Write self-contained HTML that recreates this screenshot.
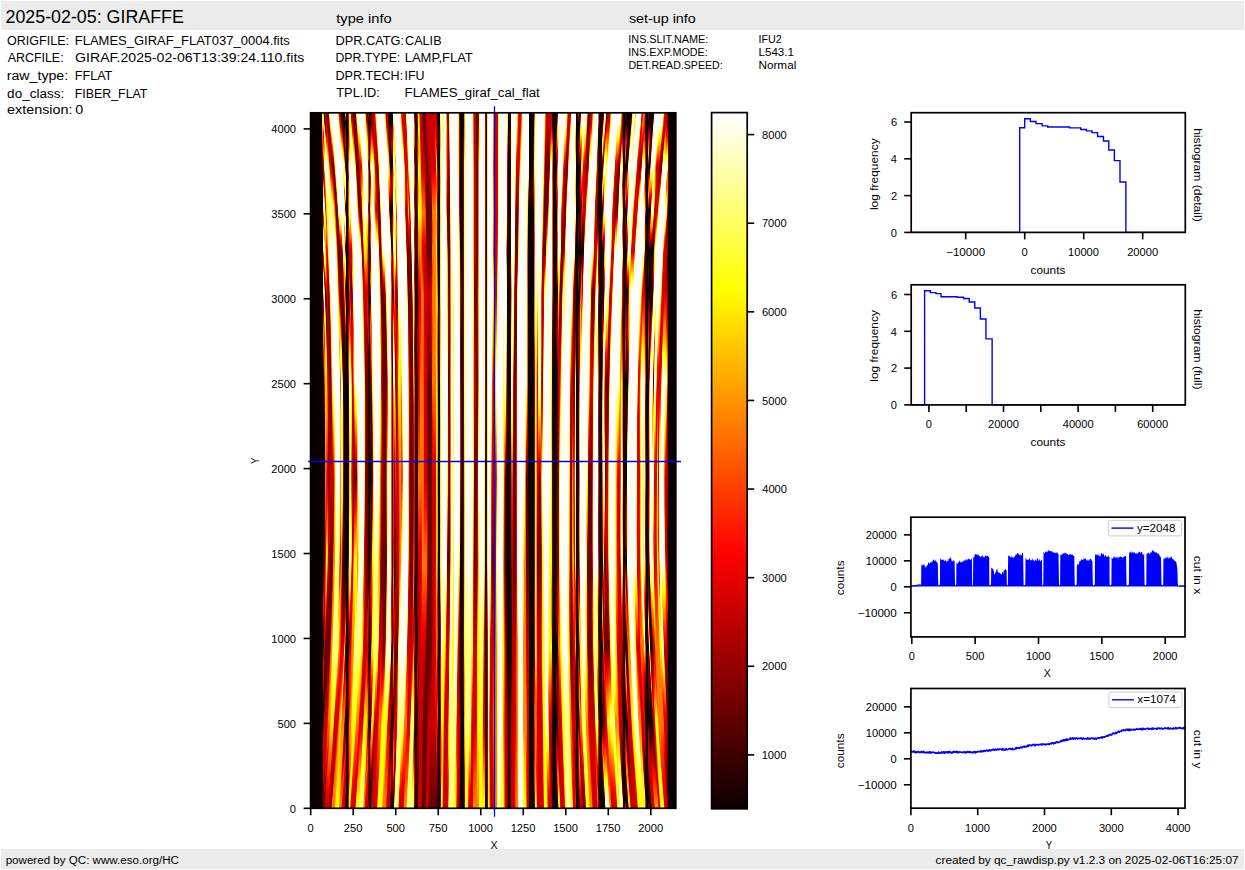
<!DOCTYPE html>
<html><head><meta charset="utf-8"><style>
html,body{margin:0;padding:0;background:#fff;}
svg{display:block;}
i{position:absolute;top:0;width:1.2px;height:100%;display:block;}
text{font-family:"Liberation Sans",sans-serif;}
</style></head><body>
<div style="position:absolute;left:310.6px;top:112.8px;width:365.20px;height:695.50px;overflow:hidden">
<i style="left:-0.6px;background:linear-gradient(#0b0000 -0px,#0b0000 696px)"></i>
<i style="left:0.4px;background:linear-gradient(#0b0000 -0px,#0b0000 696px)"></i>
<i style="left:1.4px;background:linear-gradient(#0b0000 -0px,#0b0000 696px)"></i>
<i style="left:2.4px;background:linear-gradient(#0b0000 -0px,#0b0000 696px)"></i>
<i style="left:3.4px;background:linear-gradient(#0b0000 -0px,#0b0000 696px)"></i>
<i style="left:4.4px;background:linear-gradient(#0b0000 -0px,#0b0000 696px)"></i>
<i style="left:5.4px;background:linear-gradient(#0b0000 -0px,#0b0000 696px)"></i>
<i style="left:6.4px;background:linear-gradient(#0b0000 -0px,#0b0000 696px)"></i>
<i style="left:7.4px;background:linear-gradient(#0b0000 -0px,#0b0000 696px)"></i>
<i style="left:8.4px;background:linear-gradient(#0b0000 -0px,#0b0000 696px)"></i>
<i style="left:9.4px;background:linear-gradient(#0b0000 -0px,#0b0000 696px)"></i>
<i style="left:10.4px;background:linear-gradient(#0b0000 -0px,#0b0000 696px)"></i>
<i style="left:11.4px;background:linear-gradient(#ffff04 -0px,#fff200 11px,#fa0000 35px,#3b0000 54px,#0b0000 112px,#170000 628px,#3b0000 696px)"></i>
<i style="left:12.4px;background:linear-gradient(#ff4100 -0px,#ffe900 3px,#ffff33 4px,#ffffd9 6px,#ffffff 7px,#ffffff 9px,#ffffd6 10px,#fffa00 13px,#ff1700 19px,#df0000 21px,#c90000 22px,#ff0700 26px,#ffa200 37px,#ff4700 44px,#f10000 48px,#be0000 50px,#c80000 54px,#690000 64px,#ff0000 69px,#ffff0e 76px,#ffff75 78px,#ffffb6 82px,#fffffc 93px,#ffffdd 94px,#ffff25 97px,#ffec00 98px,#ff3e00 103px,#f90000 106px,#c80000 110px,#ef0000 111px,#ff9900 115px,#fff500 118px,#ffffcb 125px,#fffffe 128px,#fffff0 133px,#ffff21 137px,#ffeb00 138px,#ff2800 143px,#f10000 145px,#a50000 150px,#9d0000 152px,#ad0000 153px,#ff0100 155px,#fff500 161px,#ffffb3 168px,#ffffec 172px,#ffffe5 173px,#fff400 179px,#ff0700 189px,#780000 197px,#890000 199px,#ff0700 207px,#ff8500 220px,#ff8000 228px,#f60000 239px,#290000 257px,#0b0000 274px,#160000 452px,#810000 474px,#ff0800 486px,#f10000 499px,#740000 512px,#470000 516px,#310000 530px,#5a0000 536px,#f40000 551px,#e50000 568px,#5c0000 582px,#230000 587px,#160000 604px,#e80000 620px,#cd0000 649px,#c80000 666px,#680000 676px,#6c0000 679px,#a30000 685px,#850000 689px,#180000 696px)"></i>
<i style="left:13.4px;background:linear-gradient(#730000 -0px,#120000 6px,#290000 7px,#d30000 10px,#ff1300 11px,#fff700 15px,#ffffcc 18px,#ffffff 19px,#fffffc 22px,#ffff10 27px,#ffc900 30px,#ff9000 35px,#fffa00 42px,#ffffaf 50px,#ffff33 54px,#ffff01 55px,#ff4300 62px,#ff1600 64px,#f60000 70px,#970000 78px,#ff0400 82px,#fffb00 89px,#ffffcb 93px,#fffff1 95px,#fffff6 98px,#ffff67 109px,#ffff5e 110px,#ffff0b 112px,#ff9d00 118px,#ff9600 123px,#ffd200 128px,#fff400 129px,#ffffac 133px,#fffff8 137px,#ffffc2 141px,#fffc00 150px,#ffc100 153px,#f50000 159px,#af0000 162px,#c50000 167px,#ff0b00 171px,#ffa300 176px,#ffef00 178px,#ffff63 181px,#ffffe4 185px,#ffffca 197px,#fff800 205px,#ff5f00 217px,#ff1300 228px,#ff7300 243px,#ff7a00 257px,#fa0000 273px,#240000 308px,#0b0000 332px,#150000 404px,#380000 430px,#400000 448px,#af0000 464px,#bc0000 480px,#ae0000 491px,#d90000 525px,#cf0000 530px,#ab0000 538px,#7c0000 558px,#380000 569px,#2b0000 587px,#c90000 605px,#cb0000 654px,#9a0000 664px,#c50000 673px,#9c0000 677px,#200000 684px,#620000 690px,#c00000 696px)"></i>
<i style="left:14.4px;background:linear-gradient(#cd0000 -0px,#c40000 7px,#8e0000 12px,#900000 18px,#a00000 19px,#ff1100 21px,#fff400 26px,#ffffe7 31px,#ffffff 33px,#fffffc 35px,#ffff89 40px,#ffff6d 45px,#ffff98 49px,#fffffd 54px,#ffffc2 64px,#ffff0e 69px,#ffa500 75px,#f40000 90px,#c70000 93px,#f00000 95px,#ff8700 100px,#ffea00 106px,#ffff1c 110px,#fff100 113px,#ffaa00 125px,#ff9100 133px,#ffeb00 142px,#fffb00 152px,#ff7800 163px,#f40000 170px,#380000 179px,#220000 185px,#fd0000 194px,#ffff02 207px,#ffff74 212px,#ffff7f 223px,#ffff69 228px,#fffa00 237px,#ffcf00 251px,#ffd500 270px,#ffb000 293px,#ffb200 312px,#ff7700 349px,#ff7700 368px,#ff3c00 403px,#f50000 419px,#e50000 437px,#ff1000 446px,#ff6200 477px,#ff3f00 500px,#f50000 511px,#690000 529px,#410000 569px,#b10000 588px,#cd0000 622px,#d40000 646px,#e00000 655px,#e70000 661px,#5a0000 672px,#d60000 685px,#cd0000 696px)"></i>
<i style="left:15.4px;background:linear-gradient(#930000 -0px,#cd0000 8px,#f30000 17px,#ff1f00 27px,#ff4a00 31px,#fff800 36px,#ffffc6 42px,#ffffff 45px,#ffffe5 63px,#ffff6b 79px,#fffc00 85px,#ffd200 95px,#ff1700 110px,#ff6200 117px,#ff3300 129px,#ff0000 135px,#ff4700 163px,#f50000 175px,#cb0000 180px,#b10000 188px,#540000 211px,#ff0600 224px,#ffc200 240px,#fffd00 250px,#ffff1e 257px,#ffed00 273px,#ff7300 316px,#ff0a00 381px,#ff1800 404px,#ff9700 428px,#ffe400 440px,#fff800 449px,#ff8c00 477px,#f40000 492px,#870000 506px,#590000 552px,#9c0000 574px,#cd0000 617px,#ff0600 632px,#ff1000 647px,#dd0000 652px,#950000 658px,#ff0600 672px,#cd0000 692px,#cd0000 696px)"></i>
<i style="left:16.4px;background:linear-gradient(#620000 -0px,#6f0000 8px,#cd0000 20px,#ff0e00 27px,#ffdb00 42px,#ffff05 44px,#ffff9d 48px,#fffffa 53px,#ffffaa 80px,#ffff07 96px,#ffff23 103px,#ffff3c 110px,#fffc00 114px,#ff7600 130px,#ff2400 137px,#f00000 140px,#c10000 144px,#aa0000 155px,#c40000 184px,#a50000 220px,#a10000 246px,#f10000 261px,#ff4400 278px,#ff6b00 306px,#ff2f00 333px,#ee0000 353px,#d20000 365px,#ff1100 382px,#ffc800 438px,#ffa400 449px,#f60000 467px,#a70000 478px,#620000 532px,#b90000 587px,#db0000 601px,#f50000 607px,#ff4d00 620px,#ff2e00 634px,#f20000 641px,#d80000 645px,#ff0f00 653px,#ff3700 659px,#f10000 678px,#cd0000 692px,#cd0000 696px)"></i>
<i style="left:17.4px;background:linear-gradient(#d80000 -0px,#710000 3px,#620000 7px,#830000 20px,#e50000 35px,#ff1600 38px,#fff500 49px,#ffff4c 52px,#ffff9a 55px,#ffffea 61px,#ffff81 95px,#ffff56 102px,#ffff5c 112px,#ffffa3 124px,#ffff69 132px,#fffa00 143px,#ff0000 159px,#800000 167px,#630000 185px,#a40000 212px,#990000 237px,#c80000 273px,#9c0000 328px,#850000 366px,#dd0000 403px,#d60000 429px,#c80000 441px,#a80000 471px,#620000 504px,#720000 545px,#9d0000 567px,#fc0000 582px,#ff2300 592px,#ff8000 605px,#ff4500 623px,#ff1a00 631px,#ff6c00 646px,#f50000 677px,#cd0000 691px,#cd0000 696px)"></i>
<i style="left:18.4px;background:linear-gradient(#ffff49 -0px,#ffff09 3px,#ff6400 8px,#f80000 11px,#640000 16px,#d50000 47px,#fd0000 49px,#ffff04 60px,#ffff83 68px,#ffffc1 76px,#ffff8b 99px,#ffffa8 113px,#ffffc3 128px,#ffffff 140px,#ffffe4 145px,#fff900 166px,#ff0100 182px,#8e0000 191px,#740000 208px,#690000 215px,#790000 248px,#6a0000 270px,#a80000 303px,#a10000 374px,#c70000 426px,#620000 473px,#6f0000 543px,#980000 548px,#ff0400 559px,#ff2f00 567px,#ff7a00 585px,#ff9300 599px,#ff6200 617px,#ffa200 632px,#ff0900 669px,#cd0000 682px,#c20000 695px,#b90000 696px)"></i>
<i style="left:19.4px;background:linear-gradient(#ffffff -0px,#fffff3 4px,#ffff6d 10px,#ffff01 13px,#ff9400 17px,#f40000 22px,#6d0000 28px,#c20000 48px,#e30000 56px,#ff0800 60px,#ffee00 71px,#ffff14 73px,#ffff5f 78px,#ffff98 89px,#ffff91 101px,#ffffff 142px,#fffff2 167px,#fff700 193px,#ff4300 211px,#f50000 219px,#860000 241px,#630000 248px,#7a0000 289px,#c80000 371px,#620000 457px,#6d0000 521px,#ff0d00 536px,#ff6400 545px,#ff7400 564px,#ffbf00 582px,#ff9f00 601px,#ffdb00 617px,#ff4500 654px,#f80000 661px,#cd0000 669px,#c60000 682px,#620000 695px,#620000 696px)"></i>
<i style="left:20.4px;background:linear-gradient(#ffffff -0px,#fffff1 11px,#ffff97 16px,#fff400 20px,#f30000 32px,#7c0000 39px,#750000 43px,#ff0d00 62px,#ffb000 77px,#fffc00 82px,#ffff73 91px,#ffffff 141px,#fffff6 192px,#ffff89 211px,#ffff39 222px,#fff700 229px,#ff8900 252px,#ff0900 272px,#850000 296px,#c60000 369px,#620000 458px,#6c0000 487px,#aa0000 498px,#ff0600 508px,#ff7f00 522px,#ff8800 546px,#fff800 565px,#ffd100 584px,#ffff07 598px,#ffee00 612px,#ff8300 639px,#f70000 649px,#cd0000 654px,#c00000 670px,#680000 683px,#6d0000 688px,#ff0e00 695px,#ff2500 696px)"></i>
<i style="left:21.4px;background:linear-gradient(#ffffff -0px,#ffffed 15px,#ffffb3 21px,#fff900 28px,#ff4400 34px,#f40000 39px,#750000 49px,#670000 54px,#ff0200 67px,#ffae00 80px,#ffff07 88px,#ffff88 98px,#ffffff 141px,#fffff4 222px,#ffffcf 244px,#ffff6f 269px,#fff800 281px,#ff2a00 320px,#f30000 340px,#6b0000 449px,#ff0800 474px,#ff6800 489px,#ff7f00 500px,#ff8d00 522px,#ffff0b 537px,#ffff54 545px,#ffff08 565px,#ffff29 585px,#fff200 611px,#ffb900 624px,#ff0000 635px,#cd0000 640px,#c00000 657px,#780000 671px,#790000 675px,#ff0000 682px,#ff7f00 688px,#ff7f00 696px)"></i>
<i style="left:22.4px;background:linear-gradient(#ffffff -0px,#fffff5 22px,#ffff88 32px,#ffff39 35px,#fff400 37px,#ff1700 44px,#ca0000 46px,#880000 50px,#620000 55px,#780000 64px,#ba0000 70px,#fe0000 74px,#ff6000 84px,#fffa00 93px,#ffff88 98px,#ffffff 141px,#fffff6 269px,#fff700 302px,#ff0300 351px,#c40000 370px,#bd0000 405px,#fa0000 425px,#ff7e00 449px,#ff8b00 488px,#ffcb00 501px,#ffff07 509px,#ffff87 522px,#ffff77 537px,#ffff4c 556px,#ffff39 576px,#fff400 608px,#ff0800 620px,#cd0000 625px,#c00000 644px,#860000 660px,#a90000 664px,#ff0a00 670px,#ff6700 675px,#ff7f00 694px,#ff7f00 696px)"></i>
<i style="left:23.4px;background:linear-gradient(#ffffff -0px,#fffff6 34px,#ffff5d 44px,#ffff15 47px,#ffcf00 49px,#fe0000 55px,#700000 60px,#620000 65px,#6b0000 75px,#ff0d00 86px,#ff5700 90px,#ff9600 99px,#ffff0c 106px,#ffff95 112px,#ffffbe 116px,#ffffff 142px,#fffff4 273px,#ffff93 299px,#fff700 325px,#ff6700 364px,#ffa900 421px,#ff8600 449px,#ffff07 475px,#ffff68 488px,#ffff87 498px,#ffff79 541px,#ffff20 590px,#ffec00 593px,#ff0600 605px,#cd0000 608px,#be0000 632px,#980000 647px,#ff0500 657px,#ff5500 663px,#ff7f00 677px,#ff8c00 695px,#ff9700 696px)"></i>
<i style="left:24.4px;background:linear-gradient(#ffffff -0px,#fffff8 47px,#ffff1f 58px,#ffef00 60px,#ff0200 67px,#660000 75px,#6a0000 90px,#ff0800 99px,#ff7300 107px,#ffa800 115px,#fffb00 120px,#ffffcf 128px,#fffffe 138px,#fffff3 298px,#ffff58 377px,#ffff34 410px,#ffff5a 438px,#ffff84 450px,#ffff7b 540px,#ffff3f 572px,#ffff01 576px,#ff7000 586px,#ff1500 591px,#e60000 599px,#b20000 634px,#ff0c00 645px,#ff5800 653px,#ff7f00 663px,#ff9800 683px,#ffff00 695px,#ffff00 696px)"></i>
<i style="left:25.4px;background:linear-gradient(#ffffff -0px,#fffff9 61px,#ffffa8 67px,#ffff04 72px,#ff6a00 77px,#f70000 80px,#b40000 82px,#650000 90px,#640000 106px,#ff0600 118px,#ffd700 134px,#fffa00 136px,#ffffc0 147px,#ffffd8 161px,#ffffff 169px,#fffff2 372px,#ffff87 457px,#ffff79 541px,#ffff53 554px,#fff200 563px,#ff8c00 570px,#ff3c00 577px,#fe0000 587px,#c20000 619px,#ff0700 632px,#ff7f00 646px,#ffa400 669px,#fff800 683px,#ffff00 696px)"></i>
<i style="left:26.4px;background:linear-gradient(#ffffb6 -0px,#ffffff 4px,#fffff9 76px,#ffffc8 82px,#ffff19 86px,#fff000 87px,#ff1800 93px,#ef0000 94px,#760000 97px,#620000 99px,#6d0000 126px,#8d0000 130px,#ff0300 139px,#ffff02 163px,#ffff4d 169px,#ffffbf 187px,#ffffed 194px,#ffffff 205px,#fffff3 372px,#ffff87 456px,#ffff7e 501px,#ffff40 515px,#ffff5a 527px,#ffff81 535px,#ffff3e 545px,#fffc00 548px,#ff5d00 561px,#ff2a00 569px,#f30000 588px,#cd0000 606px,#e10000 616px,#ff1200 620px,#ff7f00 632px,#ff9400 643px,#ffe900 674px,#ffff00 696px)"></i>
<i style="left:27.4px;background:linear-gradient(#ffa700 -0px,#ffff0c 4px,#ffffff 16px,#fffffe 97px,#ffffda 98px,#ffff0a 101px,#ff0300 108px,#6b0000 114px,#6a0000 148px,#e20000 162px,#ff0d00 169px,#ff8d00 181px,#fff600 191px,#ffff0b 205px,#ffffff 228px,#fffff3 372px,#ffff87 456px,#ffff83 468px,#fffd00 481px,#ffbf00 500px,#ffff07 513px,#ffff45 522px,#fff800 532px,#ff6100 546px,#ff2100 568px,#f00000 576px,#cd0000 589px,#d50000 600px,#ff0a00 605px,#ff7f00 616px,#ff8f00 626px,#ffcf00 642px,#ffe300 670px,#fffc00 694px,#ffe800 696px)"></i>
<i style="left:28.4px;background:linear-gradient(#cd0000 -0px,#db0000 4px,#ff0f00 6px,#ffff0a 15px,#ffffa4 22px,#ffffff 29px,#fffff4 98px,#ffff04 109px,#ffa100 115px,#fa0000 121px,#850000 128px,#620000 135px,#690000 169px,#b10000 181px,#ff0800 190px,#ffcf00 206px,#ffe500 218px,#ffab00 230px,#ffaf00 238px,#ffff0a 249px,#fffffd 268px,#ffffcd 293px,#ffffff 359px,#ffffb3 388px,#ffff4f 424px,#fff800 434px,#ff4b00 460px,#ff3000 469px,#ff9b00 486px,#ffd600 497px,#ffc500 510px,#ff7900 524px,#ff7000 540px,#ff4800 548px,#f30000 559px,#cd0000 569px,#d80000 583px,#ff0f00 590px,#ff6d00 600px,#ff9900 611px,#ffe300 625px,#ffbd00 646px,#ffeb00 681px,#ff7f00 695px,#ff7f00 696px)"></i>
<i style="left:29.4px;background:linear-gradient(#930000 -0px,#cd0000 8px,#ff0900 15px,#fff200 24px,#ffff48 27px,#ffffa5 32px,#fffffc 41px,#fffff9 98px,#ffff80 104px,#ffff04 109px,#fb0000 127px,#620000 138px,#6b0000 186px,#a30000 194px,#ff0b00 202px,#ff6100 210px,#ffff06 229px,#ffff56 237px,#fff800 250px,#ff4600 268px,#ff7900 283px,#ffd400 300px,#ffe100 322px,#ff8300 367px,#ff8f00 399px,#ff4700 419px,#ff0100 442px,#ff0e00 450px,#ff9100 470px,#ffa300 481px,#ff7200 495px,#ff3f00 513px,#ff3e00 527px,#ff0900 537px,#cd0000 547px,#d80000 565px,#ff1000 575px,#ff4900 585px,#ff7400 594px,#fffe00 608px,#ffd200 617px,#ffa100 629px,#ffcf00 665px,#ff6700 680px,#ff7f00 695px,#ff7f00 696px)"></i>
<i style="left:30.4px;background:linear-gradient(#330000 -0px,#850000 10px,#ff0300 17px,#ffa900 29px,#fffe00 33px,#ffffa0 40px,#ffffee 48px,#ffffff 67px,#fffffc 106px,#ffff8c 112px,#fff100 117px,#ff2700 124px,#ec0000 128px,#620000 138px,#500000 197px,#560000 207px,#da0000 220px,#ff1700 224px,#fff500 237px,#ffffa4 256px,#fffffe 269px,#fffff2 282px,#ffff7f 298px,#ffff5c 317px,#ffff9d 342px,#fffffb 364px,#fffe00 400px,#ffac00 432px,#ff8100 452px,#ff7900 459px,#fc0000 478px,#d30000 494px,#c00000 517px,#bc0000 526px,#ef0000 555px,#ff2300 569px,#ff6d00 581px,#ffe900 592px,#ffea00 598px,#ff8600 612px,#ffbe00 650px,#ff2d00 664px,#ff3300 671px,#ff7f00 689px,#ff5d00 693px,#ff3200 696px)"></i>
<i style="left:31.4px;background:linear-gradient(#0b0000 -0px,#160000 8px,#720000 17px,#ff0a00 24px,#fff700 37px,#ffff49 42px,#ffffd0 49px,#fffff8 54px,#ffffdd 59px,#ffffff 65px,#ffffff 123px,#ffff80 127px,#ffff01 130px,#ff0800 137px,#870000 142px,#720000 168px,#2f0000 237px,#ff0a00 253px,#ffff0c 268px,#ffffa8 281px,#ffff70 304px,#ffff64 355px,#ffff19 373px,#fff000 381px,#ff6500 412px,#f30000 429px,#4d0000 453px,#410000 460px,#770000 487px,#910000 507px,#ff0c00 556px,#ff3700 562px,#ffdb00 575px,#fff000 580px,#ff5400 594px,#ff5e00 601px,#ff8d00 616px,#ffab00 635px,#f80000 648px,#e50000 653px,#ff0d00 663px,#ff6900 678px,#f20000 688px,#cd0000 692px,#cd0000 696px)"></i>
<i style="left:32.4px;background:linear-gradient(#0b0000 -0px,#1a0000 13px,#370000 24px,#910000 29px,#fd0000 33px,#ff8d00 38px,#ffff0b 44px,#ffffc6 50px,#fffffb 54px,#ffffa3 59px,#ffff28 63px,#ffff28 68px,#ffff74 73px,#ffffff 78px,#fffff3 98px,#ffffa3 103px,#ffff9e 108px,#ffffe0 113px,#ffffff 116px,#fffff6 138px,#ffffc0 142px,#ffff0c 147px,#ffa000 153px,#ff0700 162px,#b80000 176px,#4c0000 201px,#0d0000 279px,#b50000 303px,#e70000 325px,#b70000 355px,#490000 400px,#0b0000 434px,#1e0000 455px,#de0000 539px,#ff0b00 542px,#ffda00 557px,#fff000 561px,#ff1d00 575px,#f50000 580px,#ff8000 608px,#ff8c00 620px,#f40000 629px,#990000 635px,#d30000 650px,#ff1000 656px,#ff4a00 665px,#f90000 674px,#cd0000 679px,#cd0000 696px)"></i>
<i style="left:33.4px;background:linear-gradient(#0b0000 -0px,#120000 10px,#550000 17px,#440000 33px,#3e0000 37px,#960000 41px,#f80000 44px,#ffe100 50px,#ffff11 52px,#ffff9c 58px,#ffffec 63px,#ffffc2 66px,#fffa00 72px,#ff3b00 78px,#ffab00 85px,#fff700 88px,#ffff7e 91px,#ffffe7 93px,#ffffff 95px,#ffffec 101px,#ffff91 106px,#fff300 111px,#ff9b00 114px,#ff9300 117px,#ffdb00 124px,#ffff00 126px,#ffffff 133px,#fffff0 139px,#ffff7a 145px,#fffc00 149px,#ffc800 152px,#ffb400 161px,#ffd200 170px,#fff000 173px,#ff4f00 185px,#f30000 191px,#970000 200px,#300000 229px,#0b0000 285px,#170000 453px,#ae0000 516px,#ff0a00 523px,#fffa00 539px,#fb0000 553px,#950000 561px,#e60000 574px,#ff1100 579px,#ff5600 592px,#ff6f00 603px,#f10000 610px,#4b0000 620px,#970000 636px,#ff0a00 646px,#ff2d00 651px,#f50000 660px,#cd0000 667px,#c70000 691px,#790000 696px)"></i>
<i style="left:34.4px;background:linear-gradient(#ffff2a -0px,#ffe300 1px,#ff0400 5px,#260000 9px,#120000 10px,#e10000 24px,#ca0000 31px,#840000 37px,#890000 41px,#3a0000 50px,#9c0000 54px,#ed0000 56px,#ff6600 59px,#ffff06 63px,#ffff4d 65px,#ffffdc 75px,#ffffed 78px,#ffff4a 82px,#ffff18 83px,#ffec00 84px,#f30000 90px,#5f0000 93px,#560000 94px,#cc0000 98px,#ff0000 99px,#ffe000 104px,#ffff0a 105px,#fffffa 110px,#ffffff 114px,#ffff96 118px,#fffb00 122px,#ff0100 129px,#7b0000 132px,#600000 133px,#c80000 138px,#f40000 139px,#fffe00 146px,#ffffc5 151px,#ffffd5 153px,#ffff30 159px,#ffef00 161px,#f60000 169px,#6c0000 173px,#940000 179px,#ff0300 184px,#ffab00 194px,#ffca00 198px,#f60000 213px,#880000 222px,#460000 236px,#0b0000 272px,#150000 452px,#740000 489px,#ff0d00 505px,#ffa000 515px,#ff1900 526px,#e40000 529px,#2b0000 539px,#730000 552px,#ff0200 566px,#ff2600 573px,#ff3000 586px,#ec0000 591px,#0f0000 604px,#240000 613px,#570000 621px,#ff0000 634px,#ff0400 640px,#cd0000 654px,#c20000 679px,#3b0000 688px,#500000 692px,#8f0000 696px)"></i>
<i style="left:35.4px;background:linear-gradient(#0b0000 -0px,#0b0000 696px)"></i>
<i style="left:36.4px;background:linear-gradient(#0b0000 -0px,#0b0000 696px)"></i>
<i style="left:37.4px;background:linear-gradient(#ff2100 -0px,#f10000 3px,#c40000 7px,#d00000 13px,#630000 20px,#870000 25px,#eb0000 33px,#ff1c00 42px,#ff5a00 55px,#ff4e00 58px,#ff0b00 60px,#d10000 62px,#d40000 66px,#ff0500 68px,#ff3900 71px,#ff3200 81px,#ff5a00 90px,#ff4b00 100px,#ff4000 102px,#ff0600 104px,#aa0000 107px,#a20000 113px,#e00000 118px,#6c0000 139px,#690000 150px,#ac0000 160px,#6c0000 167px,#240000 173px,#100000 180px,#450000 189px,#ad0000 203px,#ff0e00 239px,#ff2f00 255px,#f60000 261px,#240000 283px,#140000 381px,#2a0000 410px,#330000 432px,#8d0000 444px,#ff0700 455px,#ff3500 461px,#f20000 485px,#960000 514px,#1c0000 529px,#130000 536px,#460000 544px,#940000 554px,#a40000 588px,#520000 597px,#6f0000 605px,#780000 613px,#c20000 623px,#9a0000 649px,#9c0000 662px,#800000 673px,#5a0000 676px,#b00000 681px,#ff0500 684px,#ff0500 696px)"></i>
<i style="left:38.4px;background:linear-gradient(#ffff87 -0px,#ffff85 6px,#ffff0b 12px,#ff8e00 29px,#ff9e00 34px,#fffb00 40px,#ffffd6 51px,#ffffff 54px,#ffffff 66px,#ffff73 70px,#ffff60 73px,#ffff2f 85px,#ffff48 91px,#ffff7d 99px,#ffff44 108px,#fffd00 112px,#ff6400 118px,#f70000 132px,#c10000 142px,#c30000 153px,#f30000 163px,#ff6100 172px,#f70000 182px,#ad0000 193px,#a90000 201px,#ff0400 208px,#ffef00 234px,#ffff23 240px,#fffffe 268px,#ffffe3 284px,#ffff53 299px,#fff800 312px,#ffb400 338px,#ffd700 391px,#ffff10 408px,#ffff6e 423px,#ffffec 434px,#fffffb 448px,#fff600 479px,#ff0f00 504px,#de0000 508px,#9d0000 513px,#810000 526px,#ad0000 535px,#e70000 542px,#ff1400 563px,#f20000 583px,#e10000 589px,#ff0f00 598px,#ff7900 613px,#ff5100 633px,#ff5d00 650px,#ff3200 658px,#ff1900 661px,#ff9500 672px,#fffa00 676px,#ffff00 696px)"></i>
<i style="left:39.4px;background:linear-gradient(#ffb300 -0px,#ffff0d 3px,#ffff87 6px,#ffff9d 21px,#ffff51 30px,#ffff50 42px,#ffffa4 49px,#ffffff 54px,#fffffe 84px,#ffff75 98px,#fff500 104px,#ffb800 109px,#ff5a00 125px,#f60000 134px,#c90000 139px,#760000 172px,#ff0800 189px,#ff5100 201px,#ff1d00 210px,#ff3000 223px,#ffa100 237px,#ffff00 244px,#fffffa 267px,#ffffce 294px,#ffffb1 330px,#ffff8d 368px,#ffffbb 408px,#ffffc4 433px,#fffffa 448px,#fff800 471px,#ff5a00 482px,#fa0000 492px,#bd0000 506px,#cd0000 529px,#ee0000 543px,#ff2100 557px,#ff3a00 579px,#ff7f00 595px,#ff7f00 615px,#ffa200 632px,#ff6600 643px,#ff8500 651px,#ffcf00 658px,#ffff00 661px,#fffb00 684px,#ff0100 696px)"></i>
<i style="left:40.4px;background:linear-gradient(#cd0000 -0px,#cf0000 6px,#ff0700 8px,#ffff00 16px,#ffff95 20px,#ffffb4 26px,#ffffc8 37px,#ffffcb 47px,#ffffff 56px,#fffff2 103px,#ffffcf 108px,#ffff68 113px,#ffff00 117px,#fb0000 132px,#d10000 138px,#f20000 147px,#b60000 156px,#8f0000 161px,#680000 180px,#930000 204px,#f50000 225px,#ff0b00 247px,#ff9500 264px,#ffd700 273px,#ffff01 293px,#ffd900 313px,#ff3600 365px,#ffcf00 409px,#fffc00 420px,#ffe500 439px,#ffa800 449px,#ff0000 464px,#c70000 472px,#da0000 512px,#ff1100 521px,#ff6900 541px,#ff6800 563px,#ff7f00 579px,#ffa800 596px,#ffea00 613px,#ffac00 629px,#ffdc00 641px,#ffff00 645px,#fff600 669px,#ff1700 681px,#ea0000 683px,#ce0000 687px,#cd0000 696px)"></i>
<i style="left:41.4px;background:linear-gradient(#850000 -0px,#ff0a00 16px,#ff5100 21px,#fff200 27px,#ffffc1 35px,#ffffff 58px,#fffff7 117px,#ffff81 129px,#ffff50 132px,#ffff0c 134px,#ffa900 139px,#ff8d00 150px,#ffb000 157px,#ffbd00 161px,#ff7a00 170px,#fd0000 178px,#8d0000 186px,#e00000 209px,#ca0000 234px,#bf0000 246px,#c80000 275px,#ce0000 308px,#e70000 339px,#d50000 368px,#e50000 399px,#be0000 422px,#d70000 473px,#ff1000 483px,#ff9e00 511px,#ff7f00 547px,#ff8a00 561px,#fffd00 586px,#ffff17 595px,#ffef00 612px,#fff200 624px,#ffff00 652px,#ff7f00 662px,#ff0400 669px,#cd0000 693px,#cd0000 696px)"></i>
<i style="left:42.4px;background:linear-gradient(#620000 -0px,#700000 11px,#ff0400 21px,#ffe600 36px,#ffff02 37px,#ffff96 43px,#fffff1 50px,#ffffff 73px,#fffffa 138px,#ffff9d 151px,#ffff6b 163px,#ffffb4 173px,#ffffff 179px,#fffff8 186px,#ffff12 196px,#fff300 198px,#ff5600 216px,#ff5600 222px,#ff8800 247px,#ff5b00 269px,#f70000 284px,#a00000 308px,#690000 369px,#b50000 420px,#ff0d00 436px,#ff8600 454px,#ffd500 473px,#ff8300 534px,#ffff0a 554px,#ffff37 561px,#ffff37 577px,#ffff00 616px,#fff400 637px,#ff9b00 646px,#ff2d00 654px,#fc0000 666px,#cd0000 694px,#cd0000 696px)"></i>
<i style="left:43.4px;background:linear-gradient(#620000 -0px,#690000 23px,#ff0700 32px,#ffb500 40px,#ffff0a 45px,#fffff0 53px,#ffffff 57px,#fffff2 166px,#fffff8 219px,#ffff8a 231px,#ffff5a 254px,#ffff79 268px,#fffd00 279px,#ff0200 322px,#670000 365px,#ff0a00 402px,#ffb800 433px,#fffd00 449px,#ffb300 506px,#ffff0c 523px,#ffff85 534px,#ffff00 614px,#ffdd00 626px,#ff5700 638px,#ff2500 648px,#ed0000 673px,#cd0000 694px,#cd0000 696px)"></i>
<i style="left:44.4px;background:linear-gradient(#a70000 -0px,#6d0000 2px,#6b0000 38px,#ff0900 45px,#ffff06 54px,#ffffd6 68px,#ffffff 71px,#fffffa 268px,#fffc00 296px,#f80000 337px,#640000 364px,#ff0c00 398px,#fffd00 449px,#ffe700 477px,#ffff0f 494px,#ffff41 508px,#ffff82 536px,#fffb00 608px,#ff5400 627px,#f50000 664px,#cd0000 680px,#d70000 688px,#ff0100 690px,#ff7f00 696px)"></i>
<i style="left:45.4px;background:linear-gradient(#ffff2b -0px,#ffff07 2px,#ff0300 11px,#680000 17px,#620000 53px,#fc0000 60px,#ffd600 71px,#ffff02 75px,#fffffd 88px,#fffff6 269px,#ffff12 298px,#ffec00 303px,#f90000 339px,#640000 364px,#ff0900 392px,#ffd300 432px,#fffa00 450px,#ffed00 491px,#ffff13 503px,#ffff82 526px,#ffff6c 548px,#ffff15 589px,#ffe600 595px,#ff7a00 610px,#ff1e00 646px,#f00000 653px,#cd0000 664px,#d80000 673px,#ff0c00 676px,#ffff00 688px,#ffff00 696px)"></i>
<i style="left:46.4px;background:linear-gradient(#ffffff -0px,#fffff4 3px,#ffff70 10px,#fffd00 14px,#ffa800 18px,#f80000 25px,#750000 32px,#620000 48px,#620000 70px,#ff0a00 79px,#ffe400 94px,#ffff00 96px,#ffffe7 106px,#ffffff 110px,#fffff4 274px,#ffff7d 304px,#fff800 328px,#ff8200 365px,#ffd200 412px,#ffae00 437px,#ff8300 449px,#ffca00 473px,#ffff0d 482px,#ffff93 501px,#ffffa6 511px,#ffff3c 568px,#fff700 578px,#ffad00 592px,#ff4500 628px,#f90000 637px,#cd0000 646px,#d40000 657px,#ff0800 661px,#ffc800 673px,#ffff00 691px,#ffff00 696px)"></i>
<i style="left:47.4px;background:linear-gradient(#ffffff -0px,#fffff7 10px,#ffff82 17px,#fff700 22px,#fc0000 38px,#810000 48px,#620000 57px,#620000 88px,#fd0000 98px,#fff700 110px,#ffffc0 121px,#ffffff 129px,#fffff7 365px,#fff900 413px,#fff200 435px,#ffff12 445px,#ffffde 471px,#ffff68 546px,#fff600 567px,#ff6e00 609px,#f70000 621px,#cd0000 628px,#d70000 641px,#ff0f00 647px,#ff8e00 658px,#ffff00 690px,#ffff00 696px)"></i>
<i style="left:48.4px;background:linear-gradient(#ffffff -0px,#fffff3 11px,#ffff7a 19px,#ffff04 25px,#ff7900 36px,#fb0000 47px,#640000 70px,#660000 98px,#ff0200 108px,#ffe600 119px,#ffff21 122px,#ffffbf 131px,#ffffff 138px,#fffff4 369px,#ffffde 401px,#ffffff 424px,#ffffec 461px,#ffff74 538px,#fff400 564px,#ff8b00 590px,#f80000 604px,#cd0000 609px,#dd0000 626px,#ff1300 634px,#ff5500 643px,#ffd100 672px,#ffff00 685px,#ffff20 691px,#ffff4e 696px)"></i>
<i style="left:49.4px;background:linear-gradient(#ffffff -0px,#ffffee 15px,#ffffa9 23px,#ffff00 31px,#ff6a00 39px,#f10000 50px,#d10000 54px,#ff0600 62px,#f20000 70px,#750000 80px,#620000 102px,#750000 108px,#ec0000 116px,#ff1900 118px,#fffb00 126px,#fffff6 137px,#fffff3 456px,#ffff79 535px,#fff800 551px,#ffa000 572px,#ff3800 584px,#ff0100 589px,#cd0000 604px,#f20000 619px,#ff8100 653px,#fff800 667px,#ffff0c 674px,#ffff87 689px,#ffff87 696px)"></i>
<i style="left:50.4px;background:linear-gradient(#ffffff -0px,#fffff4 24px,#ffff82 35px,#ffff1a 40px,#fffe00 41px,#f80000 52px,#d20000 54px,#ff0900 59px,#ff6a00 72px,#ff7600 80px,#f90000 90px,#640000 98px,#620000 126px,#fe0000 133px,#ffbf00 140px,#fffe00 143px,#ffff9f 149px,#ffffae 166px,#fffffe 180px,#fffff3 456px,#ffff9d 508px,#ffff55 519px,#ffff01 533px,#ffbc00 555px,#ff8a00 561px,#ff1000 572px,#d70000 580px,#d60000 610px,#ff1100 625px,#ff4300 636px,#fff400 651px,#ffff14 660px,#ffff71 675px,#ffff87 696px)"></i>
<i style="left:51.4px;background:linear-gradient(#ffffff -0px,#fffff9 38px,#ffff59 49px,#fff800 54px,#ff9600 64px,#ff8b00 71px,#ffea00 81px,#ffff01 97px,#fe0000 113px,#ad0000 119px,#620000 127px,#780000 146px,#8e0000 150px,#fe0000 156px,#ffac00 168px,#ffff03 179px,#ffffe3 211px,#ffffff 230px,#fffff3 456px,#ffffbd 481px,#ffff01 496px,#ffc200 510px,#ffd600 522px,#fff800 534px,#ff0700 553px,#cd0000 561px,#d60000 610px,#ff0300 618px,#fff100 634px,#ffff18 646px,#ffff5a 661px,#ffff87 694px,#ffff6c 696px)"></i>
<i style="left:52.4px;background:linear-gradient(#ffffff -0px,#fffff7 54px,#ffff7e 65px,#ffff38 79px,#ffff68 88px,#fffff7 97px,#ffffd0 100px,#ffff36 111px,#fff300 119px,#ffb800 128px,#ff0100 140px,#830000 149px,#db0000 180px,#ff0d00 186px,#fffb00 217px,#ffff64 232px,#fffffe 268px,#ffffea 308px,#fffffa 371px,#ffffde 428px,#ffffd5 435px,#ffff10 452px,#ffc600 460px,#ff4500 481px,#ff9000 505px,#ff3600 522px,#ef0000 530px,#cd0000 535px,#d30000 598px,#ff0c00 602px,#fffe00 617px,#ffff2a 637px,#ffff4c 659px,#ffff4f 674px,#ffff68 680px,#fffd00 686px,#ff7f00 695px,#ff7f00 696px)"></i>
<i style="left:53.4px;background:linear-gradient(#ffff94 -0px,#ffffff 6px,#fffffb 71px,#ffffc5 82px,#ffffe0 94px,#fffffb 98px,#ffff63 120px,#ffff0c 132px,#ffec00 140px,#ff9900 150px,#ff0700 160px,#c30000 172px,#ba0000 194px,#b20000 212px,#e40000 225px,#ff1600 232px,#ffff00 269px,#ffff28 343px,#fff300 373px,#ff8f00 404px,#f50000 429px,#cf0000 437px,#dd0000 452px,#ff1100 467px,#ff0d00 485px,#db0000 497px,#b40000 507px,#cd0000 560px,#d20000 577px,#ff0c00 583px,#ffdc00 599px,#ffff04 612px,#ffff2f 641px,#ffff0a 657px,#ffff1e 665px,#ffeb00 668px,#ff6a00 680px,#ff7f00 691px,#ff4400 696px)"></i>
<i style="left:54.4px;background:linear-gradient(#ff7f00 -0px,#ffff01 6px,#ffffbd 17px,#fffff9 20px,#fffff9 98px,#ffff85 112px,#ffff43 127px,#fff400 139px,#f60000 173px,#ca0000 181px,#6c0000 269px,#cd0000 290px,#dd0000 316px,#6b0000 361px,#940000 403px,#b70000 442px,#900000 485px,#cd0000 545px,#dd0000 557px,#ff0f00 565px,#ff8900 579px,#ffff06 611px,#ffff0f 623px,#ffde00 636px,#ffed00 648px,#ff6a00 660px,#ff4100 665px,#ff6d00 677px,#f30000 688px,#cd0000 692px,#cd0000 696px)"></i>
<i style="left:55.4px;background:linear-gradient(#cd0000 -0px,#ce0000 6px,#ff0f00 9px,#ffc100 16px,#ffff08 21px,#ffff62 30px,#fffff3 34px,#fffffb 55px,#ffffa2 70px,#ffffff 75px,#fffff6 98px,#ffff7e 107px,#ffff3c 115px,#fffa00 121px,#ffc700 145px,#f60000 173px,#cd0000 181px,#620000 278px,#700000 385px,#6c0000 456px,#dd0000 541px,#ff1000 551px,#ff6900 574px,#ff9e00 593px,#ffe400 604px,#ffa900 623px,#ffbb00 631px,#ff6500 638px,#ff1100 648px,#ff6000 661px,#ff2200 671px,#f40000 675px,#cd0000 693px,#cd0000 696px)"></i>
<i style="left:56.4px;background:linear-gradient(#590000 -0px,#440000 3px,#a90000 10px,#fd0000 14px,#ff5200 21px,#ffff02 29px,#ffff13 30px,#fffb00 35px,#ffff20 45px,#ffff76 47px,#ffffe5 49px,#fffffe 51px,#fffffd 65px,#fffffe 70px,#ffff84 75px,#ffff3a 88px,#ffffff 93px,#fffff6 98px,#fffa00 111px,#ff9100 126px,#ffa100 133px,#ff4700 146px,#ff1b00 168px,#e70000 175px,#d50000 180px,#ff0900 191px,#ef0000 206px,#820000 224px,#620000 293px,#6c0000 456px,#870000 491px,#f60000 507px,#ff0800 523px,#d30000 535px,#ff0000 549px,#ff0900 571px,#ff7c00 584px,#ff8700 596px,#ff7c00 606px,#ff8100 613px,#ff3400 619px,#f30000 628px,#e00000 631px,#ff1200 636px,#ff5200 646px,#ff4100 654px,#ff0400 663px,#c20000 692px,#a00000 695px,#b50000 696px)"></i>
<i style="left:57.4px;background:linear-gradient(#c40000 -0px,#b40000 3px,#180000 9px,#1e0000 12px,#aa0000 21px,#ff0b00 37px,#ff4a00 45px,#ef0000 48px,#b90000 50px,#b30000 53px,#f00000 55px,#ff5200 58px,#ff4d00 71px,#ff5a00 88px,#fe0000 91px,#c30000 93px,#b40000 97px,#fe0000 100px,#ff3400 102px,#f10000 115px,#990000 128px,#630000 133px,#710000 138px,#ba0000 143px,#490000 166px,#d90000 223px,#360000 241px,#280000 248px,#330000 376px,#280000 465px,#330000 472px,#d90000 489px,#af0000 509px,#3c0000 548px,#790000 562px,#b70000 572px,#ad0000 588px,#b80000 603px,#5d0000 609px,#4b0000 613px,#770000 618px,#8f0000 628px,#c20000 636px,#960000 649px,#780000 681px,#610000 685px,#450000 688px,#a30000 692px,#ff0500 695px,#ff0500 696px)"></i>
<i style="left:58.4px;background:linear-gradient(#0b0000 -0px,#0b0000 696px)"></i>
<i style="left:59.4px;background:linear-gradient(#4c0000 -0px,#510000 10px,#ff0c00 32px,#fffc00 53px,#ffd100 55px,#ff1d00 62px,#e70000 65px,#bb0000 69px,#ff0c00 76px,#fffc00 97px,#ffbe00 100px,#ff2700 108px,#f70000 113px,#f30000 116px,#ff5800 124px,#ff1100 132px,#e10000 135px,#6d0000 143px,#730000 146px,#ff0700 158px,#ff5900 163px,#ff5000 169px,#ff0100 175px,#6a0000 183px,#320000 187px,#ed0000 198px,#ff2f00 204px,#ff6a00 216px,#ff0000 231px,#4a0000 270px,#470000 289px,#750000 312px,#400000 345px,#110000 365px,#740000 398px,#660000 420px,#410000 433px,#5e0000 451px,#d40000 477px,#a80000 498px,#5d0000 508px,#380000 523px,#0e0000 535px,#210000 542px,#da0000 556px,#ff0800 563px,#df0000 570px,#820000 584px,#0d0000 609px,#250000 614px,#f70000 625px,#ff4200 630px,#ff0e00 643px,#d30000 650px,#900000 659px,#160000 681px,#170000 693px,#380000 696px)"></i>
<i style="left:60.4px;background:linear-gradient(#620000 -0px,#670000 10px,#ff0800 22px,#ffff00 42px,#ffffff 54px,#fffff7 69px,#ffff67 75px,#ffff27 81px,#ffff34 87px,#ffff81 92px,#ffffff 98px,#fffff5 116px,#ffff9c 122px,#ffff8f 129px,#ffffe2 136px,#ffffff 139px,#ffffff 144px,#ffff48 153px,#ffff11 160px,#ffff2c 167px,#ffff95 174px,#ffffff 179px,#fffffe 187px,#ffff07 198px,#ff5b00 215px,#ff6a00 230px,#ff7100 244px,#ff1c00 259px,#ed0000 264px,#690000 282px,#4a0000 294px,#110000 370px,#5a0000 432px,#ff0700 457px,#ff1f00 471px,#ff0e00 489px,#aa0000 508px,#ff0a00 523px,#ffcd00 541px,#f30000 573px,#900000 590px,#ff0700 600px,#ffe400 613px,#ff9a00 628px,#fd0000 647px,#510000 663px,#330000 675px,#cd0000 693px,#cd0000 696px)"></i>
<i style="left:61.4px;background:linear-gradient(#b80000 -0px,#7b0000 12px,#b50000 19px,#ff1000 26px,#ffff07 41px,#fffff5 53px,#ffffe3 65px,#ffffff 73px,#fffffc 97px,#fffff8 228px,#ffff6d 243px,#ffff39 259px,#ffff35 269px,#fff600 278px,#fd0000 320px,#740000 358px,#730000 367px,#ff0b00 401px,#ffde00 434px,#fff600 449px,#ff9500 469px,#ff9200 487px,#ffff0a 506px,#ffff05 530px,#ffe100 538px,#ff4700 563px,#ff8e00 577px,#ffff07 588px,#ffff20 590px,#fff100 610px,#ff8c00 625px,#ff0000 634px,#6f0000 646px,#620000 657px,#cd0000 676px,#cd0000 696px)"></i>
<i style="left:62.4px;background:linear-gradient(#cd0000 -0px,#c20000 16px,#b30000 23px,#ff0b00 33px,#ffff00 47px,#ffffb0 53px,#ffffbd 57px,#ffff56 71px,#ffff78 81px,#ffffff 93px,#fffff3 277px,#ffffb8 294px,#fffc00 336px,#ffce00 367px,#ffff0f 409px,#ffff33 460px,#ffff41 492px,#ffff13 528px,#ffff19 535px,#ffff04 548px,#ffff4f 564px,#fff300 603px,#ff0200 618px,#a20000 625px,#910000 639px,#cd0000 659px,#cd0000 696px)"></i>
<i style="left:63.4px;background:linear-gradient(#cd0000 -0px,#ca0000 40px,#ff0d00 45px,#ffc100 55px,#ffdc00 61px,#ffac00 93px,#ffe400 99px,#ffff0a 101px,#ffffba 110px,#ffffff 116px,#fffff3 369px,#ffffa1 423px,#ffff4b 494px,#ffff87 532px,#ffff31 577px,#fff300 582px,#ff2800 598px,#f60000 601px,#c00000 613px,#c90000 633px,#cd0000 696px)"></i>
<i style="left:64.4px;background:linear-gradient(#ffc400 -0px,#f90000 11px,#c20000 14px,#b60000 31px,#cd0000 48px,#d30000 59px,#ff0d00 64px,#ff4a00 75px,#ff3100 85px,#fe0000 94px,#ff0300 98px,#ffe700 113px,#ffff00 115px,#ffffa7 125px,#fffff8 135px,#fffff3 372px,#ffff7b 466px,#ffff7b 540px,#ffff55 552px,#fff600 563px,#ff6100 580px,#f50000 600px,#cc0000 610px,#d80000 665px,#d50000 684px,#cd0000 696px)"></i>
<i style="left:65.4px;background:linear-gradient(#ffffce -0px,#fffc00 13px,#ff0b00 24px,#960000 32px,#8c0000 43px,#c00000 61px,#dd0000 83px,#d90000 95px,#d30000 98px,#ff0f00 103px,#ffff05 122px,#ffffdf 135px,#ffffff 139px,#fffff3 372px,#ffff87 456px,#ffff7e 535px,#fffb00 551px,#ff5300 580px,#f70000 591px,#cd0000 605px,#d90000 643px,#ff0800 659px,#cd0000 696px)"></i>
<i style="left:66.4px;background:linear-gradient(#ffffff -0px,#fffff3 14px,#ffff27 26px,#fff800 28px,#ff3900 37px,#ef0000 40px,#900000 44px,#620000 55px,#cf0000 98px,#ff0900 105px,#ffaa00 116px,#fffd00 123px,#ffffff 138px,#fffff3 372px,#ffff87 456px,#ffff7a 478px,#ffff3d 503px,#ffff57 521px,#ffff83 534px,#fffa00 550px,#ff2200 567px,#ed0000 573px,#cd0000 580px,#d40000 620px,#ff0e00 630px,#ff3300 642px,#ef0000 672px,#e70000 679px,#ff1200 682px,#fffa00 696px)"></i>
<i style="left:67.4px;background:linear-gradient(#ffffff -0px,#fffff4 27px,#ffffad 34px,#fff300 45px,#ff0300 56px,#670000 64px,#6c0000 100px,#9a0000 113px,#fc0000 120px,#ffb400 129px,#ffff05 132px,#ffffe6 137px,#fffffc 138px,#ffffe2 153px,#ffffff 169px,#fffff3 372px,#ffffaa 414px,#ffff2a 438px,#fff400 446px,#ffc700 476px,#ffff0b 501px,#ffff3c 517px,#fff600 523px,#ff6f00 536px,#fc0000 545px,#cd0000 550px,#d60000 597px,#ff1100 605px,#ff6300 620px,#ff0e00 660px,#ffff00 679px,#ffff00 696px)"></i>
<i style="left:68.4px;background:linear-gradient(#ffffff -0px,#fffffc 44px,#ffff60 57px,#ffff33 64px,#fff000 67px,#fe0000 79px,#640000 86px,#6d0000 138px,#ff0200 145px,#ffff01 160px,#ffff50 165px,#ffff82 180px,#fffff4 213px,#fffff5 271px,#ffffad 320px,#ffff74 367px,#fff400 398px,#ff8400 442px,#ff9700 457px,#ffbf00 476px,#ff1d00 504px,#ed0000 510px,#b80000 517px,#cd0000 557px,#dd0000 574px,#ff0f00 584px,#ff6b00 599px,#ff7700 611px,#ff4000 641px,#ffff00 661px,#ffff00 696px)"></i>
<i style="left:69.4px;background:linear-gradient(#ffffff -0px,#fffffb 64px,#ffffb5 76px,#ffffb4 86px,#ffff00 92px,#ff0600 104px,#aa0000 110px,#7f0000 121px,#620000 126px,#680000 163px,#cb0000 171px,#ff1100 176px,#ffad00 193px,#ffc100 202px,#ffba00 218px,#ffff0d 238px,#ffffc8 262px,#fffffb 268px,#ffff41 298px,#fff800 315px,#ff6500 368px,#ff3c00 419px,#f20000 447px,#860000 477px,#ec0000 557px,#ff1700 567px,#ff7a00 610px,#ff6d00 620px,#ffff00 642px,#ffff00 696px)"></i>
<i style="left:70.4px;background:linear-gradient(#ffffff -0px,#fffff4 105px,#ffffe2 109px,#ffff08 118px,#ff1400 139px,#de0000 142px,#620000 152px,#680000 197px,#f20000 217px,#ff2900 241px,#ef0000 259px,#d00000 268px,#ff0a00 278px,#ff4600 301px,#ff2b00 331px,#f00000 352px,#c80000 372px,#670000 452px,#e80000 545px,#ff0e00 578px,#ff6600 598px,#ffd000 611px,#ffff00 621px,#ffff00 696px)"></i>
<i style="left:71.4px;background:linear-gradient(#ffffff -0px,#fffff9 125px,#ffff85 137px,#ffff09 142px,#f60000 159px,#7e0000 171px,#620000 183px,#6f0000 243px,#9b0000 272px,#a40000 340px,#620000 447px,#b10000 521px,#990000 543px,#cb0000 561px,#ff0a00 574px,#ffdb00 601px,#ffff00 610px,#fff500 680px,#ff8100 696px)"></i>
<i style="left:72.4px;background:linear-gradient(#ffffff -0px,#fffff4 138px,#fff700 150px,#fb0000 166px,#620000 179px,#6d0000 457px,#820000 494px,#620000 529px,#880000 543px,#ff0900 565px,#ff7e00 581px,#ffed00 596px,#ffff00 617px,#fff400 662px,#ff8500 682px,#ff7f00 696px)"></i>
<i style="left:73.4px;background:linear-gradient(#ffff71 -0px,#ffffff 10px,#fffffb 138px,#ffff7e 147px,#fffc00 153px,#ff2200 165px,#e90000 169px,#620000 179px,#6a0000 535px,#c50000 550px,#ff1200 555px,#ffcd00 571px,#ffff05 579px,#ffff1a 598px,#ffff00 616px,#fff200 644px,#ff6f00 675px,#ff7f00 696px)"></i>
<i style="left:74.4px;background:linear-gradient(#ff5500 -0px,#ffff0a 10px,#ffffbe 21px,#ffffff 28px,#fffff3 143px,#ffff91 158px,#ffff44 164px,#ffff05 167px,#ff1200 181px,#d50000 186px,#620000 197px,#6a0000 499px,#ab0000 518px,#ff0b00 529px,#ff6500 537px,#ffff04 550px,#ffff5f 571px,#ffff58 582px,#ffff00 611px,#ffdd00 635px,#ffa800 644px,#ff4500 660px,#ff7f00 694px,#ff7f00 696px)"></i>
<i style="left:75.4px;background:linear-gradient(#cd0000 -0px,#da0000 10px,#ff0e00 12px,#ffff04 23px,#ffff71 28px,#ffffe6 40px,#ffffff 51px,#fffff6 164px,#fff500 197px,#f40000 222px,#630000 240px,#6d0000 270px,#cd0000 303px,#ff0f00 349px,#ff2b00 367px,#f00000 409px,#920000 438px,#660000 448px,#ff0200 468px,#ffd800 500px,#ffff0c 512px,#ffff3c 519px,#ffffc6 550px,#fffb00 611px,#ffdf00 620px,#ff2f00 637px,#ff1c00 643px,#ff6800 679px,#f80000 692px,#d00000 696px)"></i>
<i style="left:76.4px;background:linear-gradient(#c20000 -0px,#df0000 15px,#ff1200 20px,#ff7300 28px,#ffff05 35px,#ffff85 40px,#ffffe2 48px,#fffff6 54px,#ffffb7 60px,#ffffc9 66px,#ffffff 71px,#fffff9 197px,#fffb00 239px,#ff2e00 269px,#ff3300 297px,#ff8900 323px,#ffff06 348px,#ffff7d 364px,#ffff07 392px,#ffff0b 416px,#ffff6e 434px,#fffffc 448px,#ffffb1 467px,#ffffb7 497px,#ffffff 520px,#ffffef 538px,#ffff20 596px,#ffec00 599px,#ff2500 613px,#ef0000 618px,#ff1600 640px,#ff3c00 661px,#f20000 672px,#be0000 680px,#cd0000 696px)"></i>
<i style="left:77.4px;background:linear-gradient(#0b0000 -0px,#9b0000 16px,#b30000 25px,#ff0a00 32px,#ffb500 41px,#ffff00 46px,#ffffb3 53px,#ffffa8 56px,#ffff6b 60px,#fffa00 65px,#ffac00 71px,#ffca00 79px,#ffff0e 84px,#ffffff 92px,#fffff4 241px,#ffff74 273px,#ffff6f 305px,#ffffbd 344px,#ffffff 367px,#fffff3 537px,#ffff72 571px,#ffff00 579px,#ff0600 598px,#ce0000 608px,#ff0f00 637px,#f60000 648px,#9a0000 662px,#cd0000 695px,#cd0000 696px)"></i>
<i style="left:78.4px;background:linear-gradient(#0b0000 -0px,#110000 19px,#530000 32px,#4b0000 39px,#ff0900 49px,#ff9a00 55px,#ffc400 59px,#ff5a00 74px,#f60000 82px,#650000 92px,#c40000 98px,#ff0c00 100px,#fff700 107px,#fffff2 115px,#ffffff 136px,#fffff3 537px,#ffff9c 551px,#fff400 565px,#ff9300 573px,#fb0000 584px,#b40000 595px,#e40000 625px,#6f0000 643px,#990000 666px,#d60000 683px,#c10000 693px,#9f0000 696px)"></i>
<i style="left:79.4px;background:linear-gradient(#0b0000 -0px,#120000 10px,#7f0000 18px,#820000 25px,#350000 32px,#0b0000 35px,#130000 51px,#120000 54px,#570000 59px,#d60000 65px,#f70000 71px,#da0000 77px,#af0000 84px,#0b0000 98px,#150000 107px,#7d0000 115px,#fb0000 119px,#ffff05 127px,#ffffbd 131px,#fffffd 137px,#ffffc2 145px,#ffffdf 152px,#ffffff 156px,#fffffa 179px,#ffff92 192px,#ffff83 206px,#ffffd3 221px,#ffffff 227px,#fffffc 487px,#ffff8b 502px,#ffff7e 516px,#ffffc7 528px,#fffffb 534px,#ffffa1 542px,#ffff10 546px,#ffc700 549px,#ff0800 559px,#6d0000 571px,#b60000 594px,#cd0000 602px,#360000 624px,#780000 651px,#f20000 663px,#ff0900 672px,#f20000 675px,#0b0000 692px,#0b0000 696px)"></i>
<i style="left:80.4px;background:linear-gradient(#250000 -0px,#0b0000 9px,#c50000 34px,#660000 40px,#0b0000 44px,#160000 55px,#aa0000 76px,#480000 85px,#340000 87px,#0f0000 98px,#2b0000 106px,#0b0000 115px,#100000 131px,#fe0000 141px,#ff2700 145px,#f30000 150px,#d00000 156px,#ff0600 164px,#ff5a00 171px,#ff4200 186px,#f20000 210px,#c30000 227px,#ff0c00 241px,#ff5a00 253px,#ff5200 293px,#ff5000 413px,#ff3f00 437px,#ff5a00 456px,#ff4a00 464px,#f70000 475px,#bf0000 488px,#ff0e00 511px,#ff3e00 525px,#f00000 530px,#160000 542px,#500000 579px,#890000 590px,#160000 604px,#190000 619px,#3b0000 641px,#b10000 651px,#890000 666px,#2f0000 676px,#0b0000 693px,#0b0000 696px)"></i>
<i style="left:81.4px;background:linear-gradient(#8d0000 -0px,#0e0000 4px,#180000 10px,#8d0000 15px,#b20000 23px,#b20000 41px,#200000 48px,#0d0000 53px,#b20000 60px,#a70000 84px,#230000 91px,#0d0000 97px,#b20000 105px,#b00000 121px,#2a0000 130px,#150000 138px,#870000 145px,#830000 149px,#130000 179px,#b20000 190px,#a90000 233px,#2c0000 250px,#0f0000 268px,#720000 285px,#7f0000 297px,#100000 367px,#690000 428px,#150000 446px,#210000 468px,#550000 484px,#7e0000 508px,#740000 524px,#0c0000 534px,#2d0000 545px,#770000 554px,#7e0000 579px,#550000 588px,#570000 601px,#0c0000 608px,#420000 631px,#640000 641px,#780000 666px,#5f0000 673px,#620000 682px,#0b0000 688px,#0b0000 696px)"></i>
<i style="left:82.4px;background:linear-gradient(#ffffff -0px,#ffffff 4px,#ffff1b 9px,#fff200 10px,#ff7500 15px,#ff9400 22px,#ffd500 27px,#ffff09 29px,#ffffb3 35px,#ffffee 39px,#ffffff 47px,#ffff72 51px,#fff600 54px,#ff8c00 60px,#ffff0c 74px,#ffffb6 81px,#ffffff 87px,#ffffff 90px,#ffff64 95px,#fff800 98px,#ff9900 105px,#ffff0a 118px,#ffff67 123px,#ffffcd 129px,#ffff70 134px,#fff700 138px,#ff6700 146px,#ff3a00 159px,#f80000 168px,#960000 176px,#610000 180px,#580000 189px,#fc0000 198px,#ffea00 215px,#ffff10 218px,#ffffb4 232px,#ffffff 245px,#fffff4 249px,#fffd00 268px,#ff8300 285px,#ff5f00 299px,#ff2200 371px,#ff1100 416px,#f30000 433px,#ff1b00 446px,#ff8100 467px,#ff1b00 491px,#ef0000 497px,#ae0000 520px,#c30000 525px,#ff1000 532px,#ff9800 544px,#ff1f00 570px,#f50000 574px,#370000 597px,#180000 601px,#4f0000 609px,#ff0500 624px,#ff4c00 633px,#ff7100 645px,#ff5800 659px,#f80000 666px,#380000 680px,#160000 683px,#0b0000 693px,#5a0000 696px)"></i>
<i style="left:83.4px;background:linear-gradient(#ffffff -0px,#fffff3 12px,#ffff8b 22px,#ffff69 25px,#ffff50 27px,#fffd00 31px,#ffe300 37px,#fffe00 40px,#ffffb8 48px,#fffffa 53px,#ffffb0 63px,#ffffc4 71px,#ffffc7 74px,#ffff7f 84px,#ffff93 88px,#fffffb 98px,#ffffde 107px,#ffffff 116px,#fffff7 121px,#ffffc7 128px,#ffffe3 135px,#fffff5 138px,#ffff39 150px,#fffb00 156px,#ffa400 171px,#ff4100 191px,#fc0000 201px,#f30000 215px,#ff1b00 224px,#ffab00 240px,#fffd00 246px,#ffff4a 250px,#fffffb 267px,#ffff21 289px,#fff800 293px,#f30000 340px,#6b0000 365px,#930000 408px,#8e0000 437px,#380000 468px,#9c0000 489px,#f40000 501px,#eb0000 520px,#780000 546px,#4e0000 564px,#3f0000 571px,#9a0000 594px,#c60000 603px,#ff0a00 623px,#ff0c00 635px,#a80000 650px,#4d0000 660px,#410000 670px,#fa0000 679px,#ffff0d 690px,#ffff85 693px,#ffff87 696px)"></i>
<i style="left:84.4px;background:linear-gradient(#ffffff -0px,#fffff7 25px,#ffff82 35px,#fffe00 42px,#ffab00 48px,#ffe000 55px,#ffff12 59px,#ffff34 65px,#fff200 73px,#ffb000 77px,#ffd000 88px,#ffff0c 94px,#ffff64 100px,#ffff79 105px,#fffd00 112px,#ffd900 122px,#ffff0e 133px,#ffff51 139px,#ffff45 146px,#fff700 150px,#f70000 168px,#ac0000 179px,#ff0400 195px,#ff1600 214px,#e60000 224px,#5a0000 249px,#b70000 268px,#ff0b00 278px,#ff6f00 297px,#ff7c00 321px,#f20000 382px,#7d0000 421px,#3c0000 446px,#a50000 476px,#9a0000 496px,#600000 545px,#d10000 610px,#b10000 627px,#7b0000 641px,#a20000 647px,#ff0900 653px,#ffff0d 666px,#ffff7d 670px,#ffff87 696px)"></i>
<i style="left:85.4px;background:linear-gradient(#ffffff -0px,#fffff5 48px,#ffff53 58px,#ffff0a 68px,#ffff08 73px,#ffff49 77px,#ffff27 84px,#fff100 88px,#ff3a00 99px,#ff1300 105px,#ff7000 112px,#ff8100 119px,#ff3b00 127px,#ff0600 132px,#cf0000 139px,#c80000 149px,#df0000 161px,#9c0000 173px,#640000 179px,#960000 204px,#a40000 220px,#d80000 248px,#8e0000 278px,#970000 312px,#f40000 367px,#c30000 416px,#c10000 457px,#680000 538px,#b00000 581px,#eb0000 595px,#be0000 615px,#ff0900 622px,#ffff03 639px,#ffff5b 643px,#ffff87 647px,#ffff87 696px)"></i>
<i style="left:86.4px;background:linear-gradient(#ffffff -0px,#fffff4 74px,#ffffc6 85px,#fffff2 96px,#fffffd 105px,#ffff8b 113px,#ffff67 122px,#ffff84 130px,#ffff36 139px,#fffb00 144px,#ff7900 163px,#fa0000 178px,#970000 190px,#ff0c00 215px,#ff2f00 243px,#ff0c00 271px,#cd0000 299px,#c10000 457px,#680000 538px,#760000 544px,#ff0800 556px,#ff7000 571px,#ff7800 581px,#ff6800 587px,#ffc000 602px,#ffff0d 609px,#ffff7b 615px,#ffff87 696px)"></i>
<i style="left:87.4px;background:linear-gradient(#ffffff -0px,#fffff6 167px,#fffff7 177px,#ffffd6 190px,#ffff05 203px,#ff9600 222px,#ff8c00 241px,#fffc00 269px,#ffa300 301px,#ff1500 349px,#f70000 374px,#d60000 442px,#bb0000 473px,#c10000 501px,#ff0c00 511px,#ffd400 529px,#ffff02 532px,#ffff6d 539px,#ffff9a 544px,#ffff4d 554px,#ffff3f 568px,#ffff8a 581px,#ffffaa 586px,#ffff87 619px,#ffff83 682px,#ffff01 687px,#ff5e00 696px)"></i>
<i style="left:88.4px;background:linear-gradient(#ffffff -0px,#fffff4 181px,#ffff95 214px,#ffff28 249px,#fffe00 268px,#ff3f00 416px,#ff6400 459px,#ffb800 484px,#ffff03 494px,#ffff56 501px,#fffffd 534px,#ffffe4 549px,#ffff87 616px,#ffff7c 659px,#fffd00 666px,#fb0000 681px,#cf0000 687px,#cd0000 696px)"></i>
<i style="left:89.4px;background:linear-gradient(#ffff39 -0px,#ffffff 10px,#fffff4 185px,#ffff92 206px,#ffff30 221px,#fff700 244px,#ffc100 314px,#ff7f00 374px,#ff8b00 451px,#ffdc00 470px,#ffff0e 477px,#ffffbe 501px,#ffffff 521px,#ffffe1 552px,#ffff87 616px,#ffff7d 634px,#fff800 646px,#ff5600 660px,#f20000 680px,#cd0000 691px,#cd0000 696px)"></i>
<i style="left:90.4px;background:linear-gradient(#ff3000 -0px,#ff8900 10px,#ffff0b 17px,#ffffc6 27px,#ffffff 33px,#fffff4 220px,#ffff58 247px,#fff500 260px,#ff6800 289px,#ff2e00 369px,#ff8800 411px,#ffff0a 436px,#ffffa7 451px,#ffffff 467px,#fffff3 541px,#ffff6e 616px,#fff500 630px,#f60000 675px,#cd0000 692px,#cd0000 696px)"></i>
<i style="left:91.4px;background:linear-gradient(#cd0000 -0px,#d40000 10px,#ff1600 14px,#ffc500 25px,#ffff05 30px,#ffffb1 41px,#fffffa 51px,#fffff5 272px,#ffff8e 295px,#fff800 315px,#ff5000 359px,#ff5100 366px,#ffff08 400px,#ffffc9 430px,#ffffff 450px,#fffff3 541px,#ffff7b 609px,#fff800 627px,#ffb500 638px,#ff1200 659px,#e60000 676px,#cd0000 696px)"></i>
<i style="left:92.4px;background:linear-gradient(#cd0000 -0px,#d60000 20px,#ff0b00 26px,#ff8b00 34px,#ffff00 39px,#ffff62 42px,#fffffa 53px,#ffffd6 63px,#ffffff 72px,#fffff4 540px,#ffff7d 608px,#ffff02 615px,#ff4000 636px,#f10000 671px,#d10000 688px,#ff1200 696px)"></i>
<i style="left:93.4px;background:linear-gradient(#cd0000 -0px,#d70000 42px,#ff0900 45px,#ffcf00 55px,#ffff0e 61px,#ffff31 66px,#fff800 70px,#fffb00 81px,#ffff54 89px,#ffffff 98px,#fffff3 541px,#ffffac 578px,#fff400 596px,#ff7c00 609px,#ff0000 668px,#ff5400 683px,#ff7f00 689px,#ff7f00 696px)"></i>
<i style="left:94.4px;background:linear-gradient(#cd0000 -0px,#d70000 67px,#ff0b00 72px,#ff3100 82px,#f30000 94px,#d50000 98px,#ff0a00 101px,#fff700 114px,#ffffbb 121px,#ffffff 129px,#fffff4 540px,#ffff9d 559px,#ffff22 572px,#ffee00 575px,#ff8900 589px,#ff7700 604px,#ff6600 619px,#ff2a00 639px,#ff1f00 655px,#ff6300 675px,#ff7f00 696px)"></i>
<i style="left:95.4px;background:linear-gradient(#ffffd7 -0px,#ffff0e 6px,#ff8800 12px,#f40000 20px,#cd0000 34px,#db0000 58px,#be0000 103px,#980000 122px,#fe0000 130px,#fffa00 145px,#ffffe7 156px,#ffffff 161px,#fffff4 534px,#fffb00 546px,#ff5600 563px,#ff2a00 572px,#ff7b00 608px,#ff1500 625px,#ff0900 637px,#ff8e00 689px,#ffd300 696px)"></i>
<i style="left:96.4px;background:linear-gradient(#ffffff -0px,#ffffec 17px,#ffffca 21px,#fffd00 29px,#ff2b00 44px,#f50000 50px,#ce0000 54px,#ff0f00 65px,#ff4400 72px,#ff2900 86px,#f70000 93px,#c30000 101px,#620000 142px,#6e0000 157px,#ff0b00 169px,#fff500 189px,#ffff47 195px,#ffff99 202px,#ffffbd 220px,#ffffff 234px,#fffff9 482px,#ffff9f 491px,#fff700 504px,#f30000 530px,#d00000 535px,#ff1000 561px,#ff3000 580px,#f50000 600px,#d00000 609px,#ff0f00 637px,#ff5a00 666px,#fffe00 680px,#ffff87 688px,#ffff87 696px)"></i>
<i style="left:97.4px;background:linear-gradient(#ffffff -0px,#fffff7 31px,#ffff83 44px,#ffff05 53px,#ff2600 68px,#ff0500 75px,#ff2700 82px,#ffe500 96px,#fff500 98px,#ff1900 111px,#f20000 114px,#810000 127px,#620000 144px,#730000 196px,#8d0000 203px,#fe0000 219px,#ff4f00 239px,#ffc800 272px,#ffff05 307px,#ffeb00 344px,#ffc100 366px,#fff400 405px,#ffc500 444px,#ff2000 472px,#ec0000 479px,#cd0000 490px,#d80000 538px,#e70000 564px,#cd0000 587px,#dd0000 615px,#ff1100 638px,#ff5a00 649px,#ffff09 661px,#ffff5a 666px,#ffff87 675px,#ffff87 696px)"></i>
<i style="left:98.4px;background:linear-gradient(#ffffff -0px,#fffffa 54px,#ffff80 64px,#fffc00 71px,#ff1300 85px,#dd0000 93px,#d80000 99px,#ff0400 110px,#ea0000 122px,#960000 132px,#620000 139px,#6f0000 219px,#ca0000 273px,#c10000 457px,#ad0000 508px,#cd0000 549px,#d90000 613px,#fd0000 622px,#ffff03 639px,#ffff83 648px,#ffff87 696px)"></i>
<i style="left:99.4px;background:linear-gradient(#ffffff -0px,#fffff4 83px,#fffc00 94px,#ff0600 110px,#8b0000 122px,#620000 144px,#6f0000 281px,#670000 355px,#6f0000 435px,#6d0000 457px,#cd0000 544px,#d30000 593px,#ff0d00 598px,#ffff05 615px,#ffff87 622px,#ffff87 696px)"></i>
<i style="left:100.4px;background:linear-gradient(#ffffff -0px,#fffff8 113px,#ffff99 122px,#ffff06 129px,#ff0200 146px,#6b0000 157px,#6d0000 457px,#cd0000 544px,#da0000 562px,#ff0c00 570px,#ffae00 586px,#ffff05 592px,#ffff84 607px,#ffff7a 657px,#ffff51 678px,#ffff87 690px,#ffff87 696px)"></i>
<i style="left:101.4px;background:linear-gradient(#ffffff -0px,#fffff4 11px,#fffff5 17px,#fffff9 156px,#ffff92 162px,#ffff03 169px,#ff4600 185px,#f30000 194px,#b50000 203px,#880000 224px,#620000 235px,#6d0000 457px,#9b0000 484px,#eb0000 508px,#dc0000 529px,#d80000 538px,#ff0b00 549px,#ffa000 568px,#ffff0c 581px,#ffff45 589px,#ffff75 605px,#ffff87 614px,#ffff7b 630px,#fff900 650px,#ffd200 659px,#ffef00 673px,#ffff1a 677px,#ffff87 688px,#ffff87 696px)"></i>
<i style="left:102.4px;background:linear-gradient(#ffffcd -0px,#ffffff 5px,#ffffea 13px,#ffff21 29px,#ffff42 33px,#ffffd9 40px,#ffffff 42px,#fffffb 54px,#ffff45 70px,#ffff83 77px,#ffffff 84px,#fffff9 98px,#ffff95 107px,#ffffa5 114px,#ffffff 122px,#fffff8 138px,#ffffba 146px,#ffffd1 154px,#ffffff 160px,#fffff7 180px,#ffff71 202px,#ffff1c 209px,#fffb00 218px,#ffff16 227px,#ffff37 232px,#fff800 240px,#ff5200 276px,#f70000 296px,#b60000 329px,#c10000 385px,#ec0000 424px,#ff1800 440px,#ff8300 477px,#ff7800 483px,#fb0000 501px,#d30000 516px,#db0000 525px,#ff0e00 532px,#ffde00 553px,#ffbf00 567px,#ffba00 574px,#ffff0d 591px,#ffff5d 601px,#fffa00 614px,#ffc000 623px,#ff6700 631px,#ff3800 648px,#fffe00 670px,#ffff5c 682px,#ffff1f 689px,#fff600 692px,#ffce00 696px)"></i>
<i style="left:103.4px;background:linear-gradient(#260000 -0px,#c20000 6px,#ff0100 8px,#ff3d00 11px,#ff5a00 17px,#ff5500 30px,#ff0000 35px,#700000 41px,#9e0000 45px,#ff0300 50px,#ff5a00 54px,#ff4f00 71px,#f90000 77px,#7e0000 83px,#b90000 89px,#fc0000 93px,#ff5a00 98px,#ff4b00 108px,#fd0000 115px,#960000 121px,#ee0000 131px,#ff2d00 135px,#ff5700 138px,#f30000 150px,#b00000 159px,#ed0000 170px,#ff1b00 174px,#ff5a00 179px,#ff4e00 207px,#f30000 221px,#930000 232px,#ff0800 256px,#ff5900 268px,#ff1e00 301px,#ff0100 367px,#d70000 425px,#f80000 449px,#430000 477px,#3a0000 483px,#a10000 506px,#ff0000 526px,#f30000 535px,#5a0000 553px,#fb0000 571px,#ff0700 587px,#ba0000 602px,#bf0000 608px,#400000 622px,#870000 638px,#d70000 651px,#fe0000 672px,#bf0000 683px,#bc0000 688px,#350000 696px)"></i>
<i style="left:104.4px;background:linear-gradient(#0b0000 -0px,#0b0000 696px)"></i>
<i style="left:105.4px;background:linear-gradient(#0b0000 -0px,#0b0000 696px)"></i>
<i style="left:106.4px;background:linear-gradient(#ff2b00 -0px,#f60000 3px,#7c0000 11px,#600000 17px,#ec0000 30px,#f90000 41px,#a90000 51px,#760000 57px,#760000 63px,#cc0000 72px,#e60000 87px,#9c0000 96px,#6e0000 103px,#700000 110px,#900000 125px,#650000 138px,#3b0000 151px,#420000 175px,#2e0000 194px,#9b0000 211px,#bc0000 231px,#820000 254px,#3c0000 270px,#4f0000 315px,#660000 399px,#440000 430px,#480000 450px,#9d0000 476px,#900000 499px,#380000 517px,#340000 529px,#5b0000 538px,#cc0000 556px,#d70000 572px,#610000 591px,#260000 598px,#650000 616px,#a40000 638px,#5a0000 666px,#210000 681px,#720000 696px)"></i>
<i style="left:107.4px;background:linear-gradient(#ffff00 -0px,#ffff00 17px,#ff9700 28px,#ff8b00 39px,#ffd700 50px,#ffff00 55px,#fff500 63px,#ffa300 75px,#ffae00 87px,#fffd00 98px,#ffcf00 109px,#ff7300 121px,#ff7000 134px,#ff7400 140px,#ff2d00 153px,#f50000 161px,#cc0000 177px,#c30000 199px,#a40000 234px,#fc0000 293px,#ff7900 366px,#f60000 428px,#a50000 478px,#c10000 514px,#c30000 540px,#920000 562px,#b00000 589px,#cd0000 603px,#8b0000 638px,#700000 651px,#b40000 675px,#cd0000 684px,#cd0000 696px)"></i>
<i style="left:108.4px;background:linear-gradient(#ff4f00 -0px,#ffeb00 17px,#ffff00 47px,#fff400 101px,#ff4000 152px,#f20000 170px,#d20000 181px,#ff0800 212px,#ff0c00 299px,#ff7a00 366px,#f20000 430px,#cd0000 456px,#c00000 613px,#bb0000 639px,#cd0000 665px,#cd0000 696px)"></i>
<i style="left:109.4px;background:linear-gradient(#cd0000 -0px,#d50000 18px,#ff0a00 27px,#ffea00 60px,#ffff00 74px,#fff200 101px,#ff7e00 142px,#ff3e00 166px,#f70000 180px,#f60000 199px,#ff7f00 274px,#ff7400 369px,#f20000 430px,#cd0000 456px,#cd0000 696px)"></i>
<i style="left:110.4px;background:linear-gradient(#cd0000 -0px,#d70000 56px,#ff0f00 65px,#ffb000 86px,#ffd900 99px,#ff5e00 129px,#ff5e00 140px,#ff7f00 155px,#ff7200 200px,#ff5c00 239px,#ff7f00 283px,#ff7400 369px,#ff0000 431px,#ff0600 504px,#cd0000 543px,#c10000 643px,#bd0000 676px,#9e0000 693px,#940000 696px)"></i>
<i style="left:111.4px;background:linear-gradient(#8f0000 -0px,#cd0000 21px,#d70000 56px,#ff1000 70px,#ff7800 99px,#f50000 131px,#d30000 139px,#ff0b00 151px,#ff7500 174px,#ff7400 453px,#f30000 515px,#cd0000 542px,#c10000 602px,#890000 637px,#8d0000 660px,#620000 687px,#620000 696px)"></i>
<i style="left:112.4px;background:linear-gradient(#620000 -0px,#790000 18px,#c70000 42px,#df0000 58px,#ff1000 70px,#ff7800 99px,#f20000 129px,#cd0000 141px,#ff0a00 165px,#ff5800 182px,#ff5400 200px,#ff4100 245px,#ff6200 319px,#ff5c00 401px,#ff7600 452px,#f30000 515px,#cd0000 542px,#a70000 579px,#620000 608px,#670000 643px,#620000 696px)"></i>
<i style="left:113.4px;background:linear-gradient(#620000 -0px,#7c0000 23px,#f80000 66px,#ff7800 99px,#f20000 129px,#cd0000 141px,#da0000 200px,#ef0000 239px,#cd0000 283px,#d80000 369px,#ff1000 395px,#ff7a00 450px,#f30000 515px,#620000 606px,#620000 696px)"></i>
<i style="left:114.4px;background:linear-gradient(#9f0000 -0px,#620000 21px,#7e0000 41px,#b70000 59px,#af0000 75px,#ff0800 92px,#ff4200 101px,#ff4000 111px,#f20000 129px,#cd0000 141px,#d80000 369px,#ff1000 395px,#ff7a00 450px,#f30000 515px,#740000 559px,#620000 595px,#700000 683px,#9b0000 696px)"></i>
<i style="left:115.4px;background:linear-gradient(#cd0000 -0px,#b50000 18px,#670000 42px,#6f0000 69px,#670000 95px,#6d0000 110px,#9b0000 132px,#b40000 147px,#cd0000 176px,#d80000 369px,#ff1000 395px,#ff7a00 450px,#f50000 494px,#6f0000 525px,#620000 595px,#700000 634px,#cd0000 686px,#cd0000 696px)"></i>
<i style="left:116.4px;background:linear-gradient(#cd0000 -0px,#b30000 26px,#620000 56px,#6d0000 142px,#ca0000 181px,#940000 240px,#9a0000 358px,#f70000 425px,#e50000 450px,#620000 491px,#6e0000 593px,#bf0000 633px,#cd0000 696px)"></i>
<i style="left:117.4px;background:linear-gradient(#cd0000 -0px,#c10000 42px,#620000 73px,#6d0000 142px,#ca0000 181px,#620000 278px,#6e0000 557px,#cd0000 610px,#c10000 676px,#790000 696px)"></i>
<i style="left:118.4px;background:linear-gradient(#cd0000 -0px,#c20000 58px,#620000 97px,#6d0000 142px,#ca0000 181px,#620000 278px,#6e0000 542px,#cd0000 617px,#bc0000 649px,#690000 682px,#620000 696px)"></i>
<i style="left:119.4px;background:linear-gradient(#cd0000 -0px,#c10000 59px,#620000 103px,#6d0000 142px,#c90000 182px,#620000 278px,#6e0000 542px,#cb0000 612px,#620000 696px)"></i>
<i style="left:120.4px;background:linear-gradient(#cd0000 -0px,#d70000 56px,#f10000 71px,#af0000 88px,#650000 98px,#9f0000 114px,#830000 131px,#6a0000 139px,#c30000 163px,#e80000 211px,#9c0000 250px,#630000 271px,#6e0000 462px,#720000 519px,#6d0000 537px,#ca0000 580px,#bd0000 619px,#620000 696px)"></i>
<i style="left:121.4px;background:linear-gradient(#cd0000 -0px,#d70000 56px,#ff1000 70px,#ff7c00 98px,#ff3c00 114px,#ff5600 130px,#ff7c00 138px,#ff4500 155px,#ff6500 173px,#ff7800 181px,#ff4400 217px,#ff6e00 259px,#ff7500 270px,#ff0600 310px,#bd0000 401px,#c10000 457px,#ad0000 507px,#cd0000 550px,#bf0000 618px,#620000 696px)"></i>
<i style="left:122.4px;background:linear-gradient(#cd0000 -0px,#d70000 56px,#ff1000 70px,#ff7f00 100px,#ff7300 274px,#f30000 343px,#cd0000 373px,#c10000 616px,#620000 696px)"></i>
<i style="left:123.4px;background:linear-gradient(#cd0000 -0px,#d80000 56px,#ff1000 70px,#ff7f00 100px,#ff7300 274px,#f30000 343px,#cd0000 373px,#c90000 610px,#620000 696px)"></i>
<i style="left:124.4px;background:linear-gradient(#cd0000 -0px,#dc0000 12px,#ff1000 19px,#ff3400 32px,#f80000 48px,#d00000 54px,#ff0e00 63px,#ff7100 88px,#ff9a00 121px,#ff8700 141px,#ff9000 169px,#ff8800 185px,#ff9900 236px,#ff4f00 301px,#f30000 343px,#d00000 371px,#da0000 437px,#d90000 452px,#ff0c00 476px,#ff0f00 509px,#e70000 526px,#d40000 536px,#ff0800 561px,#f20000 592px,#a80000 637px,#aa0000 665px,#620000 689px,#620000 696px)"></i>
<i style="left:125.4px;background:linear-gradient(#be0000 -0px,#cb0000 10px,#b90000 21px,#ff0d00 33px,#ffb000 44px,#fffc00 53px,#ff6b00 64px,#ff4900 73px,#ff7800 82px,#ffd200 91px,#fff900 98px,#ffad00 109px,#ffba00 120px,#ffeb00 129px,#fff600 141px,#ffeb00 168px,#fff500 181px,#ffd900 201px,#ffe900 252px,#fff800 275px,#fff700 350px,#ffef00 374px,#ffd200 420px,#fff600 450px,#ff8100 492px,#ff6700 525px,#ff7700 537px,#ff1000 575px,#db0000 587px,#d10000 600px,#ff0500 612px,#ff1a00 636px,#e90000 641px,#6b0000 660px,#550000 673px,#620000 696px)"></i>
<i style="left:126.4px;background:linear-gradient(#0b0000 -0px,#410000 10px,#840000 19px,#720000 28px,#370000 46px,#e70000 62px,#e60000 75px,#bb0000 82px,#780000 89px,#8d0000 98px,#c80000 109px,#b20000 121px,#8e0000 129px,#920000 139px,#ff0900 157px,#ffa300 187px,#ffa700 195px,#ff6000 210px,#ff4a00 238px,#ffb700 303px,#ff8900 371px,#ffa500 424px,#ff7100 451px,#ff0f00 483px,#ff1300 508px,#ff4300 521px,#ff0f00 536px,#c10000 548px,#910000 565px,#a70000 574px,#ff0b00 587px,#ff5900 598px,#fa0000 611px,#410000 632px,#2e0000 637px,#760000 663px,#5f0000 683px,#330000 696px)"></i>
<i style="left:127.4px;background:linear-gradient(#0b0000 -0px,#0b0000 696px)"></i>
<i style="left:128.4px;background:linear-gradient(#0b0000 -0px,#160000 11px,#550000 22px,#3f0000 34px,#0b0000 43px,#160000 55px,#450000 67px,#1e0000 80px,#0b0000 87px,#180000 100px,#270000 113px,#0b0000 126px,#190000 153px,#0b0000 178px,#830000 197px,#9a0000 216px,#0b0000 272px,#160000 486px,#380000 513px,#110000 538px,#3d0000 582px,#1c0000 604px,#100000 613px,#140000 652px,#350000 672px,#0b0000 693px,#0b0000 696px)"></i>
<i style="left:129.4px;background:linear-gradient(#ffffdb -0px,#fffc00 10px,#ffb100 21px,#ffb900 32px,#fffa00 43px,#fff500 55px,#ffbf00 67px,#ffde00 79px,#fffa00 86px,#fff200 100px,#ffdd00 113px,#fffb00 127px,#fff200 141px,#ffef00 155px,#fff400 181px,#ffb300 203px,#ffcd00 227px,#ffff02 268px,#ffd000 316px,#fff800 369px,#ffde00 416px,#fff900 452px,#ff9500 483px,#f80000 503px,#b50000 514px,#b50000 534px,#ff0400 550px,#ff0b00 568px,#c90000 585px,#8e0000 596px,#910000 609px,#f10000 631px,#f50000 650px,#580000 677px,#980000 689px,#e40000 696px)"></i>
<i style="left:130.4px;background:linear-gradient(#ffffff -0px,#fffff6 449px,#ffff9d 472px,#ffffa3 492px,#ffffff 513px,#fffff9 534px,#ffff50 553px,#ffff0a 571px,#ffff24 588px,#ffff2b 594px,#fff600 609px,#ff8300 630px,#ff7500 649px,#ffc300 668px,#ffff00 678px,#ffff00 696px)"></i>
<i style="left:131.4px;background:linear-gradient(#ffff89 -0px,#ffffff 22px,#fffff3 516px,#ffff9d 540px,#ffff1a 574px,#ffff00 602px,#fff200 655px,#ffd900 679px,#ff7a00 696px)"></i>
<i style="left:132.4px;background:linear-gradient(#ffff76 -0px,#ffff3d 13px,#ffff4c 22px,#ffffd5 41px,#ffffff 58px,#fffff3 455px,#ffff7f 497px,#ffff01 533px,#fff200 595px,#ff8600 621px,#ff0100 664px,#cd0000 679px,#cd0000 696px)"></i>
<i style="left:133.4px;background:linear-gradient(#ffffff -0px,#fffff1 25px,#ffffe5 44px,#ffffff 62px,#fffff5 451px,#fffb00 537px,#ffab00 566px,#f70000 596px,#d00000 611px,#cd0000 696px)"></i>
<i style="left:134.4px;background:linear-gradient(#ffffff -0px,#fffff0 12px,#ffffe5 23px,#ffffff 34px,#fffff3 56px,#fffff6 67px,#fffff5 451px,#ffff2d 514px,#fff600 522px,#ff1300 563px,#e70000 576px,#cd0000 601px,#cd0000 696px)"></i>
<i style="left:135.4px;background:linear-gradient(#ff8a00 -0px,#ffcb00 12px,#ffa000 36px,#ffb900 61px,#ff7b00 91px,#ff8d00 98px,#ffff06 106px,#ffffaa 117px,#fffffa 128px,#fffffd 157px,#fffffa 448px,#fff900 472px,#fb0000 511px,#cd0000 536px,#cd0000 696px)"></i>
<i style="left:136.4px;background:linear-gradient(#6c0000 -0px,#df0000 22px,#f40000 43px,#8c0000 83px,#620000 104px,#a20000 118px,#ff0500 128px,#ff8f00 139px,#ffd400 159px,#ffd700 189px,#ffff0b 213px,#fffffb 269px,#ffff2d 367px,#fff700 377px,#ff2800 420px,#f40000 428px,#640000 449px,#cd0000 544px,#d80000 639px,#ff0800 657px,#f00000 679px,#cd0000 692px,#cd0000 696px)"></i>
<i style="left:137.4px;background:linear-gradient(#ba0000 -0px,#630000 10px,#6e0000 47px,#850000 76px,#620000 109px,#6e0000 163px,#bd0000 189px,#c10000 225px,#670000 269px,#c20000 313px,#c60000 365px,#630000 438px,#cd0000 545px,#d50000 575px,#ff1100 585px,#ffaa00 614px,#ffc700 637px,#ff4600 665px,#ff8500 685px,#ffdc00 696px)"></i>
<i style="left:138.4px;background:linear-gradient(#ffff36 -0px,#fff300 12px,#ff7c00 36px,#f80000 53px,#950000 68px,#670000 82px,#6d0000 457px,#a70000 491px,#ff0600 510px,#ffd100 538px,#ffff0b 549px,#ffffbb 575px,#ffff7b 609px,#ffff21 628px,#ffff26 646px,#ffff87 666px,#ffff87 696px)"></i>
<i style="left:139.4px;background:linear-gradient(#ffffff -0px,#fffff2 12px,#ffffc3 31px,#fffff2 51px,#fffffc 67px,#ffffb0 78px,#ffff96 85px,#fffe00 103px,#ff8300 141px,#ff7900 183px,#ff6300 231px,#ff8300 269px,#ff5b00 319px,#ff7e00 369px,#ff6800 419px,#ff9400 450px,#ffff0b 470px,#ffffae 490px,#ffffff 511px,#ffffee 544px,#ffff86 604px,#ffff87 696px)"></i>
<i style="left:140.4px;background:linear-gradient(#ffffff -0px,#fffff4 235px,#fffff0 260px,#ffffff 298px,#fffff2 494px,#ffff8f 530px,#ffff4a 562px,#ffff5c 584px,#ffff87 616px,#ffff87 696px)"></i>
<i style="left:141.4px;background:linear-gradient(#ffffff -0px,#fffff4 140px,#ffffba 164px,#ffffc2 210px,#ffffbd 264px,#ffffa0 337px,#ffff87 369px,#fffff9 449px,#ffff38 501px,#ffff03 535px,#ffff87 614px,#ffff87 696px)"></i>
<i style="left:142.4px;background:linear-gradient(#ffffff -0px,#fffff4 143px,#ffff88 168px,#ffff3e 181px,#ffff3f 206px,#ffff65 237px,#ffff40 282px,#ffff78 358px,#ffff5a 413px,#ffff04 450px,#ffff28 501px,#ffff07 535px,#ffff7f 570px,#ffff90 601px,#ffff79 670px,#ffff2a 696px)"></i>
<i style="left:143.4px;background:linear-gradient(#ffffff -0px,#fffff3 210px,#ffffee 253px,#ffffff 303px,#ffffef 384px,#fffff3 438px,#fffff3 453px,#ffffc7 496px,#fffff8 531px,#ffff83 619px,#ffff3e 657px,#ffff00 694px,#ffff00 696px)"></i>
<i style="left:144.4px;background:linear-gradient(#ffffff -0px,#fffff4 540px,#ffff48 638px,#fffa00 650px,#ffdb00 672px,#ffff00 696px)"></i>
<i style="left:145.4px;background:linear-gradient(#ffffff -0px,#fffff4 540px,#ffffaf 575px,#fff700 593px,#ff7100 615px,#ff3e00 637px,#ffa100 666px,#ff6300 688px,#ff2e00 696px)"></i>
<i style="left:146.4px;background:linear-gradient(#ffffff -0px,#fffff3 25px,#ffffff 242px,#fffff5 487px,#ffff87 509px,#fff500 526px,#fa0000 566px,#cd0000 577px,#da0000 611px,#ff0600 633px,#eb0000 655px,#cd0000 669px,#cd0000 696px)"></i>
<i style="left:147.4px;background:linear-gradient(#ffd400 -0px,#ffff07 7px,#ffff1f 12px,#ffff1b 36px,#ffff18 51px,#ffff5c 66px,#ffffbf 86px,#fffff9 99px,#ffffdb 121px,#ffffff 146px,#fffff6 449px,#ffff21 476px,#fff400 481px,#f60000 526px,#cd0000 536px,#cd0000 696px)"></i>
<i style="left:148.4px;background:linear-gradient(#750000 -0px,#cd0000 12px,#cf0000 27px,#d00000 60px,#ca0000 98px,#ff0b00 104px,#ffc600 127px,#ffff09 140px,#ffff7d 181px,#ffff97 206px,#ffffff 233px,#ffffed 284px,#ffffc6 376px,#ffffb6 408px,#ffff54 435px,#fff600 449px,#ff1e00 483px,#e90000 493px,#790000 525px,#680000 564px,#cd0000 613px,#bc0000 645px,#950000 673px,#480000 696px)"></i>
<i style="left:149.4px;background:linear-gradient(#0b0000 -0px,#190000 38px,#130000 85px,#150000 139px,#ff0400 179px,#750000 233px,#d40000 279px,#ff0a00 307px,#ff0e00 353px,#f00000 370px,#220000 434px,#0f0000 456px,#170000 543px,#640000 610px,#2d0000 642px,#0b0000 675px,#0b0000 696px)"></i>
<i style="left:150.4px;background:linear-gradient(#0b0000 -0px,#0b0000 696px)"></i>
<i style="left:151.4px;background:linear-gradient(#0b0000 -0px,#0b0000 696px)"></i>
<i style="left:152.4px;background:linear-gradient(#0b0000 -0px,#150000 11px,#7a0000 32px,#930000 49px,#8d0000 89px,#840000 248px,#6f0000 296px,#660000 500px,#8c0000 556px,#4c0000 591px,#0d0000 610px,#160000 645px,#280000 673px,#0b0000 696px)"></i>
<i style="left:153.4px;background:linear-gradient(#ffb100 -0px,#ff8400 12px,#ffca00 37px,#ffff0a 48px,#ffff3f 55px,#ffff33 275px,#fff600 315px,#ffc300 391px,#ffd900 462px,#ffff06 516px,#fff400 536px,#ff9d00 568px,#ffaa00 597px,#ffc000 611px,#ff6800 640px,#f30000 656px,#9d0000 676px,#8f0000 689px,#b00000 696px)"></i>
<i style="left:154.4px;background:linear-gradient(#ffffd7 -0px,#ffffbc 22px,#fffff9 52px,#fffff5 452px,#ffff65 533px,#ffff87 601px,#ffff74 611px,#ffff22 636px,#ffff22 667px,#ffff00 696px)"></i>
<i style="left:155.4px;background:linear-gradient(#ffffff -0px,#fffff3 456px,#ffff87 543px,#ffff7a 615px,#ffff00 695px,#ffff00 696px)"></i>
<i style="left:156.4px;background:linear-gradient(#ffffff -0px,#fffff3 456px,#ffff87 543px,#ffff7a 615px,#ffff00 695px,#ffff00 696px)"></i>
<i style="left:157.4px;background:linear-gradient(#ffffff -0px,#fffff3 456px,#ffff87 543px,#ffff7c 612px,#fff500 646px,#ff3f00 682px,#ff0100 696px)"></i>
<i style="left:158.4px;background:linear-gradient(#ffffff -0px,#fffff3 456px,#ffff87 543px,#ffff7b 609px,#fff800 627px,#f70000 679px,#cd0000 691px,#cd0000 696px)"></i>
<i style="left:159.4px;background:linear-gradient(#ffffff -0px,#fffff3 456px,#ffff87 543px,#ffff7b 609px,#fff800 627px,#fc0000 674px,#cd0000 692px,#cd0000 696px)"></i>
<i style="left:160.4px;background:linear-gradient(#ffffff -0px,#fffff4 453px,#fff800 552px,#ff7400 594px,#fb0000 622px,#cd0000 646px,#cd0000 696px)"></i>
<i style="left:161.4px;background:linear-gradient(#ffffa7 -0px,#ffffff 37px,#fffffc 176px,#fffff3 373px,#ffff08 522px,#fff100 536px,#ff1600 583px,#e50000 598px,#cd0000 617px,#d90000 695px,#db0000 696px)"></i>
<i style="left:162.4px;background:linear-gradient(#ff4a00 -0px,#ffbd00 61px,#ffc700 143px,#fff900 182px,#ffbe00 256px,#ffff00 363px,#ff2600 457px,#ee0000 505px,#cd0000 550px,#db0000 622px,#ff0f00 651px,#ff7f00 692px,#ff7f00 696px)"></i>
<i style="left:163.4px;background:linear-gradient(#cd0000 -0px,#c10000 142px,#660000 180px,#c00000 224px,#c50000 274px,#620000 375px,#6f0000 458px,#cd0000 544px,#d90000 613px,#ff1100 638px,#ff7f00 693px,#ff7f00 696px)"></i>
<i style="left:164.4px;background:linear-gradient(#c30000 -0px,#c10000 142px,#650000 182px,#c70000 273px,#620000 375px,#6f0000 458px,#cd0000 544px,#d90000 613px,#ff1100 638px,#ff7f00 693px,#ff7f00 696px)"></i>
<i style="left:165.4px;background:linear-gradient(#620000 -0px,#620000 178px,#6d0000 455px,#ec0000 569px,#d80000 610px,#ff1000 624px,#ff7300 664px,#ff7f00 696px)"></i>
<i style="left:166.4px;background:linear-gradient(#620000 -0px,#6d0000 142px,#c80000 181px,#640000 269px,#cd0000 376px,#d80000 452px,#ff0e00 472px,#ffd500 525px,#fffc00 535px,#ffdb00 578px,#fff800 612px,#ff7f00 695px,#ff7f00 696px)"></i>
<i style="left:167.4px;background:linear-gradient(#880000 -0px,#680000 10px,#ff0500 26px,#ff7300 46px,#ff8300 64px,#ff9500 156px,#ffb700 184px,#ff8c00 271px,#ffff0c 318px,#fffffc 364px,#fffd00 417px,#ffc000 450px,#ffff09 499px,#fff300 615px,#ff8500 692px,#ff8900 696px)"></i>
<i style="left:168.4px;background:linear-gradient(#ffff18 -0px,#ffff05 16px,#ffff4f 34px,#ffffff 55px,#fffff5 451px,#ffff02 536px,#ffff03 604px,#ffee00 668px,#ffff00 696px)"></i>
<i style="left:169.4px;background:linear-gradient(#ffffff -0px,#ffffea 41px,#ffffff 71px,#fffff5 453px,#ffff3f 573px,#ffff00 615px,#ffff00 696px)"></i>
<i style="left:170.4px;background:linear-gradient(#ffffff -0px,#fffff3 456px,#ffff34 579px,#ffff00 616px,#ffff00 696px)"></i>
<i style="left:171.4px;background:linear-gradient(#ffffff -0px,#fffff3 456px,#ffff34 579px,#fff000 615px,#ffd100 656px,#ffff00 696px)"></i>
<i style="left:172.4px;background:linear-gradient(#ffffff -0px,#fffff2 387px,#ffffac 455px,#fff600 506px,#ff3c00 565px,#f10000 593px,#d20000 609px,#ff1100 625px,#ffff00 690px,#ffff00 696px)"></i>
<i style="left:173.4px;background:linear-gradient(#ffffff -0px,#fffffb 24px,#fffff3 271px,#fffe00 368px,#fff300 450px,#ff1200 505px,#e10000 523px,#b90000 571px,#db0000 613px,#ff0f00 631px,#ffd800 680px,#fff800 689px,#ffd700 696px)"></i>
<i style="left:174.4px;background:linear-gradient(#740000 -0px,#b90000 13px,#b60000 56px,#c00000 200px,#ac0000 280px,#490000 338px,#0e0000 368px,#190000 433px,#150000 463px,#0e0000 530px,#1c0000 591px,#160000 611px,#600000 641px,#4b0000 669px,#0b0000 692px,#0b0000 696px)"></i>
<i style="left:175.4px;background:linear-gradient(#0b0000 -0px,#0b0000 696px)"></i>
<i style="left:176.4px;background:linear-gradient(#fffb00 -0px,#fff500 451px,#f50000 517px,#b30000 537px,#a00000 640px,#7e0000 696px)"></i>
<i style="left:177.4px;background:linear-gradient(#ffffff -0px,#fffff4 611px,#ffff00 691px,#ffff00 696px)"></i>
<i style="left:178.4px;background:linear-gradient(#ffffff -0px,#fffff6 451px,#ffff58 525px,#ffff31 539px,#fff500 552px,#ff4900 610px,#ffb900 696px)"></i>
<i style="left:179.4px;background:linear-gradient(#ffffff -0px,#fffffb 448px,#fffb00 479px,#f60000 526px,#cd0000 536px,#cd0000 696px)"></i>
<i style="left:180.4px;background:linear-gradient(#ffffff -0px,#fffff7 269px,#fffa00 315px,#ff4000 368px,#f40000 447px,#cd0000 572px,#cd0000 696px)"></i>
<i style="left:181.4px;background:linear-gradient(#ffffff -0px,#ffffdd 27px,#ffff94 56px,#fffffa 100px,#ffff95 140px,#fffff7 180px,#fff600 225px,#ff3e00 272px,#f20000 330px,#670000 452px,#e70000 568px,#f00000 619px,#cd0000 696px)"></i>
<i style="left:182.4px;background:linear-gradient(#ffd000 -0px,#ffa200 23px,#ff5700 55px,#ffc500 99px,#ff5600 138px,#ffff0d 165px,#ffff8c 179px,#fff800 200px,#f50000 258px,#cd0000 271px,#bf0000 374px,#680000 451px,#ff0b00 544px,#ff7a00 611px,#f70000 692px,#f60000 696px)"></i>
<i style="left:183.4px;background:linear-gradient(#fd0000 -0px,#d40000 59px,#f20000 103px,#d50000 140px,#ff0f00 157px,#ff5200 182px,#ff4600 277px,#f10000 338px,#840000 450px,#ff0d00 496px,#ff7f00 537px,#ff7f00 696px)"></i>
<i style="left:184.4px;background:linear-gradient(#cd0000 -0px,#d70000 181px,#ff1000 194px,#ffff07 248px,#ffff8c 268px,#fff700 293px,#f50000 354px,#cd0000 367px,#d80000 453px,#ff1100 480px,#ff7f00 540px,#ff7f00 696px)"></i>
<i style="left:185.4px;background:linear-gradient(#cd0000 -0px,#d50000 180px,#ff1000 191px,#ffff0b 237px,#fffffc 268px,#fff800 310px,#ff1f00 365px,#ffff0c 434px,#ffff47 449px,#fff700 473px,#ff7f00 539px,#ff7f00 696px)"></i>
<i style="left:186.4px;background:linear-gradient(#cd0000 -0px,#d70000 102px,#ff1000 122px,#ff6b00 144px,#ffff0c 171px,#ffff54 181px,#ffffed 255px,#fffff6 274px,#ffff85 367px,#fffffa 450px,#ffff20 538px,#ffff17 696px)"></i>
<i style="left:187.4px;background:linear-gradient(#ffff3d -0px,#ffff4e 42px,#ffff55 99px,#fffffd 137px,#ffffff 696px)"></i>
<i style="left:188.4px;background:linear-gradient(#ffffff -0px,#ffffff 696px)"></i>
<i style="left:189.4px;background:linear-gradient(#ffffff -0px,#fffff4 613px,#ffff80 689px,#ffff84 696px)"></i>
<i style="left:190.4px;background:linear-gradient(#ffffff -0px,#fffff4 611px,#ffff00 691px,#ffff00 696px)"></i>
<i style="left:191.4px;background:linear-gradient(#ffffff -0px,#fffff5 451px,#ffff00 537px,#ffff20 649px,#ffff00 696px)"></i>
<i style="left:192.4px;background:linear-gradient(#ffffff -0px,#fffff4 184px,#ffff3d 274px,#ffff11 369px,#ffe200 392px,#ff8500 451px,#fff900 537px,#ff8500 611px,#ffff00 695px,#ffff00 696px)"></i>
<i style="left:193.4px;background:linear-gradient(#ffffff -0px,#fffff2 193px,#ffffb2 270px,#fff700 306px,#ff1f00 369px,#ed0000 410px,#cd0000 452px,#ff0f00 487px,#ff6300 538px,#ff2b00 617px,#ff6c00 696px)"></i>
<i style="left:194.4px;background:linear-gradient(#ffffff -0px,#fffffb 268px,#fffa00 297px,#f80000 340px,#690000 366px,#130000 451px,#cd0000 539px,#cd0000 696px)"></i>
<i style="left:195.4px;background:linear-gradient(#ffffff -0px,#fffffa 98px,#fff700 120px,#ff5e00 138px,#ffff02 159px,#fffffc 179px,#fff900 224px,#f30000 295px,#0b0000 367px,#190000 462px,#cd0000 616px,#cd0000 696px)"></i>
<i style="left:196.4px;background:linear-gradient(#ffff2a -0px,#ffff1a 10px,#fff000 14px,#f50000 45px,#b20000 55px,#aa0000 99px,#0b0000 138px,#150000 540px,#940000 612px,#6f0000 696px)"></i>
<i style="left:197.4px;background:linear-gradient(#0b0000 -0px,#0b0000 696px)"></i>
<i style="left:198.4px;background:linear-gradient(#620000 -0px,#0e0000 10px,#440000 25px,#150000 51px,#170000 554px,#3c0000 624px,#1a0000 675px,#140000 691px,#210000 696px)"></i>
<i style="left:199.4px;background:linear-gradient(#0b0000 -0px,#180000 11px,#660000 26px,#580000 41px,#0f0000 54px,#5a0000 70px,#4a0000 86px,#0e0000 98px,#4a0000 114px,#2d0000 131px,#130000 139px,#420000 157px,#170000 176px,#130000 226px,#180000 274px,#320000 317px,#0b0000 384px,#170000 541px,#800000 643px,#590000 678px,#250000 696px)"></i>
<i style="left:200.4px;background:linear-gradient(#ffff7b -0px,#fffff8 9px,#ffff85 24px,#ffff81 37px,#ffffd8 50px,#fffffa 54px,#ffff9a 67px,#ffff93 81px,#ffffe7 95px,#fffffa 98px,#ffffab 112px,#ffffb7 126px,#fffff7 138px,#ffff0b 155px,#ff8400 179px,#ffff08 217px,#fffffc 268px,#fffa00 309px,#ff1c00 368px,#ec0000 399px,#130000 523px,#190000 539px,#a80000 600px,#bb0000 674px,#cd0000 696px)"></i>
<i style="left:201.4px;background:linear-gradient(#ffffff -0px,#fffff3 141px,#ffffbf 173px,#ffffff 227px,#fffff7 269px,#fff600 315px,#ff2f00 369px,#f00000 409px,#b60000 453px,#c30000 507px,#940000 554px,#bf0000 601px,#cd0000 650px,#cd0000 696px)"></i>
<i style="left:202.4px;background:linear-gradient(#ffffff -0px,#fffff4 182px,#ffff68 210px,#fff400 225px,#f60000 267px,#8f0000 310px,#620000 382px,#6f0000 458px,#cd0000 544px,#cd0000 696px)"></i>
<i style="left:203.4px;background:linear-gradient(#ffffff -0px,#fffff5 113px,#ffff9d 126px,#fff600 142px,#f70000 178px,#7a0000 208px,#620000 230px,#6d0000 457px,#cd0000 544px,#da0000 618px,#d80000 660px,#cd0000 696px)"></i>
<i style="left:204.4px;background:linear-gradient(#ffffff -0px,#fffff5 35px,#ffff76 50px,#fffa00 62px,#f70000 97px,#770000 116px,#620000 133px,#6e0000 455px,#d80000 555px,#d70000 612px,#ff0f00 637px,#ff5600 675px,#ff3f00 696px)"></i>
<i style="left:205.4px;background:linear-gradient(#ffffff -0px,#fffff9 10px,#ffff1e 25px,#ffee00 28px,#ff3d00 42px,#f60000 49px,#c40000 57px,#620000 103px,#6f0000 220px,#f90000 273px,#ff0500 344px,#f00000 455px,#ff0f00 501px,#ff5000 538px,#ff4700 619px,#ff5100 664px,#ff7f00 696px)"></i>
<i style="left:206.4px;background:linear-gradient(#fff100 -0px,#ffb200 12px,#ff1c00 33px,#ef0000 43px,#620000 102px,#6b0000 139px,#ff0700 157px,#ffff06 177px,#ffff35 181px,#fffff6 216px,#fffff5 450px,#ffff1a 492px,#ffee00 501px,#ff8000 533px,#ff8c00 572px,#ff8800 611px,#ffa600 644px,#ff7e00 679px,#ff7f00 696px)"></i>
<i style="left:207.4px;background:linear-gradient(#ff1100 -0px,#e00000 18px,#cd0000 46px,#a70000 69px,#a60000 81px,#ff0800 100px,#ffff0b 135px,#ffffbd 153px,#ffffff 169px,#fffff4 501px,#ffff84 542px,#ffff8d 575px,#ffff91 604px,#ffff60 639px,#ffff92 666px,#ffff8c 688px,#ffff5c 696px)"></i>
<i style="left:208.4px;background:linear-gradient(#cd0000 -0px,#d90000 38px,#ff0d00 51px,#ffb300 68px,#ffff07 75px,#ffffe9 95px,#ffffff 101px,#ffffff 696px)"></i>
<i style="left:209.4px;background:linear-gradient(#cd0000 -0px,#d90000 12px,#ff1100 21px,#fffe00 49px,#ffff52 56px,#ffffd9 82px,#ffffff 104px,#ffffff 696px)"></i>
<i style="left:210.4px;background:linear-gradient(#ff3e00 -0px,#ff8000 12px,#ffff07 26px,#ffffa2 40px,#ffffff 55px,#ffffff 696px)"></i>
<i style="left:211.4px;background:linear-gradient(#ffff5e -0px,#ffffef 36px,#ffffff 91px,#fffff5 452px,#ffffc2 493px,#ffffef 528px,#fffff6 536px,#ffffb3 567px,#ffffd2 595px,#fffffb 609px,#ffffc0 645px,#ffffe3 678px,#ffffff 695px,#ffffff 696px)"></i>
<i style="left:212.4px;background:linear-gradient(#ffffff -0px,#fffff6 366px,#ffff3f 427px,#fff200 483px,#ff8400 532px,#ffa900 579px,#ff8600 609px,#fffb00 645px,#ffff18 675px,#ffff08 690px,#ffff1d 696px)"></i>
<i style="left:213.4px;background:linear-gradient(#ffffff -0px,#fffff7 365px,#fff900 413px,#ff7f00 451px,#ff8b00 615px,#ffff00 695px,#ffff00 696px)"></i>
<i style="left:214.4px;background:linear-gradient(#ffffff -0px,#fffff5 270px,#fff900 325px,#ff7d00 368px,#ff7100 465px,#ff7500 524px,#ff8f00 628px,#ffff00 688px,#ffff00 696px)"></i>
<i style="left:215.4px;background:linear-gradient(#ffffff -0px,#fffff3 103px,#fffff0 130px,#ffffff 173px,#ffffc3 219px,#fffff3 262px,#fffffa 268px,#fff700 295px,#f80000 337px,#620000 365px,#6e0000 453px,#c90000 512px,#df0000 542px,#ff1200 564px,#ff7a00 610px,#ff2600 654px,#ff5a00 684px,#ff8900 696px)"></i>
<i style="left:216.4px;background:linear-gradient(#ffffff -0px,#fffff4 57px,#ffff67 84px,#fffb00 99px,#ff4e00 144px,#ff5d00 168px,#ff7c00 182px,#ff7000 247px,#ff7500 270px,#f50000 306px,#620000 368px,#6f0000 458px,#cd0000 544px,#d90000 615px,#f00000 660px,#cd0000 696px)"></i>
<i style="left:217.4px;background:linear-gradient(#ffffff -0px,#fffff4 30px,#ffffd2 42px,#fffff5 54px,#fffc00 66px,#ff0000 82px,#0b0000 98px,#180000 143px,#1e0000 169px,#130000 183px,#2c0000 229px,#0c0000 286px,#180000 378px,#9f0000 513px,#ca0000 539px,#c00000 616px,#bb0000 656px,#cd0000 695px,#cd0000 696px)"></i>
<i style="left:218.4px;background:linear-gradient(#0b0000 -0px,#0b0000 696px)"></i>
<i style="left:219.4px;background:linear-gradient(#0b0000 -0px,#0b0000 696px)"></i>
<i style="left:220.4px;background:linear-gradient(#0b0000 -0px,#0b0000 696px)"></i>
<i style="left:221.4px;background:linear-gradient(#0b0000 -0px,#0b0000 696px)"></i>
<i style="left:222.4px;background:linear-gradient(#0b0000 -0px,#100000 20px,#560000 32px,#5d0000 45px,#c60000 66px,#b20000 79px,#4a0000 92px,#0b0000 98px,#160000 113px,#2f0000 127px,#0b0000 143px,#150000 226px,#290000 251px,#0b0000 278px,#160000 536px,#560000 561px,#370000 584px,#0b0000 597px,#190000 610px,#580000 629px,#3b0000 647px,#0b0000 658px,#0b0000 696px)"></i>
<i style="left:223.4px;background:linear-gradient(#ff0700 -0px,#ff8c00 11px,#ffc100 22px,#fff800 38px,#ffff32 48px,#ffff39 54px,#fff800 59px,#ff9300 75px,#ff7b00 94px,#ff7100 106px,#ff3c00 125px,#ff6300 150px,#ff6600 181px,#ff8f00 201px,#ff6100 222px,#f70000 237px,#8a0000 269px,#b20000 319px,#8f0000 369px,#a50000 419px,#8f0000 455px,#c00000 487px,#ce0000 512px,#660000 549px,#ff0900 584px,#ff3a00 596px,#f30000 622px,#f10000 644px,#ff2e00 654px,#ff2b00 664px,#f40000 675px,#680000 690px,#1d0000 696px)"></i>
<i style="left:224.4px;background:linear-gradient(#ffff80 -0px,#ffffd1 15px,#fffff5 40px,#fffff3 55px,#ffffa8 75px,#ffffba 96px,#ffffff 113px,#fffff3 180px,#ffff7b 202px,#ffff57 227px,#ffff4f 240px,#ffff00 272px,#fff400 482px,#ffd200 511px,#fff800 536px,#ffc500 554px,#ff5c00 579px,#ff6100 599px,#ff7a00 610px,#ff7a00 634px,#ffce00 678px,#ffff00 690px,#ffff00 696px)"></i>
<i style="left:225.4px;background:linear-gradient(#ffffff -0px,#fffff5 182px,#ffff95 209px,#ffff0b 244px,#ffac00 274px,#ff9f00 339px,#ffaa00 369px,#ff8400 422px,#ff9a00 481px,#ff8900 513px,#ffb800 545px,#ff9a00 558px,#ff5300 587px,#ff5800 625px,#ff1900 658px,#ff7b00 680px,#fff400 696px)"></i>
<i style="left:226.4px;background:linear-gradient(#ffffff -0px,#fffff2 145px,#ffff8b 168px,#fffa00 190px,#ff6300 232px,#f30000 259px,#cd0000 271px,#c10000 373px,#670000 452px,#9f0000 485px,#d90000 517px,#d60000 554px,#ff0100 581px,#d20000 606px,#da0000 625px,#ff0200 656px,#d50000 684px,#cd0000 696px)"></i>
<i style="left:227.4px;background:linear-gradient(#ffffff -0px,#fffff7 139px,#ffffb7 161px,#ffffb5 181px,#ffff29 221px,#ffff2b 251px,#ffff47 272px,#fff000 298px,#ff1900 344px,#e90000 353px,#af0000 367px,#680000 453px,#cd0000 544px,#cd0000 696px)"></i>
<i style="left:228.4px;background:linear-gradient(#ffffff -0px,#fffffa 268px,#fffc00 296px,#f60000 339px,#620000 365px,#6f0000 458px,#cd0000 544px,#cd0000 696px)"></i>
<i style="left:229.4px;background:linear-gradient(#ffffff -0px,#fffff8 200px,#ffffa7 221px,#ffffae 245px,#fffffa 268px,#fffd00 298px,#f50000 349px,#a50000 367px,#620000 442px,#cd0000 545px,#cd0000 696px)"></i>
<i style="left:230.4px;background:linear-gradient(#ffffff -0px,#fffff7 140px,#ffff95 153px,#fff700 162px,#ff4300 179px,#ff3100 202px,#ff4700 230px,#f20000 268px,#e70000 294px,#ff1000 313px,#ffc700 365px,#ff4200 418px,#f40000 438px,#cb0000 450px,#fc0000 485px,#ff2b00 518px,#f20000 545px,#cd0000 567px,#cd0000 696px)"></i>
<i style="left:231.4px;background:linear-gradient(#ffffff -0px,#fffff6 86px,#fff400 114px,#ff1500 135px,#e40000 139px,#8e0000 153px,#ca0000 182px,#6b0000 269px,#ff0900 295px,#ffff08 336px,#fffffd 364px,#ffff00 451px,#fff000 485px,#ffde00 517px,#ffff00 543px,#ffe800 559px,#fc0000 617px,#ea0000 647px,#cd0000 662px,#cd0000 696px)"></i>
<i style="left:232.4px;background:linear-gradient(#ffffff -0px,#fffff4 43px,#fff800 68px,#ff1400 101px,#e60000 106px,#780000 125px,#680000 140px,#ca0000 181px,#cc0000 200px,#ff0e00 212px,#ffff08 263px,#ffffb0 291px,#fffffa 321px,#fffff2 373px,#ffff81 429px,#ffff14 467px,#ffff00 496px,#fff700 622px,#ffa900 647px,#ff8f00 661px,#ff1d00 687px,#ef0000 693px,#d80000 696px)"></i>
<i style="left:233.4px;background:linear-gradient(#fffffd -0px,#fff800 24px,#f60000 63px,#650000 87px,#6e0000 140px,#f00000 156px,#ff3800 162px,#ffff0c 176px,#ffff5c 180px,#fffff9 198px,#fffff4 478px,#ffff0a 555px,#ffff00 696px)"></i>
<i style="left:234.4px;background:linear-gradient(#ff7f00 -0px,#f40000 26px,#760000 45px,#620000 66px,#690000 138px,#ff0600 149px,#fffa00 164px,#fffff8 178px,#fffff5 555px,#ffff52 603px,#ffff00 622px,#ffff00 696px)"></i>
<i style="left:235.4px;background:linear-gradient(#cd0000 -0px,#b30000 20px,#620000 59px,#6e0000 103px,#ca0000 116px,#ff0500 121px,#ffe600 135px,#ffff15 137px,#ffffbb 147px,#ffffff 155px,#fffff1 183px,#ffffbe 217px,#ffffff 279px,#fffffb 608px,#ffff01 636px,#ffe100 655px,#ffff00 674px,#ffff00 696px)"></i>
<i style="left:236.4px;background:linear-gradient(#cd0000 -0px,#b30000 20px,#620000 59px,#690000 98px,#ff0a00 109px,#ffff07 126px,#fffff6 137px,#ffff87 180px,#fffff2 214px,#ffffff 336px,#fffffc 489px,#fffff5 535px,#ffffb0 553px,#ffffc8 570px,#ffffff 582px,#fffffb 608px,#fffa00 637px,#ff4600 669px,#ff6000 686px,#ffa800 696px)"></i>
<i style="left:237.4px;background:linear-gradient(#cd0000 -0px,#b30000 20px,#620000 59px,#6a0000 74px,#e50000 87px,#ff0e00 90px,#ffff00 105px,#ffffa8 115px,#fffffe 125px,#fffff2 377px,#ffffe9 431px,#fffff5 451px,#ffff72 500px,#ffff74 536px,#fff600 559px,#ff7f00 582px,#ff9c00 601px,#ffff07 624px,#ffff1c 633px,#fff400 638px,#f30000 681px,#cd0000 690px,#cd0000 696px)"></i>
<i style="left:238.4px;background:linear-gradient(#cd0000 -0px,#b30000 20px,#6c0000 54px,#fc0000 61px,#fffb00 74px,#ffffac 85px,#fffffb 96px,#fffff4 367px,#ffff04 450px,#ffff2f 498px,#fff500 536px,#f50000 600px,#cd0000 611px,#d50000 634px,#ff0c00 644px,#ff2e00 663px,#f30000 681px,#cd0000 690px,#cd0000 696px)"></i>
<i style="left:239.4px;background:linear-gradient(#cd0000 -0px,#d00000 20px,#ff0d00 29px,#ffab00 41px,#ffff0b 46px,#ffffed 53px,#ffffff 56px,#fffff3 276px,#ffffe8 330px,#fffff4 367px,#ffff00 451px,#fff400 536px,#f40000 598px,#c10000 616px,#cd0000 696px)"></i>
<i style="left:240.4px;background:linear-gradient(#cd0000 -0px,#dc0000 12px,#ff1000 19px,#ffde00 39px,#ffff08 42px,#ffffff 54px,#fffff4 78px,#ffffce 88px,#ffffff 101px,#fffff1 129px,#fffffb 185px,#ffffb0 222px,#ffff2c 245px,#fff800 270px,#ffcb00 308px,#fff700 369px,#ffda00 419px,#fff700 449px,#ff8e00 479px,#ff8a00 505px,#ffdd00 528px,#fffc00 534px,#ff3200 568px,#f30000 585px,#720000 651px,#a50000 678px,#cd0000 692px,#cd0000 696px)"></i>
<i style="left:241.4px;background:linear-gradient(#3a0000 -0px,#120000 10px,#ff0700 26px,#ff6800 33px,#ff8300 44px,#ff3500 64px,#ff7200 90px,#ff4d00 106px,#ff5700 139px,#ff4f00 180px,#f50000 193px,#640000 223px,#220000 260px,#120000 271px,#4e0000 341px,#750000 429px,#6b0000 453px,#820000 491px,#3e0000 522px,#0e0000 534px,#800000 558px,#8d0000 580px,#440000 599px,#0c0000 608px,#570000 641px,#460000 663px,#120000 689px,#340000 696px)"></i>
<i style="left:242.4px;background:linear-gradient(#0b0000 -0px,#1c0000 14px,#350000 24px,#0b0000 35px,#180000 57px,#220000 67px,#0b0000 79px,#1b0000 341px,#100000 511px,#0b0000 696px)"></i>
<i style="left:243.4px;background:linear-gradient(#0b0000 -0px,#0b0000 696px)"></i>
<i style="left:244.4px;background:linear-gradient(#0b0000 -0px,#0b0000 696px)"></i>
<i style="left:245.4px;background:linear-gradient(#560000 -0px,#0b0000 3px,#100000 10px,#a50000 23px,#f30000 27px,#ff1500 35px,#f20000 39px,#7e0000 45px,#490000 48px,#100000 54px,#8d0000 66px,#af0000 71px,#d20000 78px,#9a0000 85px,#520000 90px,#0b0000 99px,#130000 117px,#3c0000 127px,#0e0000 140px,#1f0000 163px,#1c0000 175px,#150000 181px,#6f0000 199px,#6f0000 220px,#100000 246px,#230000 304px,#4c0000 388px,#480000 463px,#4c0000 473px,#880000 497px,#650000 518px,#0c0000 534px,#2a0000 547px,#a30000 561px,#b80000 570px,#8a0000 581px,#1d0000 598px,#120000 609px,#570000 620px,#d90000 637px,#c30000 645px,#3d0000 660px,#0b0000 694px,#230000 696px)"></i>
<i style="left:246.4px;background:linear-gradient(#660000 -0px,#ff0200 6px,#ffb700 14px,#ffeb00 20px,#ffe600 23px,#f60000 38px,#ff1100 47px,#ffae00 60px,#ffbb00 69px,#ff1000 81px,#ff2200 91px,#ff8c00 105px,#ff7a00 115px,#ff3c00 123px,#ff4500 134px,#ff7e00 146px,#ff5600 157px,#f70000 164px,#130000 178px,#8f0000 197px,#c50000 218px,#9d0000 241px,#0f0000 269px,#560000 316px,#6d0000 451px,#c00000 481px,#a80000 505px,#3c0000 528px,#0f0000 535px,#670000 574px,#7a0000 592px,#370000 603px,#0d0000 608px,#e50000 642px,#ff1400 647px,#ff7000 660px,#ff1000 672px,#c80000 677px,#0b0000 688px,#0b0000 696px)"></i>
<i style="left:247.4px;background:linear-gradient(#ffffff -0px,#fffff4 10px,#ffff7b 17px,#ffff54 24px,#ffff7c 31px,#ffffff 39px,#fffff6 54px,#ffff92 62px,#ffff89 70px,#ffffd9 78px,#ffffff 81px,#fffff8 98px,#ffffbf 106px,#ffffdb 114px,#ffffff 119px,#fffff4 138px,#ffff44 148px,#fffa00 155px,#ffdf00 169px,#fff700 180px,#ff4c00 211px,#f60000 225px,#bd0000 248px,#c20000 277px,#6a0000 367px,#a80000 410px,#810000 439px,#670000 449px,#ff0d00 499px,#ff7a00 534px,#fb0000 549px,#910000 570px,#8a0000 582px,#c50000 609px,#780000 630px,#a20000 643px,#ff0600 653px,#ff6000 662px,#fffd00 687px,#ff6200 696px)"></i>
<i style="left:248.4px;background:linear-gradient(#ffffff -0px,#fffff6 139px,#ffff80 156px,#fff700 165px,#ff1a00 181px,#f00000 186px,#840000 207px,#ef0000 284px,#ff2300 301px,#ffff01 365px,#fff500 450px,#ff7a00 493px,#ff7100 522px,#ff7400 538px,#f50000 584px,#c90000 603px,#c00000 645px,#ab0000 660px,#ff0a00 671px,#ffff00 688px,#ffff00 696px)"></i>
<i style="left:249.4px;background:linear-gradient(#ffffff -0px,#fffff9 107px,#ffff9f 116px,#ffff98 126px,#ffff72 131px,#ffff15 138px,#ffe500 140px,#f50000 153px,#830000 164px,#620000 176px,#ac0000 230px,#ff0c00 251px,#fff900 299px,#ffffcf 348px,#fffffe 368px,#fffff3 437px,#fffff3 450px,#ffff3c 490px,#fffc00 521px,#fff200 537px,#ff5600 565px,#ff0800 583px,#cd0000 615px,#d20000 688px,#ff0c00 693px,#ff2e00 696px)"></i>
<i style="left:250.4px;background:linear-gradient(#ffffff -0px,#fffff5 73px,#ffff60 83px,#fff700 88px,#ff4100 98px,#fc0000 107px,#db0000 118px,#780000 129px,#620000 148px,#6f0000 184px,#d70000 208px,#ff1000 213px,#ffc100 233px,#ffff0b 245px,#ffff7e 267px,#ffffde 306px,#ffffff 381px,#fffff2 482px,#ffff91 511px,#ffff00 535px,#fff200 572px,#ff7b00 590px,#f30000 604px,#cd0000 609px,#cd0000 696px)"></i>
<i style="left:251.4px;background:linear-gradient(#ffffff -0px,#fffff4 55px,#ffffb0 61px,#ffff0d 66px,#ff5800 75px,#f80000 84px,#cd0000 96px,#620000 142px,#6c0000 156px,#ee0000 169px,#ff3900 174px,#ffc900 184px,#ffff03 189px,#ffffe0 206px,#ffffff 236px,#fffffb 534px,#ffff43 561px,#ffff00 581px,#fffa00 608px,#f60000 635px,#cd0000 643px,#cd0000 696px)"></i>
<i style="left:252.4px;background:linear-gradient(#ffffff -0px,#fffff8 32px,#ffff56 41px,#fff600 45px,#ff0900 57px,#cd0000 62px,#c10000 93px,#660000 122px,#660000 138px,#ff0400 150px,#fff700 166px,#ffffff 179px,#fffff1 196px,#ffffbf 225px,#ffffeb 260px,#ffffff 279px,#fffff3 540px,#ffff81 573px,#ffff0e 599px,#fff200 639px,#ff2100 660px,#f50000 664px,#ce0000 671px,#cd0000 696px)"></i>
<i style="left:253.4px;background:linear-gradient(#ffffff -0px,#fffff3 12px,#ffff8b 21px,#fffa00 28px,#ff9600 35px,#fb0000 49px,#cd0000 55px,#9e0000 79px,#650000 95px,#680000 128px,#d30000 138px,#fd0000 140px,#ffbf00 152px,#ffff08 159px,#ffff4d 169px,#ffff2d 193px,#ffffbb 222px,#fffffc 256px,#fffff3 541px,#ffffa1 584px,#ffff1c 611px,#ffff00 655px,#fff200 668px,#fd0000 690px,#cd0000 695px,#cd0000 696px)"></i>
<i style="left:254.4px;background:linear-gradient(#ffffff -0px,#fffff7 10px,#ffff68 18px,#fffa00 23px,#ff2a00 41px,#f30000 47px,#a00000 57px,#620000 79px,#6d0000 101px,#950000 107px,#ff0600 113px,#ffec00 128px,#ffff1d 133px,#ffff5b 145px,#ffffe1 185px,#ffffff 196px,#fffff3 541px,#ffff8c 611px,#ffff74 639px,#ffff00 669px,#fff700 695px,#ffeb00 696px)"></i>
<i style="left:255.4px;background:linear-gradient(#ffff9c -0px,#ffff35 10px,#fff900 13px,#fc0000 31px,#740000 46px,#620000 69px,#720000 74px,#ff0600 85px,#fff200 96px,#ffffd6 106px,#fffffa 126px,#fffff4 456px,#fffffd 489px,#fffff1 542px,#ffff8c 611px,#ffffc4 658px,#ffffbc 669px,#ffff1f 691px,#ffff00 696px)"></i>
<i style="left:256.4px;background:linear-gradient(#ff8900 -0px,#f50000 12px,#bb0000 17px,#640000 54px,#a30000 61px,#ff0d00 65px,#ffdd00 73px,#ffff01 75px,#ffffa0 83px,#fffff8 92px,#fffff5 451px,#ffff7c 496px,#ffff9d 524px,#ffffe7 548px,#ffff84 617px,#fffff3 680px,#fffff8 695px,#ffffee 696px)"></i>
<i style="left:257.4px;background:linear-gradient(#cd0000 -0px,#b30000 20px,#9b0000 32px,#ff0b00 41px,#ffd700 51px,#ffff11 53px,#ffffe2 60px,#ffffff 62px,#fffff5 366px,#ffff78 408px,#ffff74 436px,#ffff8b 454px,#ffff83 475px,#ffff6f 496px,#fff800 538px,#ffff0d 553px,#ffffa2 582px,#ffff71 620px,#ffff5e 640px,#ffffb2 660px,#ffffe3 669px,#ffffff 696px)"></i>
<i style="left:258.4px;background:linear-gradient(#cd0000 -0px,#dd0000 15px,#ff1100 21px,#ff9d00 30px,#fff400 34px,#ffffbd 45px,#ffffff 54px,#fffff3 274px,#ffff8c 304px,#fffe00 334px,#ffb200 389px,#ff9d00 433px,#ff3200 476px,#ff2400 496px,#ff7f00 528px,#ffe800 547px,#ffb600 582px,#ffff0a 602px,#ffff77 617px,#ffff2c 668px,#ffffba 687px,#ffffff 695px,#ffffff 696px)"></i>
<i style="left:259.4px;background:linear-gradient(#cd0000 -0px,#ce0000 3px,#ff0600 6px,#ffff06 18px,#ffffbf 26px,#ffffff 30px,#fffff4 211px,#ffff62 233px,#fffb00 244px,#ff2f00 272px,#f10000 288px,#c90000 310px,#970000 430px,#d40000 487px,#af0000 510px,#650000 536px,#870000 547px,#ff0700 561px,#ff9400 582px,#ff9300 596px,#ff7e00 617px,#ffff06 637px,#ffff3d 651px,#ffff00 694px,#ffff11 696px)"></i>
<i style="left:260.4px;background:linear-gradient(#ffffaf -0px,#ffffff 3px,#fffff4 181px,#ffff99 194px,#fff700 207px,#ff2d00 243px,#f20000 257px,#c20000 277px,#680000 369px,#6e0000 411px,#6a0000 510px,#6f0000 543px,#b50000 583px,#ff0b00 596px,#ff6300 613px,#ff4f00 629px,#ff4a00 641px,#ff7e00 652px,#ffff01 667px,#ffff06 684px,#ffff00 696px)"></i>
<i style="left:261.4px;background:linear-gradient(#ffffff -0px,#fffff3 150px,#ffff91 169px,#fff600 186px,#ff1c00 217px,#f00000 227px,#b20000 264px,#d20000 297px,#ff1000 319px,#ff9b00 368px,#ffb400 428px,#ff8800 450px,#f70000 476px,#980000 507px,#7b0000 551px,#dd0000 620px,#ff0e00 635px,#ff1a00 653px,#ff0600 668px,#ff9800 685px,#ffff00 695px,#ffff00 696px)"></i>
<i style="left:262.4px;background:linear-gradient(#ffffff -0px,#fffff7 139px,#ffff93 150px,#fff600 160px,#f90000 176px,#b60000 181px,#6f0000 194px,#6c0000 271px,#e20000 333px,#ff1200 360px,#ff6400 419px,#ffb500 453px,#ffa400 473px,#ff0700 513px,#cd0000 537px,#b10000 588px,#de0000 634px,#d20000 651px,#e40000 676px,#cd0000 694px,#e10000 696px)"></i>
<i style="left:263.4px;background:linear-gradient(#ffffff -0px,#fffff5 38px,#ffffcb 45px,#ffffee 52px,#ffffff 58px,#fffff6 87px,#fffff0 95px,#ffffff 108px,#ffffff 137px,#ffffbf 139px,#ffff1a 143px,#fff700 144px,#ff1800 155px,#ea0000 158px,#7d0000 169px,#620000 182px,#6e0000 279px,#ac0000 305px,#ff0a00 331px,#ff4200 367px,#f30000 408px,#cd0000 426px,#db0000 454px,#ff0c00 470px,#ff3700 487px,#ff0d00 504px,#d90000 530px,#bc0000 556px,#ca0000 593px,#bd0000 614px,#a10000 632px,#ff0100 661px,#cd0000 677px,#cd0000 696px)"></i>
<i style="left:264.4px;background:linear-gradient(#ffffff -0px,#ffffff 9px,#fffe00 18px,#ffa600 27px,#ffa900 36px,#fffa00 42px,#fffff4 53px,#ffffef 54px,#ffff34 61px,#fffc00 64px,#ffc200 73px,#ffde00 83px,#ffff0f 87px,#fffff4 97px,#fffff1 98px,#ffff01 107px,#ff0100 122px,#0c0000 138px,#5c0000 182px,#4c0000 211px,#c40000 233px,#ff0f00 242px,#ffff0b 266px,#ffff25 269px,#ffff56 306px,#ffff85 333px,#fffffd 364px,#ffff7b 397px,#ffff5a 427px,#ffff44 448px,#ffff02 452px,#ff2100 475px,#f60000 486px,#ff0f00 502px,#ffb400 534px,#ff0100 547px,#8c0000 558px,#710000 576px,#ad0000 601px,#ce0000 612px,#560000 660px,#ff0300 683px,#ff2300 688px,#ee0000 696px)"></i>
<i style="left:265.4px;background:linear-gradient(#0b0000 -0px,#0b0000 696px)"></i>
<i style="left:266.4px;background:linear-gradient(#0b0000 -0px,#0b0000 696px)"></i>
<i style="left:267.4px;background:linear-gradient(#ff4900 -0px,#ff0600 2px,#1b0000 9px,#140000 12px,#560000 46px,#0e0000 55px,#130000 99px,#9e0000 123px,#3c0000 134px,#0f0000 138px,#be0000 160px,#7e0000 170px,#0c0000 179px,#d50000 235px,#410000 261px,#0c0000 268px,#2d0000 295px,#0f0000 366px,#400000 417px,#220000 441px,#0f0000 448px,#ff0800 476px,#ff2700 485px,#ff1a00 493px,#ec0000 499px,#530000 515px,#120000 534px,#eb0000 551px,#d30000 580px,#3c0000 595px,#0d0000 607px,#ff0200 620px,#ff0c00 623px,#970000 667px,#2a0000 679px,#140000 688px,#a40000 696px)"></i>
<i style="left:268.4px;background:linear-gradient(#0b0000 -0px,#1a0000 13px,#3e0000 20px,#bb0000 26px,#f60000 33px,#d70000 40px,#0b0000 54px,#150000 79px,#350000 89px,#100000 98px,#490000 108px,#2c0000 118px,#0b0000 124px,#100000 138px,#430000 147px,#220000 157px,#0b0000 163px,#160000 180px,#6d0000 196px,#990000 204px,#c90000 217px,#9b0000 231px,#920000 235px,#ff0c00 254px,#ff8c00 280px,#ffc800 311px,#ffa900 340px,#ff5f00 365px,#ffaf00 404px,#ff8500 435px,#ff4300 451px,#f60000 464px,#c40000 479px,#ff0e00 486px,#ffd100 508px,#ffe700 514px,#ff8900 525px,#ff0000 534px,#6d0000 551px,#780000 553px,#ff0100 563px,#ff8800 578px,#ffa300 587px,#ff9100 594px,#ff0300 604px,#4b0000 617px,#270000 621px,#f80000 632px,#ff9b00 646px,#f30000 678px,#4b0000 691px,#1c0000 696px)"></i>
<i style="left:269.4px;background:linear-gradient(#1c0000 -0px,#ff0800 7px,#ff9900 12px,#fffd00 18px,#ffff11 20px,#ffdc00 23px,#f60000 38px,#120000 53px,#3d0000 56px,#bd0000 65px,#ee0000 74px,#dd0000 79px,#0b0000 98px,#160000 113px,#3f0000 125px,#0b0000 141px,#160000 161px,#a60000 173px,#ff0b00 179px,#ffbc00 200px,#ffab00 214px,#fff400 229px,#ffff3a 238px,#ffffc3 260px,#ffffff 269px,#fffff3 471px,#ffffd7 480px,#ffff04 498px,#ffba00 515px,#ffe700 529px,#ffff08 538px,#ffff10 552px,#ffe800 555px,#ff1600 578px,#ff1100 585px,#ff7100 599px,#ff7600 610px,#ff3f00 622px,#f60000 627px,#740000 640px,#580000 646px,#ee0000 657px,#ff2000 665px,#ff1f00 671px,#ed0000 681px,#cd0000 691px,#cd0000 696px)"></i>
<i style="left:270.4px;background:linear-gradient(#ffffff -0px,#fffff4 10px,#fffa00 21px,#ff5e00 32px,#ff6b00 41px,#ffd600 51px,#fff900 54px,#f30000 77px,#880000 85px,#a20000 94px,#f30000 105px,#f60000 112px,#440000 129px,#0d0000 138px,#6c0000 149px,#ff0d00 159px,#ff5a00 172px,#ff5b00 181px,#ff4100 200px,#ffe400 228px,#ffff09 232px,#ffffaf 250px,#ffffff 268px,#fffff5 515px,#ffff29 550px,#ffff4a 580px,#ffff0d 587px,#ff8600 606px,#f40000 646px,#920000 657px,#830000 669px,#d30000 678px,#cd0000 696px)"></i>
<i style="left:271.4px;background:linear-gradient(#ffffff -0px,#fffff4 10px,#ffff7f 17px,#ffff59 24px,#ffff7d 32px,#fff300 54px,#ff4e00 62px,#fc0000 70px,#ff0900 79px,#ff4900 85px,#ff2000 98px,#ec0000 102px,#7d0000 114px,#0f0000 138px,#660000 152px,#9b0000 168px,#d50000 179px,#ff0800 182px,#ffec00 199px,#ffff13 202px,#ffffc6 217px,#ffffff 226px,#fffff3 541px,#ffffd3 554px,#ffff6b 576px,#ffff67 590px,#ffff7f 608px,#fffe00 616px,#ff2100 634px,#ee0000 648px,#830000 674px,#7d0000 682px,#c30000 696px)"></i>
<i style="left:272.4px;background:linear-gradient(#ffffff -0px,#fffff1 12px,#ffff73 32px,#fffc00 38px,#ff1e00 50px,#f00000 52px,#ce0000 54px,#f20000 70px,#cd0000 91px,#b70000 102px,#0d0000 137px,#ff0300 149px,#fffe00 164px,#ffffe5 177px,#ffffff 180px,#fffff8 535px,#ffffc8 554px,#ffffbf 573px,#ffff84 605px,#ffff51 632px,#fffc00 637px,#fe0000 653px,#cb0000 658px,#620000 691px,#620000 696px)"></i>
<i style="left:273.4px;background:linear-gradient(#ffffff -0px,#fffff6 11px,#ffff8e 20px,#fff300 28px,#ff2700 44px,#f30000 49px,#ce0000 55px,#c10000 100px,#a00000 109px,#e80000 118px,#ff1500 121px,#ffa500 128px,#fff500 131px,#ffff95 135px,#ffffea 137px,#fffffc 139px,#fffff5 451px,#ffffbe 480px,#ffffe4 506px,#ffffff 518px,#fffff6 535px,#ffff4c 565px,#ffff5e 582px,#ffff9b 595px,#ffff2f 655px,#fff700 658px,#f20000 672px,#8b0000 677px,#620000 692px,#620000 696px)"></i>
<i style="left:274.4px;background:linear-gradient(#ffffff -0px,#fffff7 10px,#ffff87 16px,#fff700 22px,#ff0000 42px,#cd0000 52px,#b70000 75px,#cc0000 97px,#ff0900 100px,#fff400 110px,#ffffcb 121px,#ffffff 127px,#fffff6 449px,#ffffad 469px,#ffff81 490px,#ffff40 515px,#ffff8e 543px,#ffff83 554px,#fff600 578px,#ffbc00 595px,#ffff0d 611px,#ffff6e 622px,#ffff0f 677px,#ffa800 682px,#fe0000 690px,#860000 696px)"></i>
<i style="left:275.4px;background:linear-gradient(#ffffb9 -0px,#ffff34 10px,#ffff05 12px,#ff8e00 18px,#ff0000 26px,#a20000 36px,#a90000 47px,#820000 67px,#9d0000 73px,#ff0300 80px,#fff100 91px,#ffff3b 93px,#ffffe8 97px,#ffffff 99px,#fffffa 364px,#ffff0c 394px,#ffcb00 422px,#fffa00 442px,#ffff45 457px,#ffff4d 465px,#fff600 474px,#ffbb00 493px,#ffd600 512px,#ffff0e 522px,#ffff13 527px,#ffe600 540px,#ffcd00 555px,#ffea00 576px,#ffa500 598px,#ff7f00 612px,#ff9900 623px,#ffff0a 637px,#ffff44 647px,#ffff00 696px)"></i>
<i style="left:276.4px;background:linear-gradient(#ff8d00 -0px,#fc0000 7px,#6f0000 15px,#770000 34px,#630000 51px,#820000 58px,#ff0c00 68px,#fffd00 79px,#ffffae 87px,#fffff6 94px,#fffff5 298px,#ffff2b 359px,#fff000 373px,#ff3d00 416px,#f00000 427px,#620000 449px,#6c0000 466px,#e10000 488px,#f20000 507px,#bd0000 520px,#ab0000 526px,#e30000 536px,#ff1300 541px,#ff8900 559px,#ff6100 579px,#ff8d00 603px,#ff7f00 633px,#ffa700 648px,#ffff07 661px,#ffff1a 672px,#ffff00 696px)"></i>
<i style="left:277.4px;background:linear-gradient(#620000 -0px,#6f0000 30px,#750000 48px,#ff0600 54px,#fff200 62px,#ffff54 65px,#fffff5 71px,#fffff5 269px,#ffff2e 291px,#fffb00 295px,#fd0000 334px,#620000 365px,#700000 422px,#670000 518px,#720000 545px,#960000 562px,#fe0000 579px,#ff0a00 593px,#f00000 604px,#ff0e00 610px,#ff7f00 629px,#ff8a00 663px,#ffff02 684px,#ffff00 696px)"></i>
<i style="left:278.4px;background:linear-gradient(#620000 -0px,#7f0000 10px,#ba0000 28px,#fd0000 33px,#ffa600 41px,#fff700 44px,#ffffa6 48px,#ffffff 54px,#fffff4 191px,#ffffa8 216px,#ffff5a 235px,#fff700 252px,#ffb000 271px,#ff1e00 298px,#ef0000 311px,#620000 368px,#6e0000 542px,#cd0000 607px,#ee0000 628px,#ff2200 634px,#ff7f00 652px,#ff8900 684px,#ffd400 696px)"></i>
<i style="left:279.4px;background:linear-gradient(#b50000 -0px,#cd0000 10px,#ff0c00 19px,#ffa000 29px,#fffd00 37px,#ffffb7 47px,#ffffff 54px,#fffff5 154px,#ffff8b 171px,#ffff2f 182px,#fff400 191px,#ff3000 220px,#fa0000 240px,#ec0000 271px,#a70000 301px,#620000 376px,#6e0000 542px,#cd0000 617px,#da0000 641px,#ff0e00 652px,#ff6300 663px,#ff7f00 682px,#ff7f00 696px)"></i>
<i style="left:280.4px;background:linear-gradient(#cd0000 -0px,#d20000 10px,#ff0e00 15px,#ffe800 26px,#ffff20 29px,#ffffa4 37px,#fffff7 50px,#fffff4 140px,#ffff9d 152px,#fff500 162px,#fe0000 176px,#bc0000 180px,#7e0000 190px,#c70000 273px,#620000 375px,#6c0000 451px,#850000 476px,#710000 516px,#670000 537px,#cd0000 616px,#d60000 662px,#ff1100 671px,#ff7b00 684px,#ff7f00 696px)"></i>
<i style="left:281.4px;background:linear-gradient(#ff2200 -0px,#fff600 13px,#ffffac 25px,#ffffff 36px,#fffff7 138px,#ffff2c 148px,#fffa00 150px,#f80000 167px,#660000 178px,#c70000 273px,#bc0000 297px,#fd0000 345px,#ff0c00 371px,#ff3e00 404px,#ff2f00 434px,#f10000 448px,#c80000 465px,#ff0c00 477px,#ff2700 498px,#f40000 515px,#bc0000 527px,#8c0000 563px,#cd0000 617px,#d30000 683px,#ff0f00 690px,#ff4300 696px)"></i>
<i style="left:282.4px;background:linear-gradient(#ffff46 -0px,#ffffff 15px,#fffff3 120px,#ffffcc 128px,#ffffb6 131px,#ffff39 138px,#fff400 140px,#ff1900 151px,#eb0000 154px,#880000 164px,#660000 182px,#a50000 224px,#ff0a00 242px,#ffcd00 273px,#ffff0d 285px,#ffff63 300px,#ffffe7 351px,#ffffff 377px,#fffff2 418px,#ffffe9 440px,#fffff9 452px,#ffffe1 465px,#ffff2a 483px,#fff900 491px,#ffe400 510px,#ffff08 519px,#ffff2d 524px,#fff200 534px,#f60000 561px,#b90000 574px,#c80000 604px,#cd0000 696px)"></i>
<i style="left:283.4px;background:linear-gradient(#ffffff -0px,#fffffa 91px,#ffff1b 100px,#ffea00 103px,#ff2200 120px,#f40000 126px,#cd0000 131px,#a20000 154px,#660000 181px,#880000 190px,#ff0d00 202px,#ffdf00 226px,#ffff0e 233px,#ffff8e 256px,#fffff9 288px,#fffff3 456px,#ffff8f 519px,#ffff83 532px,#ffff82 561px,#ffff14 572px,#ffe100 576px,#f40000 597px,#ca0000 602px,#d80000 631px,#cd0000 696px)"></i>
<i style="left:284.4px;background:linear-gradient(#ffffff -0px,#fffffa 66px,#ffffa6 72px,#ffff04 77px,#ff0400 89px,#d90000 92px,#be0000 143px,#b10000 154px,#ff0700 167px,#fffe00 188px,#ffffdc 223px,#ffffff 246px,#fffff4 453px,#ffff87 543px,#ffff79 596px,#ffff6d 601px,#fffc00 607px,#ff3d00 619px,#f70000 626px,#ff0400 645px,#cd0000 665px,#cd0000 696px)"></i>
<i style="left:285.4px;background:linear-gradient(#ffffff -0px,#fffff8 42px,#ffffd3 48px,#fff900 56px,#ff0a00 67px,#cd0000 73px,#c40000 106px,#9f0000 122px,#dd0000 141px,#ff0300 146px,#ffdd00 162px,#ffff10 166px,#ffffca 180px,#ffffff 191px,#fffff4 450px,#ffff90 492px,#ffff87 533px,#ffff41 546px,#ffff5b 557px,#ffff87 564px,#ffff7a 609px,#fff900 622px,#ffbf00 628px,#ff6200 634px,#ff1600 645px,#ff2500 653px,#ff4100 661px,#f20000 677px,#cd0000 684px,#cd0000 696px)"></i>
<i style="left:286.4px;background:linear-gradient(#ffffff -0px,#fffff8 20px,#fffd00 28px,#ff0000 41px,#b40000 48px,#cd0000 59px,#ba0000 69px,#660000 89px,#2d0000 104px,#760000 117px,#ff0800 128px,#ffe100 141px,#ffff0c 144px,#ffff4c 150px,#ffff64 155px,#ffff5d 164px,#ffffaa 173px,#ffffff 179px,#fffffb 200px,#ffff5d 212px,#ffff0a 225px,#ffff0c 239px,#ffff69 254px,#ffffff 268px,#fffff3 369px,#ffffe4 395px,#ffffff 447px,#ffff25 468px,#fff500 476px,#ffe000 495px,#ffff0a 507px,#ffff3a 514px,#ffff1f 530px,#fff300 546px,#ff8300 561px,#ff7400 567px,#ffb300 580px,#fffd00 587px,#ffff87 594px,#ffff7b 609px,#fff800 627px,#ff6900 645px,#f40000 654px,#e10000 662px,#ff0e00 670px,#ff6a00 678px,#ff6900 684px,#ff0a00 696px)"></i>
<i style="left:287.4px;background:linear-gradient(#ff5a00 -0px,#ff5a00 9px,#f00000 13px,#400000 20px,#360000 29px,#680000 54px,#250000 67px,#0b0000 87px,#1c0000 103px,#ff0200 137px,#9c0000 150px,#a20000 156px,#ff0d00 169px,#ff5200 179px,#f60000 185px,#600000 199px,#ff0900 246px,#ff5600 268px,#f80000 283px,#be0000 308px,#e00000 337px,#ff1200 355px,#ff2b00 365px,#ef0000 384px,#b80000 410px,#ca0000 431px,#ff0d00 443px,#ff3600 451px,#ff3b00 467px,#f50000 481px,#a00000 495px,#600000 514px,#dd0000 530px,#ff0500 534px,#de0000 566px,#6c0000 583px,#4b0000 594px,#fe0000 605px,#ff3100 608px,#f00000 634px,#aa0000 657px,#4f0000 669px,#2d0000 677px,#c40000 688px,#c40000 696px)"></i>
<i style="left:288.4px;background:linear-gradient(#0b0000 -0px,#0b0000 696px)"></i>
<i style="left:289.4px;background:linear-gradient(#0b0000 -0px,#0b0000 696px)"></i>
<i style="left:290.4px;background:linear-gradient(#0b0000 -0px,#0b0000 696px)"></i>
<i style="left:291.4px;background:linear-gradient(#4d0000 -0px,#0b0000 6px,#120000 10px,#950000 18px,#f00000 20px,#ffb300 25px,#fff400 27px,#ffff90 31px,#ffff8d 34px,#ffff54 36px,#fffd00 38px,#ff0000 45px,#4f0000 49px,#120000 53px,#400000 57px,#9c0000 63px,#ee0000 65px,#ff5d00 68px,#ffd200 72px,#ffee00 77px,#ffbf00 82px,#ff2600 87px,#ff0200 88px,#610000 92px,#120000 97px,#450000 101px,#de0000 110px,#ff0b00 112px,#ff4500 117px,#ff3700 122px,#fa0000 126px,#640000 132px,#0f0000 138px,#450000 149px,#270000 161px,#0b0000 178px,#af0000 210px,#8e0000 230px,#740000 240px,#d70000 255px,#ff0e00 260px,#ff9900 276px,#ffd400 295px,#ffd800 316px,#ff6e00 359px,#ff0500 400px,#950000 431px,#290000 445px,#0c0000 449px,#280000 462px,#ff0900 480px,#ffcf00 500px,#ffa500 507px,#f70000 520px,#0c0000 534px,#290000 542px,#8b0000 549px,#c00000 569px,#8c0000 578px,#540000 595px,#0f0000 608px,#830000 619px,#ff0b00 628px,#ff4e00 634px,#ff2100 641px,#e90000 645px,#5e0000 653px,#0b0000 691px,#560000 695px,#710000 696px)"></i>
<i style="left:292.4px;background:linear-gradient(#0b0000 -0px,#210000 2px,#f20000 7px,#ff7200 10px,#fff900 13px,#ffffbe 17px,#ffffd2 18px,#ffff5c 23px,#fff800 26px,#ff5300 32px,#ff0600 36px,#5a0000 44px,#9f0000 48px,#f90000 51px,#fff800 58px,#ffff85 63px,#fff400 68px,#ff8000 73px,#f60000 82px,#af0000 87px,#fe0000 93px,#ffce00 103px,#ffe900 109px,#fd0000 123px,#0b0000 138px,#0d0000 151px,#670000 159px,#710000 168px,#200000 177px,#110000 180px,#340000 196px,#ff0300 210px,#fffe00 226px,#ffffdc 237px,#ffffff 241px,#fffff5 314px,#ffffdf 339px,#fffffb 364px,#ffff06 396px,#ffc800 424px,#ffdf00 442px,#fff800 448px,#ff0100 469px,#550000 490px,#3e0000 498px,#720000 506px,#ff0500 519px,#ff7c00 533px,#f60000 544px,#530000 562px,#600000 570px,#8a0000 577px,#750000 597px,#6a0000 610px,#d80000 632px,#ff0c00 637px,#ffc600 652px,#ff6100 659px,#ff0600 663px,#3f0000 670px,#0b0000 692px,#0b0000 696px)"></i>
<i style="left:293.4px;background:linear-gradient(#ffffa1 -0px,#ffffe1 1px,#ffffff 2px,#fffff7 10px,#ffff31 18px,#fff500 19px,#ff1a00 25px,#fa0000 26px,#ce0000 29px,#d90000 34px,#ff0500 36px,#fff800 43px,#ffff59 45px,#fffff6 53px,#ffffdd 55px,#fffa00 65px,#ffda00 69px,#fff600 78px,#ffff28 81px,#ffffd4 87px,#fffffd 97px,#ffff8e 102px,#fff900 108px,#fd0000 123px,#dd0000 125px,#ff0c00 132px,#ffb100 144px,#ffcd00 151px,#ff0400 164px,#ff2200 173px,#ff7900 180px,#ffff06 187px,#ffffe9 195px,#ffffff 201px,#fffffa 240px,#fff500 258px,#ff7800 270px,#ff4400 289px,#ff6b00 311px,#ffff05 336px,#fffffa 364px,#fff800 389px,#f70000 426px,#650000 448px,#f60000 475px,#ff1b00 495px,#e90000 500px,#770000 517px,#610000 533px,#fd0000 548px,#ff3200 563px,#f70000 569px,#910000 587px,#7a0000 603px,#6c0000 609px,#ff0600 631px,#ff8000 652px,#ffff00 664px,#ffff57 670px,#fffd00 673px,#ff0800 681px,#200000 687px,#0b0000 689px,#0b0000 696px)"></i>
<i style="left:294.4px;background:linear-gradient(#ffffff -0px,#ffffff 1px,#ffffe2 2px,#ffff08 6px,#fd0000 13px,#980000 17px,#9d0000 19px,#fe0000 24px,#ff6f00 29px,#ffff06 39px,#fffff7 53px,#ffffd6 55px,#ffff81 60px,#ffff77 65px,#ffff76 70px,#ffff7f 74px,#ffffe8 86px,#ffffff 97px,#ffff5f 105px,#ffff38 111px,#ffff5d 117px,#ffffe5 124px,#ffffff 125px,#fffff4 138px,#ffff88 145px,#ffff73 152px,#ffffb3 159px,#ffffff 164px,#fffff4 200px,#ffff6d 214px,#fffa00 222px,#ff0900 242px,#640000 268px,#930000 293px,#620000 358px,#a20000 389px,#c90000 419px,#900000 440px,#620000 450px,#6b0000 497px,#920000 516px,#6a0000 535px,#ff0000 564px,#ff1d00 576px,#f30000 589px,#c90000 604px,#cb0000 622px,#ff0600 631px,#ffb000 655px,#ffff0a 668px,#fffffa 687px,#ffffe1 688px,#ffff2c 691px,#fff400 692px,#ff5000 696px)"></i>
<i style="left:295.4px;background:linear-gradient(#980000 -0px,#620000 2px,#6b0000 10px,#ff0000 18px,#ffa000 29px,#fff200 38px,#ffff0a 54px,#ffffc0 66px,#ffffff 74px,#fffff3 181px,#ffff78 194px,#ffff05 204px,#f50000 245px,#620000 269px,#ca0000 373px,#cb0000 446px,#620000 497px,#6a0000 535px,#ff0d00 564px,#ff7d00 585px,#ff4100 598px,#f20000 605px,#ce0000 608px,#f70000 632px,#ff1d00 640px,#ff8600 650px,#ffcb00 657px,#ffff09 665px,#ffffff 688px,#ffffff 696px)"></i>
<i style="left:296.4px;background:linear-gradient(#8d0000 -0px,#ff0900 15px,#ff6d00 28px,#ff9600 37px,#ffff00 44px,#fffff3 53px,#ffffff 107px,#fffffa 179px,#fffc00 205px,#ff5f00 227px,#f40000 238px,#7e0000 258px,#660000 271px,#e60000 394px,#cd0000 426px,#b70000 465px,#620000 532px,#ff0d00 564px,#fff600 608px,#ff3800 621px,#f60000 628px,#ff2e00 653px,#ffc800 665px,#fffd00 668px,#ffff4b 671px,#ffffff 688px,#ffffff 696px)"></i>
<i style="left:297.4px;background:linear-gradient(#cd0000 -0px,#da0000 11px,#ff0900 18px,#ff7300 27px,#fff800 33px,#ffff94 40px,#ffffe7 48px,#ffffff 59px,#fffffa 179px,#ffffa5 187px,#ffff02 193px,#ff1f00 209px,#f30000 213px,#940000 226px,#680000 273px,#b60000 302px,#ff0c00 318px,#ff9800 349px,#ffff09 411px,#ffd400 442px,#ff2e00 467px,#f70000 475px,#b10000 494px,#880000 503px,#6c0000 535px,#ff0900 558px,#ffe600 603px,#fff900 609px,#ffa900 629px,#ff4300 638px,#ff1500 648px,#ff4400 661px,#ff5e00 671px,#fffd00 680px,#ffffec 687px,#ffffff 689px,#ffffff 696px)"></i>
<i style="left:298.4px;background:linear-gradient(#cd0000 -0px,#cd0000 9px,#ff1100 12px,#fffa00 22px,#ffff7b 28px,#ffffe9 39px,#ffffff 50px,#fffff3 157px,#ffff54 166px,#fff500 170px,#ff0a00 182px,#c10000 188px,#8d0000 241px,#ff0500 255px,#ffff0b 280px,#ffffad 296px,#ffffff 312px,#fffff3 453px,#ffffac 474px,#ffff02 489px,#ffb300 502px,#fa0000 521px,#650000 534px,#ff0900 558px,#ffce00 589px,#fff900 609px,#ff5b00 649px,#ff2a00 656px,#ff3900 667px,#ff6100 674px,#ff8800 688px,#ffff0b 695px,#ffff26 696px)"></i>
<i style="left:299.4px;background:linear-gradient(#ff4a00 -0px,#ffff0b 10px,#ffffc6 21px,#ffffff 27px,#fffff4 128px,#fffff5 136px,#ffffed 140px,#ffffbf 144px,#ffff0c 149px,#ff4300 158px,#f50000 165px,#cd0000 175px,#bd0000 201px,#ff0c00 215px,#ffcc00 234px,#ffff0b 238px,#ffff4d 242px,#ffffd9 259px,#ffffff 271px,#fffff3 474px,#ffff93 498px,#ffff0e 521px,#fff900 534px,#ff5a00 551px,#ff2b00 563px,#ffff07 595px,#ffff80 608px,#fff700 619px,#ff9e00 633px,#ff0400 672px,#ff4900 683px,#ff7f00 689px,#ff7f00 696px)"></i>
<i style="left:300.4px;background:linear-gradient(#ffff68 -0px,#ffffff 10px,#ffffff 103px,#ffff68 110px,#ffff20 117px,#ffed00 122px,#ff4c00 137px,#ff0000 141px,#cd0000 145px,#d80000 183px,#ff0d00 193px,#ff3f00 197px,#fffb00 211px,#ffffc1 227px,#ffffff 237px,#fffff7 510px,#ffff59 531px,#ffff0f 542px,#ffff2b 563px,#fff900 568px,#ffcc00 583px,#fff000 592px,#ffff1c 597px,#ffff83 608px,#fff800 627px,#ff5500 652px,#f10000 678px,#d20000 688px,#ff0900 693px,#ff2900 696px)"></i>
<i style="left:301.4px;background:linear-gradient(#ffffff -0px,#fffff7 82px,#ffff54 88px,#ffff07 90px,#ff3e00 98px,#fa0000 103px,#f60000 114px,#cd0000 121px,#d50000 164px,#ff0700 168px,#ffff0b 183px,#fffffb 195px,#fffff6 535px,#ffffb4 544px,#ffff57 557px,#ffff48 573px,#ffff5b 589px,#ffff57 600px,#ffff84 608px,#fff800 627px,#ff4e00 658px,#f90000 676px,#cd0000 692px,#cd0000 696px)"></i>
<i style="left:302.4px;background:linear-gradient(#ffffff -0px,#fffff5 63px,#ffffaf 68px,#ffff0a 72px,#fe0000 82px,#cd0000 89px,#c70000 135px,#e40000 144px,#ff0f00 146px,#fff400 157px,#ffff69 161px,#ffffb6 164px,#fffffc 172px,#fffff5 451px,#ffffba 477px,#ffffdf 501px,#ffffff 513px,#fffff6 535px,#ffff3d 567px,#ffff33 581px,#ffff6d 592px,#ffff7f 612px,#ffff55 623px,#fff200 633px,#ffa900 643px,#f50000 678px,#cd0000 691px,#cd0000 696px)"></i>
<i style="left:303.4px;background:linear-gradient(#ffffff -0px,#fffffb 49px,#ffff0c 55px,#ff1500 64px,#ec0000 66px,#cd0000 69px,#c40000 94px,#900000 112px,#aa0000 120px,#fe0000 125px,#ffff0b 136px,#ffff98 140px,#fffffe 144px,#fffff3 371px,#ffffdc 412px,#ffffff 442px,#ffffe3 454px,#ffff4d 510px,#ffffad 531px,#ffffcc 542px,#fffa00 577px,#ffc900 592px,#ffff08 604px,#ffff7d 613px,#ffff47 639px,#fffa00 645px,#ff5f00 658px,#f20000 680px,#cd0000 691px,#cd0000 696px)"></i>
<i style="left:304.4px;background:linear-gradient(#ffffff -0px,#ffffff 31px,#ffff48 38px,#ffff04 40px,#fd0000 49px,#cd0000 55px,#bd0000 77px,#640000 96px,#8e0000 104px,#ff0300 112px,#ffb900 121px,#ffff04 126px,#ffffff 138px,#fffff2 283px,#ffff32 374px,#ffff27 432px,#ffff37 452px,#ffff0e 475px,#ffff2a 502px,#ffff46 510px,#fff700 538px,#ffff15 551px,#ffff29 569px,#fff600 578px,#ff8300 609px,#ffa000 615px,#ffff09 626px,#ffff5a 634px,#ffff31 657px,#fffb00 660px,#ff0700 676px,#cd0000 691px,#cd0000 696px)"></i>
<i style="left:305.4px;background:linear-gradient(#ffffff -0px,#fffff3 16px,#ffff8b 23px,#ffff09 28px,#ffab00 33px,#f30000 50px,#cc0000 55px,#a00000 70px,#620000 88px,#690000 98px,#ff0a00 109px,#ffff04 126px,#ffffb7 133px,#ffffff 138px,#fffff5 271px,#fff600 333px,#ff9500 372px,#ff8b00 423px,#ff9800 462px,#ff4a00 507px,#ff8b00 527px,#ffdf00 542px,#ffc700 565px,#ffb900 593px,#ff8500 609px,#ffb600 629px,#ffce00 638px,#ffff08 646px,#ffff38 654px,#ffff0f 675px,#ffb300 680px,#fe0000 689px,#cd0000 692px,#cd0000 696px)"></i>
<i style="left:306.4px;background:linear-gradient(#ffffff -0px,#fffff9 10px,#fff700 26px,#fd0000 49px,#a70000 55px,#620000 70px,#690000 98px,#b20000 103px,#f90000 105px,#fff800 114px,#ffffc2 122px,#ffffff 127px,#fffff8 269px,#fff700 310px,#f90000 364px,#f20000 442px,#ff3000 490px,#f30000 523px,#cd0000 538px,#de0000 543px,#ff0f00 549px,#ff7700 570px,#ff9600 596px,#ff8800 610px,#fff000 641px,#ffe100 657px,#ffff13 668px,#fff900 692px,#ffae00 696px)"></i>
<i style="left:307.4px;background:linear-gradient(#ffffff -0px,#fffff7 10px,#fff700 26px,#ff5a00 38px,#f80000 43px,#780000 51px,#620000 57px,#650000 78px,#ad0000 83px,#f90000 86px,#fff300 96px,#ffff3b 98px,#ffffff 103px,#fffff4 269px,#fff900 303px,#f70000 355px,#cd0000 367px,#d80000 490px,#e70000 520px,#cd0000 545px,#d90000 571px,#ff0800 584px,#ff3300 601px,#ff6d00 610px,#ffa200 617px,#ffff0c 644px,#ffff50 658px,#fff500 674px,#ffff00 696px)"></i>
<i style="left:308.4px;background:linear-gradient(#ffffff -0px,#fffff7 10px,#ffff1d 22px,#fff800 23px,#ff1800 33px,#e80000 36px,#800000 47px,#620000 57px,#770000 59px,#f80000 64px,#ffee00 73px,#ffff0f 74px,#ffffa8 78px,#ffffff 82px,#fffff6 253px,#ffff6f 270px,#fffc00 280px,#ff5b00 310px,#f70000 344px,#cd0000 371px,#cc0000 608px,#c80000 614px,#ff0800 621px,#ffd700 635px,#ffff06 643px,#ffffb6 675px,#ffff38 688px,#ffff00 692px,#ffff00 696px)"></i>
<i style="left:309.4px;background:linear-gradient(#ffffff -0px,#ffffff 5px,#ffff7a 10px,#fffc00 13px,#ff2e00 22px,#f90000 26px,#860000 39px,#9b0000 41px,#fa0000 45px,#ffb600 51px,#ffff06 53px,#ffffe5 58px,#ffffff 65px,#fffff9 205px,#fffc00 230px,#ff7d00 254px,#ff9c00 274px,#ff7600 320px,#ff4b00 361px,#ff8f00 403px,#ff9200 429px,#ff4000 448px,#f60000 457px,#d00000 464px,#c10000 539px,#ca0000 564px,#c20000 612px,#960000 634px,#e40000 640px,#ff1f00 643px,#ffff0a 653px,#ffff5a 658px,#ffffff 689px,#ffffea 693px,#ffffbb 696px)"></i>
<i style="left:310.4px;background:linear-gradient(#ffe500 -0px,#ff6e00 7px,#f20000 16px,#b10000 23px,#ff0a00 31px,#ffac00 38px,#ffe800 40px,#ffff12 43px,#ffffff 54px,#fffff7 73px,#ffff7b 79px,#ffff53 85px,#ffff7b 91px,#ffffff 98px,#fffff3 121px,#ffffb7 127px,#ffffc5 133px,#ffffff 139px,#fffff6 166px,#ffff89 179px,#fffa00 190px,#ff6700 210px,#ff4f00 230px,#ff9500 249px,#ffff00 269px,#ffff33 292px,#ffffbb 338px,#ffffff 369px,#fffff4 411px,#ffffda 434px,#fffff9 448px,#ffff4e 463px,#fff800 468px,#ff5500 485px,#fa0000 502px,#cd0000 510px,#bf0000 540px,#840000 567px,#cd0000 595px,#b80000 616px,#680000 653px,#ba0000 658px,#ff0a00 661px,#ffff00 669px,#ffff57 671px,#ffffb9 675px,#ffffff 690px,#ffffff 696px)"></i>
<i style="left:311.4px;background:linear-gradient(#d90000 -0px,#9c0000 6px,#a30000 20px,#e90000 29px,#ff1800 33px,#ffbb00 46px,#ffff01 53px,#ffff04 58px,#ff3e00 66px,#f60000 71px,#f50000 74px,#ffff04 98px,#ffff04 103px,#ff6500 111px,#ff2b00 119px,#ff6500 125px,#ffff04 138px,#ffff04 144px,#ff3400 157px,#fa0000 163px,#ee0000 171px,#ff1e00 179px,#ee0000 185px,#8a0000 202px,#b90000 220px,#ff0e00 240px,#ff8800 272px,#ff8f00 289px,#ff7900 313px,#ffcf00 349px,#fffb00 365px,#ffa100 395px,#ffb200 416px,#ffff04 433px,#fff200 452px,#ff7200 474px,#f70000 493px,#d70000 501px,#db0000 512px,#da0000 527px,#9b0000 535px,#620000 567px,#3b0000 589px,#a70000 612px,#5f0000 641px,#340000 671px,#7f0000 675px,#ff0b00 679px,#ffbd00 684px,#ffff04 688px,#ffff04 696px)"></i>
<i style="left:312.4px;background:linear-gradient(#0b0000 -0px,#0b0000 696px)"></i>
<i style="left:313.4px;background:linear-gradient(#0b0000 -0px,#0b0000 696px)"></i>
<i style="left:314.4px;background:linear-gradient(#940000 -0px,#100000 10px,#ff0c00 32px,#ff7e00 42px,#fb0000 47px,#200000 53px,#100000 54px,#ff0c00 76px,#ff6800 84px,#ff0900 90px,#980000 94px,#210000 97px,#110000 98px,#860000 108px,#6f0000 115px,#0b0000 122px,#1b0000 135px,#130000 140px,#5c0000 164px,#260000 181px,#ff0c00 224px,#ff3e00 234px,#f40000 245px,#0d0000 268px,#4c0000 289px,#2f0000 322px,#0b0000 354px,#280000 378px,#710000 416px,#480000 437px,#130000 448px,#fc0000 464px,#ff6700 478px,#ff4c00 483px,#fd0000 492px,#340000 524px,#0d0000 533px,#820000 538px,#f80000 543px,#ffa700 552px,#ff6400 564px,#ff0200 570px,#720000 580px,#110000 608px,#ba0000 622px,#ff0b00 646px,#da0000 650px,#3e0000 659px,#0c0000 687px,#4a0000 689px,#f40000 693px,#ff7500 696px)"></i>
<i style="left:315.4px;background:linear-gradient(#0b0000 -0px,#120000 10px,#ff0700 26px,#ff1200 29px,#f20000 32px,#650000 39px,#0b0000 42px,#120000 54px,#dd0000 68px,#ff0e00 72px,#ff2c00 77px,#ff0200 81px,#be0000 84px,#8c0000 89px,#0f0000 98px,#190000 105px,#110000 107px,#9d0000 114px,#d30000 121px,#ba0000 127px,#0d0000 138px,#310000 149px,#960000 156px,#a80000 164px,#640000 173px,#0e0000 179px,#aa0000 201px,#920000 216px,#2f0000 235px,#2f0000 256px,#0b0000 273px,#160000 365px,#c10000 393px,#ea0000 413px,#b30000 430px,#2d0000 445px,#0d0000 448px,#9d0000 480px,#ff0200 487px,#ff3900 495px,#ff2d00 506px,#fd0000 512px,#6b0000 521px,#0c0000 534px,#3b0000 552px,#f60000 561px,#ff9f00 574px,#ff7100 580px,#f60000 587px,#360000 599px,#0e0000 609px,#370000 622px,#f00000 635px,#ff2d00 639px,#ff6100 646px,#ff8e00 658px,#ff0800 665px,#330000 673px,#0b0000 693px,#0b0000 696px)"></i>
<i style="left:316.4px;background:linear-gradient(#0b0000 -0px,#120000 10px,#5a0000 16px,#520000 22px,#0b0000 28px,#0b0000 53px,#260000 54px,#de0000 58px,#ff0300 59px,#ff7d00 64px,#ffae00 70px,#f60000 82px,#9b0000 88px,#bd0000 91px,#fd0000 94px,#ffd800 103px,#ffff11 107px,#ffd800 110px,#fd0000 123px,#bc0000 127px,#ff0300 133px,#ffcc00 144px,#ffed00 149px,#f70000 164px,#0d0000 179px,#370000 195px,#af0000 217px,#b40000 233px,#580000 256px,#0d0000 269px,#660000 290px,#d50000 304px,#ff1100 309px,#fff900 333px,#ffffb8 354px,#fffffc 365px,#ffff6a 411px,#ffff7b 429px,#ffffdb 444px,#fffff9 447px,#ffffc0 450px,#ffff04 458px,#ff1600 477px,#e00000 483px,#be0000 489px,#ff0d00 507px,#ff5b00 521px,#fe0000 530px,#410000 544px,#2e0000 547px,#800000 575px,#fa0000 585px,#ff1e00 595px,#fb0000 599px,#5e0000 609px,#220000 617px,#5f0000 639px,#a90000 645px,#ff0400 650px,#ff8c00 658px,#ffc800 673px,#ff0d00 680px,#8a0000 684px,#1e0000 687px,#0b0000 689px,#0b0000 696px)"></i>
<i style="left:317.4px;background:linear-gradient(#0b0000 -0px,#0b0000 38px,#ab0000 43px,#fc0000 45px,#fff500 50px,#ffffd8 53px,#fffff4 54px,#fffa00 65px,#ff9a00 72px,#ffd400 79px,#ffff0c 82px,#ffffff 89px,#fffff2 98px,#ffff04 108px,#ffff04 116px,#ffff6b 122px,#ffffff 127px,#fffff3 138px,#fffe00 148px,#f70000 164px,#cc0000 169px,#ca0000 179px,#ff0a00 185px,#ff5600 197px,#ff6400 216px,#ff3500 228px,#f00000 237px,#c00000 244px,#ff0900 257px,#ff7200 269px,#ffff04 280px,#ffffbf 294px,#ffffff 303px,#fffff4 458px,#ffffa0 476px,#ffff1f 489px,#ffed00 492px,#ff6b00 506px,#ff4300 519px,#ff8200 538px,#ff6900 547px,#fc0000 554px,#7d0000 566px,#6d0000 571px,#bd0000 597px,#ce0000 607px,#bf0000 618px,#4b0000 634px,#8a0000 656px,#bc0000 660px,#ff0d00 664px,#ffc500 673px,#fffd00 687px,#ffc900 689px,#ff1500 694px,#cb0000 696px)"></i>
<i style="left:318.4px;background:linear-gradient(#0b0000 -0px,#0e0000 24px,#920000 30px,#e70000 32px,#ff1800 33px,#ffdc00 37px,#ffff17 38px,#ffff78 41px,#ffffd5 46px,#fffffe 53px,#ffff97 60px,#ffff99 65px,#ffffdf 70px,#ffffff 73px,#fffff9 98px,#ffffe1 103px,#ffffff 110px,#fffff3 138px,#ffff43 146px,#fffc00 151px,#ffbb00 168px,#fff100 176px,#ffff49 185px,#ffff5b 193px,#fff800 202px,#ffd100 209px,#ffff07 225px,#ffffb4 239px,#ffffff 244px,#fffff8 490px,#ffff6c 505px,#fffd00 513px,#ff9900 523px,#ff8200 535px,#ff9f00 559px,#ff5900 570px,#f70000 576px,#c10000 581px,#a10000 591px,#cd0000 614px,#c40000 635px,#740000 651px,#b30000 673px,#ff0800 677px,#ffff00 688px,#ffff00 696px)"></i>
<i style="left:319.4px;background:linear-gradient(#0b0000 -0px,#170000 13px,#370000 16px,#e30000 20px,#ff1200 21px,#ffbe00 25px,#fff800 27px,#ffff81 31px,#ffffea 41px,#ffffff 51px,#fffffd 137px,#ffffbc 139px,#ffff0d 144px,#ffa700 152px,#ffaa00 159px,#ffff0d 165px,#fffff6 178px,#ffffb4 191px,#ffffd4 202px,#ffffff 209px,#ffffff 520px,#fff800 536px,#ff9600 547px,#ffc600 579px,#ff4700 591px,#f20000 596px,#cd0000 599px,#c20000 652px,#9b0000 667px,#d80000 688px,#ff0400 690px,#ff8900 696px)"></i>
<i style="left:320.4px;background:linear-gradient(#0b0000 -0px,#140000 3px,#f20000 9px,#ffe900 15px,#ffff35 17px,#ffffd9 27px,#ffffff 32px,#fffff3 108px,#ffffb7 117px,#ffff0b 124px,#ff3e00 133px,#f30000 136px,#d20000 138px,#ff0d00 143px,#ffff03 164px,#ffffff 179px,#fffff3 542px,#ffffd5 547px,#ffff06 559px,#ffbe00 570px,#ffef00 598px,#ff2800 611px,#f50000 614px,#cd0000 618px,#c00000 670px,#c90000 686px,#cd0000 696px)"></i>
<i style="left:321.4px;background:linear-gradient(#ff9700 -0px,#ffff05 3px,#fffff9 16px,#fffff8 31px,#ffffaa 39px,#ffffb7 44px,#fffffe 53px,#fffff9 89px,#fffc00 106px,#ff0d00 118px,#cd0000 129px,#d30000 138px,#ff0d00 143px,#ffff03 164px,#ffffff 179px,#fffff5 451px,#ffffe1 476px,#ffffff 497px,#fffff4 559px,#ffffa7 570px,#ffff11 579px,#ffea00 586px,#fff400 601px,#fff400 613px,#ffdd00 617px,#ff0d00 629px,#cd0000 635px,#cd0000 696px)"></i>
<i style="left:322.4px;background:linear-gradient(#ffffca -0px,#ffffff 3px,#ffffff 16px,#ffff4e 25px,#ffff35 27px,#ffff5b 31px,#ffffe5 39px,#ffffff 44px,#fffff4 73px,#ffff6d 85px,#fff400 91px,#ff0300 103px,#cd0000 108px,#d30000 138px,#ff0d00 143px,#fff600 162px,#ffffc2 172px,#ffffff 179px,#fffff5 450px,#ffff87 492px,#ffffca 512px,#ffffff 522px,#fffff9 579px,#ffff7b 591px,#ffff05 599px,#fff100 625px,#ffb200 634px,#ff3200 641px,#f50000 646px,#cd0000 651px,#cd0000 696px)"></i>
<i style="left:323.4px;background:linear-gradient(#ffffff -0px,#fffff7 3px,#ffff12 10px,#ffdb00 13px,#fffb00 17px,#ffffd7 25px,#ffffff 27px,#fffff4 60px,#ffff9c 71px,#fff700 79px,#ff8700 84px,#ff0600 89px,#cd0000 98px,#cd0000 137px,#fe0000 139px,#ffef00 148px,#ffff25 150px,#ffffca 157px,#ffffff 161px,#fffffb 448px,#ffff6f 467px,#ffff47 484px,#ffff63 500px,#ffff2d 521px,#ffff9a 536px,#ffffff 547px,#fffff4 599px,#ffff00 617px,#fff200 640px,#ff8900 650px,#ff2200 655px,#f20000 660px,#cd0000 668px,#cd0000 696px)"></i>
<i style="left:324.4px;background:linear-gradient(#ffca00 -0px,#ffcf00 3px,#fffb00 5px,#ffffff 13px,#fffff6 55px,#ffff98 63px,#ffff73 65px,#ffef00 68px,#ff5d00 73px,#ff0100 78px,#cd0000 83px,#cf0000 117px,#ff0800 121px,#ffc800 130px,#ffff00 132px,#ffffe8 137px,#ffffff 139px,#fffff3 373px,#fffffb 448px,#fffb00 479px,#ff9600 499px,#ffc800 517px,#ffff09 526px,#ffff02 547px,#ffffdd 564px,#ffffff 571px,#fffff4 611px,#ffffdb 617px,#ffff08 633px,#fff700 655px,#ff5100 666px,#fb0000 670px,#cd0000 682px,#cd0000 696px)"></i>
<i style="left:325.4px;background:linear-gradient(#ffffff -0px,#ffffff 49px,#ffffef 50px,#fffa00 55px,#ff0600 63px,#cd0000 66px,#d90000 102px,#ff1200 108px,#ff5600 112px,#fff900 117px,#ffffb6 125px,#ffffff 132px,#fffff3 308px,#ffff55 354px,#ffff34 369px,#fff600 386px,#ffc300 421px,#fff900 439px,#ffff9d 459px,#fffb00 479px,#f60000 526px,#ff1700 533px,#ffde00 552px,#ffd600 564px,#ffff08 571px,#ffffe8 584px,#ffffff 596px,#ffffed 613px,#ffff9b 635px,#ffff00 650px,#fff700 670px,#ff0700 682px,#d30000 685px,#cd0000 696px)"></i>
<i style="left:326.4px;background:linear-gradient(#ffffff -0px,#fffff3 35px,#fffa00 42px,#ff1000 49px,#d10000 53px,#bf0000 92px,#dd0000 94px,#ff1700 96px,#fff000 103px,#ffff37 105px,#fffff0 111px,#ffffff 116px,#fffffd 255px,#fffe00 273px,#ff1500 303px,#ec0000 314px,#cd0000 345px,#d90000 408px,#ee0000 434px,#ce0000 455px,#dd0000 461px,#ff1100 467px,#ff8400 487px,#ff9200 498px,#f60000 526px,#d00000 535px,#ff0600 553px,#ffa000 570px,#ffb400 577px,#ffaf00 584px,#ffff08 592px,#fffffa 603px,#ffffe4 616px,#ffff6d 651px,#ffff02 665px,#fffe00 684px,#f60000 696px)"></i>
<i style="left:327.4px;background:linear-gradient(#ffffff -0px,#fffff5 21px,#ffff78 27px,#fffa00 31px,#ff4a00 38px,#fb0000 43px,#cd0000 50px,#be0000 60px,#960000 75px,#ff0400 81px,#ffff08 90px,#ffffa6 93px,#ffffff 98px,#fffff9 216px,#ffff38 232px,#fffb00 236px,#ff0500 257px,#cd0000 270px,#d80000 453px,#ed0000 481px,#d40000 498px,#ff0600 511px,#f10000 527px,#cd0000 537px,#ff0d00 561px,#ff3e00 576px,#ff8f00 591px,#ff8900 603px,#ffff05 611px,#ffffd4 621px,#ffff33 668px,#ffff00 682px,#ffff00 696px)"></i>
<i style="left:328.4px;background:linear-gradient(#ffffff -0px,#fffff7 11px,#ffffa2 17px,#ffff52 20px,#ffff1a 21px,#ffee00 22px,#ff2c00 29px,#f00000 32px,#cd0000 35px,#be0000 46px,#6d0000 57px,#910000 63px,#ff0100 70px,#ff9a00 77px,#fff200 83px,#ffffbf 91px,#fffffd 97px,#fffff6 188px,#ffff9b 201px,#fff300 214px,#ff3c00 236px,#f70000 250px,#ed0000 261px,#ff1f00 288px,#ff0d00 328px,#d20000 361px,#ff0a00 397px,#f10000 424px,#cd0000 439px,#f50000 467px,#ff3000 501px,#f20000 520px,#cf0000 529px,#d70000 565px,#ff1000 576px,#ff4e00 587px,#ff9200 618px,#ffa500 622px,#ffff0c 629px,#ffff9e 638px,#ffff00 690px,#ffff00 696px)"></i>
<i style="left:329.4px;background:linear-gradient(#ffffff -0px,#ffffff 6px,#fff400 11px,#ff0100 18px,#cd0000 20px,#ce0000 37px,#660000 54px,#fa0000 65px,#fff900 73px,#ffffd3 80px,#ffffff 83px,#fffff5 180px,#ffffb9 186px,#ffff00 195px,#ff4300 214px,#ff2600 231px,#ff6300 254px,#ffd000 270px,#ffff09 303px,#ffef00 339px,#ffb800 367px,#ffd100 432px,#ffa200 450px,#ff1400 478px,#ff6d00 528px,#f20000 546px,#cd0000 554px,#d70000 585px,#ff1300 593px,#ff7700 604px,#ffb100 633px,#ffbd00 639px,#ffff01 645px,#ffff6b 654px,#ffff00 691px,#ffff00 696px)"></i>
<i style="left:330.4px;background:linear-gradient(#ffa700 -0px,#f40000 5px,#d10000 6px,#d90000 14px,#ff0a00 21px,#ff0800 28px,#760000 49px,#9d0000 51px,#ff0c00 54px,#ffff03 60px,#ffffed 65px,#ffffff 68px,#fffffa 160px,#ffff69 170px,#ffff02 175px,#ff6600 187px,#ff1c00 205px,#ff2700 218px,#ffff02 245px,#ffffa3 256px,#fffffe 268px,#ffffce 306px,#ffffc5 421px,#ffffd0 439px,#ffffaa 450px,#fffc00 470px,#ff6400 502px,#ff5d00 517px,#ff7900 536px,#ff4300 554px,#f30000 566px,#cd0000 578px,#d70000 604px,#ff0a00 610px,#ff9e00 631px,#ffcd00 636px,#ffd300 655px,#ffff0d 662px,#ffff38 670px,#ffff00 692px,#ffff00 696px)"></i>
<i style="left:331.4px;background:linear-gradient(#d40000 -0px,#ff0b00 4px,#ff6400 12px,#ff0000 28px,#b90000 35px,#ff0500 39px,#ff9a00 44px,#ffff12 47px,#ffffbf 50px,#ffffff 54px,#fffff3 142px,#ffff93 152px,#fff800 161px,#f60000 179px,#e00000 187px,#ff1200 198px,#ffc100 224px,#ffff0b 237px,#ffffff 269px,#ffffef 317px,#ffffba 377px,#ffffe9 427px,#fffffe 441px,#fffff1 466px,#ffff9d 481px,#fff800 494px,#ffb700 505px,#ff7c00 528px,#ff6800 539px,#ff0800 578px,#cd0000 599px,#ae0000 620px,#f40000 635px,#ff9a00 646px,#fff500 651px,#ffe900 667px,#ffff05 686px,#ffff00 696px)"></i>
<i style="left:332.4px;background:linear-gradient(#ff7f00 -0px,#ff7500 11px,#ff4400 15px,#f50000 20px,#ff0600 26px,#ffc800 35px,#ffff0a 42px,#ffffff 54px,#fffffd 78px,#ffff9d 83px,#ffff83 89px,#ffffc7 95px,#ffffff 98px,#fffffa 127px,#ffffdc 133px,#fffff9 138px,#ffff34 151px,#fffa00 154px,#ff4a00 161px,#fc0000 166px,#c70000 174px,#ff0b00 190px,#fffc00 238px,#ffffb1 260px,#fffffe 268px,#ffff8b 317px,#ffff43 369px,#ffff2d 426px,#ffff18 436px,#ffff39 449px,#ffff2e 463px,#ffff79 476px,#ffffff 490px,#fffff1 499px,#ffff51 513px,#fffd00 518px,#ff8c00 528px,#ff0400 561px,#ff0b00 582px,#d10000 612px,#870000 639px,#b10000 651px,#ff0a00 655px,#ffff0a 665px,#ffff2f 666px,#ffff31 673px,#fffe00 686px,#ffff00 696px)"></i>
<i style="left:333.4px;background:linear-gradient(#ff7800 -0px,#f30000 10px,#da0000 13px,#ff0500 18px,#ff5300 31px,#fffa00 42px,#ffffff 54px,#ffffff 61px,#ffff0f 67px,#ffad00 72px,#ff8000 78px,#fffa00 86px,#ffffff 98px,#fffff8 107px,#ffff52 112px,#fffe00 116px,#ffe100 123px,#fff900 127px,#ffff75 132px,#ffff11 137px,#ffca00 139px,#ff0f00 145px,#b20000 149px,#600000 154px,#ff0b00 190px,#ff7300 225px,#ffff0c 246px,#fffffe 268px,#fffff3 303px,#ffffb0 321px,#ffffc8 345px,#fffff7 365px,#ffffa1 389px,#ffffb5 408px,#ffffed 420px,#ffffde 439px,#ffffb7 448px,#fffc00 460px,#ff4100 481px,#ff2c00 490px,#ffab00 504px,#fffe00 510px,#ffffff 520px,#fffffd 527px,#ffff68 535px,#fffe00 539px,#ff2300 552px,#ef0000 562px,#a00000 580px,#df0000 600px,#d60000 610px,#fc0000 624px,#ac0000 635px,#7e0000 640px,#620000 657px,#6b0000 666px,#fc0000 671px,#ffe800 678px,#ffff16 679px,#ffff51 680px,#ffff70 682px,#ffff68 687px,#ffff12 696px)"></i>
<i style="left:334.4px;background:linear-gradient(#6c0000 -0px,#5f0000 11px,#440000 17px,#ff0a00 43px,#ff5700 53px,#f50000 56px,#520000 61px,#710000 67px,#ff0a00 87px,#ff5700 97px,#ff2600 99px,#ff0500 100px,#680000 106px,#620000 108px,#d40000 122px,#5a0000 129px,#0f0000 132px,#2d0000 152px,#680000 182px,#580000 198px,#ff0900 246px,#ff5400 268px,#f60000 277px,#920000 294px,#8a0000 304px,#ff0c00 341px,#ff5400 365px,#f40000 389px,#850000 420px,#dc0000 436px,#ff0d00 441px,#ff5900 448px,#f20000 474px,#660000 502px,#390000 520px,#ff0500 530px,#ff5900 534px,#ff1c00 552px,#ef0000 555px,#780000 564px,#280000 599px,#6f0000 610px,#a00000 639px,#3c0000 647px,#1c0000 680px,#7a0000 683px,#f10000 686px,#ff3200 688px,#ff3200 696px)"></i>
<i style="left:335.4px;background:linear-gradient(#0b0000 -0px,#0b0000 696px)"></i>
<i style="left:336.4px;background:linear-gradient(#0b0000 -0px,#0b0000 696px)"></i>
<i style="left:337.4px;background:linear-gradient(#aa0000 -0px,#130000 9px,#400000 13px,#ff0700 26px,#ffdc00 40px,#ff8300 44px,#fc0000 48px,#230000 53px,#120000 54px,#ff0700 70px,#ff3900 75px,#ff9700 80px,#ffa700 82px,#ff1200 90px,#d10000 92px,#1e0000 97px,#120000 99px,#730000 121px,#200000 136px,#120000 139px,#650000 159px,#2d0000 174px,#0e0000 179px,#ff0000 213px,#ff3a00 230px,#f50000 240px,#430000 262px,#0c0000 268px,#310000 298px,#6a0000 316px,#470000 342px,#120000 365px,#7d0000 392px,#750000 410px,#2b0000 425px,#110000 449px,#830000 482px,#ff0200 494px,#ffd600 506px,#ffff06 508px,#ffff29 509px,#ffff17 511px,#fff000 513px,#ff0b00 525px,#7f0000 530px,#1c0000 533px,#170000 535px,#940000 555px,#130000 608px,#c30000 622px,#c50000 650px,#4c0000 663px,#3b0000 677px,#130000 688px,#950000 696px)"></i>
<i style="left:338.4px;background:linear-gradient(#0b0000 -0px,#120000 10px,#ff0700 26px,#ff1d00 28px,#e90000 32px,#580000 38px,#150000 40px,#120000 54px,#650000 60px,#e50000 63px,#ff0f00 64px,#ff8f00 68px,#ffc600 74px,#ff5300 79px,#f90000 82px,#0d0000 98px,#2d0000 110px,#280000 114px,#7e0000 121px,#8c0000 128px,#560000 133px,#0d0000 138px,#1b0000 152px,#0b0000 172px,#160000 180px,#8d0000 201px,#4e0000 220px,#0b0000 231px,#110000 247px,#ff0b00 263px,#ff7400 270px,#ffd400 285px,#fff400 297px,#ff7c00 356px,#ff6000 366px,#ffae00 414px,#ffe200 425px,#ffaa00 439px,#ff5100 448px,#f20000 453px,#0b0000 467px,#190000 488px,#470000 510px,#ff0000 519px,#fff400 528px,#ffff4d 530px,#ffffe5 533px,#ffffe4 534px,#ffff10 538px,#ffa500 541px,#ff0500 546px,#0c0000 555px,#620000 574px,#120000 609px,#590000 624px,#cd0000 638px,#c60000 663px,#2a0000 676px,#0b0000 695px,#0b0000 696px)"></i>
<i style="left:339.4px;background:linear-gradient(#0b0000 -0px,#120000 10px,#6e0000 17px,#580000 23px,#0b0000 28px,#150000 41px,#450000 47px,#f00000 51px,#ff7400 54px,#fff600 57px,#ffff84 60px,#ffff68 62px,#fff700 66px,#f60000 82px,#120000 97px,#200000 98px,#ee0000 104px,#ff3900 107px,#ff9100 113px,#ff8400 115px,#fd0000 123px,#0b0000 138px,#150000 181px,#1c0000 195px,#0b0000 210px,#170000 215px,#d80000 230px,#ff0a00 233px,#ffff02 246px,#ffffda 263px,#fffffd 268px,#ffffee 283px,#ffffff 307px,#fffff4 420px,#ffffd1 435px,#fffffb 448px,#ffff37 467px,#fff600 469px,#f90000 481px,#2e0000 495px,#0b0000 500px,#0c0000 533px,#780000 537px,#ff0700 542px,#ffef00 552px,#ffff22 555px,#fff500 556px,#ff0300 564px,#0b0000 574px,#330000 592px,#120000 609px,#cd0000 653px,#c20000 676px,#0b0000 688px,#0b0000 696px)"></i>
<i style="left:340.4px;background:linear-gradient(#0b0000 -0px,#160000 28px,#a40000 34px,#fe0000 36px,#ffd300 41px,#fff300 42px,#ffff55 44px,#ffffff 47px,#fffff4 54px,#fffa00 65px,#f60000 82px,#ff2500 85px,#ffdb00 92px,#fffc00 93px,#ffffe0 97px,#fffff2 98px,#fff900 108px,#fd0000 123px,#110000 137px,#140000 190px,#7c0000 203px,#ff0900 213px,#ff4e00 219px,#ffff01 230px,#ffffab 241px,#ffffff 252px,#fffffb 448px,#fffb00 479px,#ff5000 498px,#ff0200 502px,#670000 511px,#0e0000 523px,#140000 535px,#440000 550px,#490000 555px,#ff0200 563px,#ff9c00 573px,#ffa000 574px,#fd0000 580px,#100000 591px,#160000 610px,#c90000 650px,#c50000 688px,#430000 696px)"></i>
<i style="left:341.4px;background:linear-gradient(#0b0000 -0px,#0b0000 15px,#ef0000 21px,#ff4700 23px,#ffff04 27px,#ffff38 28px,#ffffd9 33px,#ffffff 34px,#fffff4 54px,#fffa00 65px,#ffd400 69px,#fffc00 74px,#ffff83 79px,#fffff6 82px,#ffffd7 91px,#fffff2 98px,#fff900 108px,#ff9200 114px,#fe0000 119px,#5c0000 127px,#1c0000 134px,#0b0000 147px,#150000 158px,#4c0000 167px,#250000 176px,#120000 180px,#750000 191px,#ff0500 196px,#ffff04 207px,#fffff5 217px,#fffff4 268px,#ffff28 280px,#fff900 284px,#ffb100 300px,#ffbb00 319px,#ffff0b 337px,#fffffd 364px,#ffff9d 391px,#ffffad 409px,#ffffff 425px,#fffff7 449px,#ffff48 472px,#fff700 480px,#ff4100 511px,#f90000 517px,#0e0000 534px,#9a0000 556px,#850000 570px,#760000 574px,#fc0000 583px,#ff3300 591px,#f60000 594px,#2c0000 605px,#0c0000 608px,#ff0900 662px,#d90000 673px,#cd0000 678px,#cd0000 696px)"></i>
<i style="left:342.4px;background:linear-gradient(#0b0000 -0px,#0b0000 3px,#1e0000 4px,#ff0500 8px,#ffff0a 13px,#ffff9c 15px,#ffffbc 16px,#ffffff 23px,#fffff4 54px,#ffffb1 59px,#ffffc1 64px,#fffff1 67px,#ffffdc 69px,#ffff73 77px,#ffff65 83px,#ffffbd 93px,#fffff7 97px,#ffffdc 98px,#ffff18 101px,#ffe700 102px,#ff1500 108px,#db0000 110px,#7d0000 114px,#0d0000 137px,#c90000 147px,#ff0300 153px,#ff0900 158px,#b10000 168px,#ff0600 174px,#ff6b00 179px,#ffff05 184px,#ffffee 190px,#ffffff 193px,#ffffff 229px,#fff500 242px,#f90000 256px,#150000 267px,#2a0000 269px,#ff0200 281px,#ffca00 297px,#ffff0d 304px,#ffff99 320px,#ffffe6 341px,#fffffb 364px,#fff700 395px,#ff5a00 424px,#ff8e00 441px,#ffff09 455px,#ffff9a 467px,#ffff2d 485px,#fff400 491px,#ff3a00 514px,#f10000 527px,#a20000 547px,#a20000 556px,#ff0900 571px,#ff0d00 577px,#e40000 584px,#a20000 591px,#dd0000 601px,#c70000 608px,#370000 623px,#b40000 644px,#ff0d00 663px,#ff4000 676px,#f90000 684px,#cd0000 689px,#cd0000 696px)"></i>
<i style="left:343.4px;background:linear-gradient(#ffd400 -0px,#ffff17 1px,#ffffc5 3px,#ffffff 4px,#ffffff 53px,#ffff1f 62px,#fff100 65px,#ffdb00 72px,#fffa00 83px,#ff7600 91px,#f80000 96px,#ca0000 98px,#670000 120px,#ff0800 129px,#fffd00 138px,#ffd200 149px,#ffff05 156px,#ffff82 163px,#fffff5 167px,#fffff5 201px,#ffff59 212px,#fff800 217px,#ff2e00 229px,#ff9b00 245px,#ffff09 255px,#ffffff 268px,#ffffbc 287px,#fff900 312px,#ff0200 353px,#d00000 366px,#ff0f00 398px,#ff1b00 426px,#ef0000 441px,#d00000 449px,#ff0200 468px,#ffbc00 487px,#fff700 499px,#ffbc00 512px,#fa0000 530px,#ce0000 534px,#ff0c00 550px,#ff2000 557px,#ff1d00 574px,#ff9000 591px,#ff1200 603px,#cf0000 608px,#d70000 621px,#610000 637px,#d90000 652px,#ff0d00 663px,#ff7800 688px,#ff0100 696px)"></i>
<i style="left:344.4px;background:linear-gradient(#ffffff -0px,#ffffff 40px,#ffff5d 46px,#fff700 49px,#ff7c00 54px,#ff6100 66px,#ff5100 73px,#f60000 80px,#cd0000 83px,#c10000 100px,#b80000 106px,#ff0900 114px,#ffb500 124px,#ffff0b 129px,#fffff1 137px,#ffffef 145px,#ffffff 152px,#fffff4 182px,#ffff96 192px,#ffff0d 200px,#ffff25 211px,#ffff9f 223px,#fffffe 229px,#fffff4 269px,#ffff1a 297px,#fff500 300px,#ff5500 324px,#f70000 349px,#ce0000 368px,#d80000 453px,#ff1100 480px,#ff4500 500px,#ff9900 515px,#ff9600 527px,#ff5000 540px,#ff0300 555px,#ff7400 576px,#ff9d00 593px,#fffc00 607px,#ff0900 623px,#ec0000 634px,#810000 649px,#b90000 656px,#ff0600 662px,#ff7f00 690px,#ff7f00 696px)"></i>
<i style="left:345.4px;background:linear-gradient(#ffffff -0px,#fffffa 28px,#ffff67 35px,#fff500 39px,#ff0800 51px,#d20000 54px,#f30000 61px,#cd0000 71px,#d40000 99px,#ff0b00 105px,#ff7d00 114px,#fff500 119px,#ffffbc 129px,#ffffff 138px,#fffffa 179px,#ffffcc 189px,#fffff7 199px,#fffff8 247px,#ffff01 262px,#ff2e00 281px,#f20000 289px,#cd0000 299px,#d90000 367px,#ff1000 382px,#ff4400 411px,#ff1800 434px,#ea0000 443px,#d00000 449px,#ff0f00 479px,#ff7f00 537px,#ff7100 557px,#ff3100 574px,#ffc000 593px,#ffff00 611px,#fffe00 623px,#ff4600 637px,#f30000 649px,#b30000 656px,#a00000 663px,#ff0400 671px,#ff4a00 676px,#ff7f00 691px,#ff7f00 696px)"></i>
<i style="left:346.4px;background:linear-gradient(#ffffff -0px,#fffff5 17px,#ffff97 24px,#ffff02 31px,#ff4a00 42px,#f30000 50px,#cd0000 55px,#bf0000 79px,#c70000 95px,#dc0000 98px,#ff1700 100px,#fff100 109px,#ffff23 111px,#ffff87 116px,#ffffef 127px,#ffffff 146px,#fffffc 214px,#ffff46 228px,#fff500 233px,#ff3600 248px,#ef0000 261px,#ce0000 270px,#ff0e00 299px,#fffd00 363px,#ffa700 402px,#ffec00 442px,#fff400 449px,#ff2100 484px,#ff7f00 540px,#ff7300 577px,#ff6000 592px,#ffff00 608px,#fff900 638px,#ff7900 651px,#ff3d00 658px,#f70000 663px,#c40000 667px,#be0000 676px,#ff0a00 681px,#ff7f00 688px,#ff7f00 696px)"></i>
<i style="left:347.4px;background:linear-gradient(#ffffff -0px,#fffff5 11px,#ffff6a 21px,#ffff01 26px,#fd0000 49px,#cd0000 55px,#b70000 64px,#980000 76px,#b50000 83px,#fe0000 87px,#ffff0b 98px,#ffffbd 108px,#ffffff 115px,#fffff5 190px,#ffff92 202px,#fff500 213px,#ff0100 254px,#d10000 269px,#f00000 300px,#d20000 357px,#df0000 368px,#ff0f00 380px,#ff3d00 403px,#ff1200 420px,#ff0900 425px,#ff7d00 450px,#ffff00 468px,#fff200 486px,#ff5e00 514px,#ff7f00 545px,#ff8200 608px,#ffff00 625px,#fffa00 652px,#ffab00 664px,#ff8900 668px,#fd0000 676px,#ca0000 679px,#d40000 688px,#ff1000 692px,#ff4c00 696px)"></i>
<i style="left:348.4px;background:linear-gradient(#ffffff -0px,#fffff8 10px,#fff700 26px,#f30000 48px,#8e0000 55px,#760000 62px,#9d0000 70px,#ff0600 77px,#ffd300 87px,#ffff0c 89px,#ffffde 96px,#ffffff 99px,#fffff7 180px,#ffff5a 198px,#fff700 205px,#ff1100 237px,#de0000 250px,#d30000 273px,#ff0b00 291px,#ffff09 333px,#fffff4 362px,#ffffec 372px,#ffff83 413px,#ffff7c 424px,#fff900 439px,#ff2c00 467px,#ffb400 484px,#ffff00 501px,#ffed00 517px,#ff7f00 541px,#ff7300 613px,#ff6200 624px,#ffff00 639px,#fff700 666px,#ffcf00 679px,#f30000 689px,#cd0000 691px,#cd0000 696px)"></i>
<i style="left:349.4px;background:linear-gradient(#ffffff -0px,#fffff7 10px,#fff700 26px,#ffa700 32px,#f90000 40px,#7e0000 48px,#660000 55px,#b10000 64px,#ff0800 70px,#ff4100 72px,#ffed00 77px,#ffff13 78px,#ffffce 83px,#ffffff 86px,#fffff3 174px,#ffff81 182px,#ffff01 190px,#ff0a00 215px,#cd0000 228px,#d90000 270px,#ff1100 281px,#ff7900 299px,#ffff04 318px,#ffffa4 343px,#ffffff 366px,#ffffff 467px,#ffff40 482px,#fff300 491px,#ffc800 499px,#ffec00 514px,#fffd00 534px,#ff8700 556px,#ff7100 614px,#ff4600 639px,#ffff00 653px,#ffff00 690px,#ff7200 696px)"></i>
<i style="left:350.4px;background:linear-gradient(#ffffff -0px,#fffff7 10px,#ffff75 18px,#fffe00 21px,#fd0000 31px,#a20000 38px,#6f0000 48px,#660000 54px,#8a0000 57px,#ec0000 59px,#ff4900 61px,#ffef00 65px,#ffff57 67px,#ffffff 71px,#fffff3 154px,#ffff9f 163px,#ffff0b 171px,#ff9b00 180px,#fe0000 192px,#cd0000 198px,#d10000 247px,#ff1000 253px,#ffff0b 274px,#ffffc8 289px,#ffffff 297px,#fffffb 448px,#ffff9f 462px,#ffff9d 475px,#ffffee 487px,#ffffff 494px,#ffffee 500px,#ffffa4 512px,#ffff7d 520px,#ffff37 534px,#ffff01 537px,#ffbb00 550px,#ff7700 571px,#ff7300 613px,#ff1f00 652px,#ffff00 666px,#ffff00 696px)"></i>
<i style="left:351.4px;background:linear-gradient(#ffffff -0px,#ffffff 6px,#ffffc8 8px,#ffff12 12px,#ffad00 15px,#ff2d00 20px,#f90000 23px,#960000 32px,#7b0000 43px,#aa0000 45px,#f40000 47px,#ff9e00 51px,#fffe00 53px,#ffffff 57px,#fffff5 141px,#fffff1 142px,#ffff0f 149px,#ffad00 154px,#ff2300 163px,#f50000 169px,#cd0000 174px,#d50000 215px,#ff0e00 222px,#ffe900 241px,#ffff1f 244px,#ffff63 248px,#ffffff 269px,#fffffb 448px,#fffb00 479px,#ffca00 490px,#ffff04 501px,#ffffaf 512px,#ffffff 516px,#fffff1 535px,#ffffb6 540px,#fffb00 550px,#ff8900 562px,#ff4800 581px,#ff7700 594px,#ff7400 610px,#ff5100 626px,#ff0800 666px,#fff900 678px,#ffff00 696px)"></i>
<i style="left:352.4px;background:linear-gradient(#ffff3e -0px,#fff500 2px,#ff6900 8px,#fd0000 14px,#b60000 19px,#9e0000 31px,#ff0100 35px,#fffa00 42px,#ffff65 44px,#ffffff 54px,#fffffc 124px,#ffff11 131px,#ffb500 134px,#ff2300 139px,#e20000 142px,#cd0000 164px,#db0000 192px,#ff0f00 201px,#ff9b00 217px,#ffff0b 237px,#ffffff 269px,#fffff2 313px,#ffff91 359px,#ffffc3 381px,#ffffff 404px,#fffff3 449px,#fffb00 479px,#ff3200 516px,#ffdf00 529px,#ffff06 531px,#ffffc4 539px,#fffd00 560px,#ff4300 579px,#ff0400 596px,#ff6a00 612px,#ff1f00 631px,#ff2a00 646px,#ef0000 672px,#e20000 678px,#ff0700 680px,#ffff00 691px,#ffff00 696px)"></i>
<i style="left:353.4px;background:linear-gradient(#ff3300 -0px,#f40000 4px,#cd0000 8px,#bb0000 19px,#ff0200 24px,#ffb600 31px,#ffff04 38px,#ffffb5 50px,#ffffff 54px,#fffff8 90px,#ffffea 95px,#ffffff 102px,#fffff2 108px,#ffff81 114px,#ffff0d 118px,#ff6200 125px,#f70000 133px,#cd0000 139px,#d70000 181px,#ff0b00 190px,#ffff0b 237px,#fffffe 268px,#ffff9f 293px,#fff600 321px,#ff5300 366px,#ff7900 395px,#fff600 418px,#ffff46 425px,#ffffe9 437px,#fffffa 448px,#fffb00 479px,#f60000 526px,#be0000 539px,#ff0100 543px,#fff100 560px,#ff8300 579px,#fc0000 596px,#c80000 612px,#ff0800 621px,#ff2000 628px,#ec0000 639px,#e60000 646px,#ff0f00 658px,#cd0000 690px,#ff0d00 693px,#ff5a00 696px)"></i>
<i style="left:354.4px;background:linear-gradient(#cd0000 -0px,#d60000 12px,#ff0200 16px,#ff7500 25px,#ffdd00 40px,#ffff0f 43px,#ffffff 54px,#ffffff 74px,#ffff57 81px,#ffff33 86px,#ffff54 90px,#fffff4 97px,#fffff1 99px,#ffff89 105px,#fff900 111px,#ff4000 121px,#fd0000 125px,#cd0000 131px,#cf0000 179px,#ff1000 191px,#ffa500 221px,#ffff05 244px,#fffffc 268px,#fff700 304px,#f90000 354px,#cd0000 367px,#e20000 437px,#ff1700 443px,#ff9600 458px,#ffdd00 477px,#ff7600 503px,#f60000 526px,#b40000 543px,#8c0000 560px,#ff0e00 570px,#ff6e00 579px,#ff5100 587px,#f20000 601px,#cd0000 610px,#a70000 628px,#de0000 642px,#a40000 657px,#f40000 670px,#cd0000 695px,#cd0000 696px)"></i>
<i style="left:355.4px;background:linear-gradient(#cd0000 -0px,#d20000 10px,#ff0900 15px,#ff1c00 27px,#fffa00 42px,#ffffff 54px,#ffffff 60px,#ffff06 65px,#ff6700 72px,#ff5300 75px,#fffa00 86px,#ffffa4 94px,#ffff93 97px,#ffff01 101px,#ff8500 106px,#ff0200 110px,#950000 119px,#8b0000 124px,#cd0000 140px,#bf0000 149px,#930000 163px,#d50000 180px,#ff0d00 191px,#ff1f00 212px,#ff6200 224px,#ffff0c 246px,#ffff91 259px,#ffffb9 268px,#fffb00 286px,#ff9900 300px,#ff1d00 319px,#f00000 335px,#b10000 400px,#cd0000 440px,#e40000 454px,#ff1000 461px,#ff2c00 468px,#ff2b00 478px,#ff2a00 488px,#f30000 495px,#ff0c00 510px,#f10000 527px,#ac0000 546px,#5b0000 579px,#f80000 597px,#f00000 602px,#cd0000 610px,#c00000 631px,#7f0000 642px,#9d0000 656px,#630000 669px,#d90000 682px,#cd0000 696px)"></i>
<i style="left:356.4px;background:linear-gradient(#9c0000 -0px,#970000 16px,#ff0900 24px,#ffff0c 42px,#fffff4 53px,#ffffd6 54px,#fff700 57px,#ff7500 60px,#ff7d00 70px,#ff9e00 86px,#ff3300 95px,#ff1500 98px,#e20000 100px,#730000 106px,#970000 138px,#540000 148px,#950000 180px,#790000 192px,#ff0a00 223px,#ff5200 242px,#ff6e00 262px,#ff7c00 268px,#f80000 280px,#8e0000 296px,#910000 373px,#5e0000 427px,#980000 451px,#940000 467px,#fe0000 483px,#ff2100 496px,#f10000 500px,#6e0000 510px,#6c0000 521px,#990000 536px,#510000 599px,#9c0000 609px,#900000 644px,#660000 652px,#6d0000 666px,#510000 682px,#9c0000 688px,#9c0000 696px)"></i>
<i style="left:357.4px;background:linear-gradient(#0b0000 -0px,#1c0000 14px,#ac0000 55px,#0b0000 100px,#0b0000 696px)"></i>
<i style="left:358.4px;background:linear-gradient(#0b0000 -0px,#0b0000 696px)"></i>
<i style="left:359.4px;background:linear-gradient(#0b0000 -0px,#0b0000 696px)"></i>
<i style="left:360.4px;background:linear-gradient(#0b0000 -0px,#0b0000 696px)"></i>
<i style="left:361.4px;background:linear-gradient(#0b0000 -0px,#0b0000 696px)"></i>
<i style="left:362.4px;background:linear-gradient(#0b0000 -0px,#0b0000 696px)"></i>
<i style="left:363.4px;background:linear-gradient(#0b0000 -0px,#0b0000 696px)"></i>
<i style="left:364.4px;background:linear-gradient(#0b0000 -0px,#0b0000 696px)"></i>
<i style="left:365.4px;background:linear-gradient(#0b0000 -0px,#0b0000 696px)"></i>
</div>
<svg style="position:absolute;left:0;top:0" width="1245" height="870" viewBox="0 0 1245 870">
<rect x="1.00" y="1.00" width="1243.00" height="29.00" fill="#ebebeb"/>
<rect x="1.00" y="849.00" width="1243.00" height="20.00" fill="#ebebeb"/>
<text x="5.50" y="23.00" font-size="17.67" textLength="178.32" lengthAdjust="spacingAndGlyphs" fill="#000">2025-02-05: GIRAFFE</text>
<text x="336.28" y="22.50" font-size="13.25" textLength="55.34" lengthAdjust="spacingAndGlyphs" fill="#000">type info</text>
<text x="628.90" y="22.70" font-size="13.25" textLength="66.89" lengthAdjust="spacingAndGlyphs" fill="#000">set-up info</text>
<text x="7.11" y="45.20" font-size="13.25" textLength="61.85" lengthAdjust="spacingAndGlyphs" fill="#000">ORIGFILE:</text>
<text x="74.74" y="45.20" font-size="13.25" textLength="215.14" lengthAdjust="spacingAndGlyphs" fill="#000">FLAMES_GIRAF_FLAT037_0004.fits</text>
<text x="7.68" y="62.00" font-size="13.25" textLength="55.91" lengthAdjust="spacingAndGlyphs" fill="#000">ARCFILE:</text>
<text x="75.10" y="62.00" font-size="13.25" textLength="229.28" lengthAdjust="spacingAndGlyphs" fill="#000">GIRAF.2025-02-06T13:39:24.110.fits</text>
<text x="6.76" y="80.00" font-size="13.25" textLength="61.41" lengthAdjust="spacingAndGlyphs" fill="#000">raw_type:</text>
<text x="74.79" y="80.00" font-size="13.25" textLength="37.53" lengthAdjust="spacingAndGlyphs" fill="#000">FFLAT</text>
<text x="7.13" y="97.70" font-size="13.25" textLength="57.07" lengthAdjust="spacingAndGlyphs" fill="#000">do_class:</text>
<text x="74.80" y="97.70" font-size="13.25" textLength="72.63" lengthAdjust="spacingAndGlyphs" fill="#000">FIBER_FLAT</text>
<text x="7.09" y="113.50" font-size="13.25" textLength="65.37" lengthAdjust="spacingAndGlyphs" fill="#000">extension:</text>
<text x="75.24" y="113.50" font-size="13.25" textLength="7.95" lengthAdjust="spacingAndGlyphs" fill="#000">0</text>
<text x="335.47" y="45.20" font-size="13.25" textLength="68.63" lengthAdjust="spacingAndGlyphs" fill="#000">DPR.CATG:</text>
<text x="405.06" y="45.20" font-size="13.25" textLength="36.51" lengthAdjust="spacingAndGlyphs" fill="#000">CALIB</text>
<text x="335.49" y="62.10" font-size="13.25" textLength="64.74" lengthAdjust="spacingAndGlyphs" fill="#000">DPR.TYPE:</text>
<text x="404.67" y="62.10" font-size="13.25" textLength="68.15" lengthAdjust="spacingAndGlyphs" fill="#000">LAMP,FLAT</text>
<text x="335.47" y="79.70" font-size="13.25" textLength="67.69" lengthAdjust="spacingAndGlyphs" fill="#000">DPR.TECH:</text>
<text x="404.55" y="79.70" font-size="13.25" textLength="20.03" lengthAdjust="spacingAndGlyphs" fill="#000">IFU</text>
<text x="336.21" y="97.20" font-size="13.25" textLength="43.63" lengthAdjust="spacingAndGlyphs" fill="#000">TPL.ID:</text>
<text x="404.62" y="97.20" font-size="13.25" textLength="135.12" lengthAdjust="spacingAndGlyphs" fill="#000">FLAMES_giraf_cal_flat</text>
<text x="628.32" y="43.00" font-size="11.05" textLength="79.97" lengthAdjust="spacingAndGlyphs" fill="#000">INS.SLIT.NAME:</text>
<text x="758.41" y="43.00" font-size="11.05" textLength="23.32" lengthAdjust="spacingAndGlyphs" fill="#000">IFU2</text>
<text x="628.32" y="56.10" font-size="11.05" textLength="79.42" lengthAdjust="spacingAndGlyphs" fill="#000">INS.EXP.MODE:</text>
<text x="758.44" y="56.10" font-size="11.05" textLength="35.64" lengthAdjust="spacingAndGlyphs" fill="#000">L543.1</text>
<text x="628.44" y="68.90" font-size="11.05" textLength="94.17" lengthAdjust="spacingAndGlyphs" fill="#000">DET.READ.SPEED:</text>
<text x="758.44" y="68.90" font-size="11.05" textLength="37.88" lengthAdjust="spacingAndGlyphs" fill="#000">Normal</text>
<text x="5.66" y="864.00" font-size="11.05" textLength="173.24" lengthAdjust="spacingAndGlyphs" fill="#000">powered by QC: www.eso.org/HC</text>
<text x="935.56" y="864.00" font-size="11.05" textLength="303.03" lengthAdjust="spacingAndGlyphs" fill="#000">created by qc_rawdisp.py v1.2.3 on 2025-02-06T16:25:07</text>
<line x1="308.10" y1="461.50" x2="681.00" y2="461.50" stroke="#0000ff" stroke-width="1.3"/>
<line x1="494.50" y1="106.20" x2="494.50" y2="816.70" stroke="#0000ff" stroke-width="1.3"/>
<rect x="310.60" y="112.80" width="365.20" height="695.50" fill="none" stroke="#000" stroke-width="1.7"/>
<line x1="303.60" y1="808.30" x2="310.60" y2="808.30" stroke="#000" stroke-width="1.6"/>
<text x="289.85" y="812.50" font-size="10.30" textLength="6.18" lengthAdjust="spacingAndGlyphs" fill="#000">0</text>
<line x1="303.60" y1="723.38" x2="310.60" y2="723.38" stroke="#000" stroke-width="1.6"/>
<text x="277.48" y="727.58" font-size="10.30" textLength="18.55" lengthAdjust="spacingAndGlyphs" fill="#000">500</text>
<line x1="303.60" y1="638.45" x2="310.60" y2="638.45" stroke="#000" stroke-width="1.6"/>
<text x="271.30" y="642.65" font-size="10.30" textLength="24.74" lengthAdjust="spacingAndGlyphs" fill="#000">1000</text>
<line x1="303.60" y1="553.52" x2="310.60" y2="553.52" stroke="#000" stroke-width="1.6"/>
<text x="271.30" y="557.73" font-size="10.30" textLength="24.74" lengthAdjust="spacingAndGlyphs" fill="#000">1500</text>
<line x1="303.60" y1="468.60" x2="310.60" y2="468.60" stroke="#000" stroke-width="1.6"/>
<text x="271.30" y="472.80" font-size="10.30" textLength="24.74" lengthAdjust="spacingAndGlyphs" fill="#000">2000</text>
<line x1="303.60" y1="383.67" x2="310.60" y2="383.67" stroke="#000" stroke-width="1.6"/>
<text x="271.30" y="387.87" font-size="10.30" textLength="24.74" lengthAdjust="spacingAndGlyphs" fill="#000">2500</text>
<line x1="303.60" y1="298.75" x2="310.60" y2="298.75" stroke="#000" stroke-width="1.6"/>
<text x="271.30" y="302.95" font-size="10.30" textLength="24.74" lengthAdjust="spacingAndGlyphs" fill="#000">3000</text>
<line x1="303.60" y1="213.82" x2="310.60" y2="213.82" stroke="#000" stroke-width="1.6"/>
<text x="271.30" y="218.02" font-size="10.30" textLength="24.74" lengthAdjust="spacingAndGlyphs" fill="#000">3500</text>
<line x1="303.60" y1="128.90" x2="310.60" y2="128.90" stroke="#000" stroke-width="1.6"/>
<text x="271.30" y="133.10" font-size="10.30" textLength="24.74" lengthAdjust="spacingAndGlyphs" fill="#000">4000</text>
<line x1="310.70" y1="808.30" x2="310.70" y2="815.30" stroke="#000" stroke-width="1.6"/>
<text x="307.61" y="831.70" font-size="10.30" textLength="6.18" lengthAdjust="spacingAndGlyphs" fill="#000">0</text>
<line x1="353.21" y1="808.30" x2="353.21" y2="815.30" stroke="#000" stroke-width="1.6"/>
<text x="343.87" y="831.70" font-size="10.30" textLength="18.55" lengthAdjust="spacingAndGlyphs" fill="#000">250</text>
<line x1="395.73" y1="808.30" x2="395.73" y2="815.30" stroke="#000" stroke-width="1.6"/>
<text x="386.44" y="831.70" font-size="10.30" textLength="18.55" lengthAdjust="spacingAndGlyphs" fill="#000">500</text>
<line x1="438.24" y1="808.30" x2="438.24" y2="815.30" stroke="#000" stroke-width="1.6"/>
<text x="428.89" y="831.70" font-size="10.30" textLength="18.55" lengthAdjust="spacingAndGlyphs" fill="#000">750</text>
<line x1="480.75" y1="808.30" x2="480.75" y2="815.30" stroke="#000" stroke-width="1.6"/>
<text x="468.18" y="831.70" font-size="10.30" textLength="24.74" lengthAdjust="spacingAndGlyphs" fill="#000">1000</text>
<line x1="523.26" y1="808.30" x2="523.26" y2="815.30" stroke="#000" stroke-width="1.6"/>
<text x="510.69" y="831.70" font-size="10.30" textLength="24.74" lengthAdjust="spacingAndGlyphs" fill="#000">1250</text>
<line x1="565.78" y1="808.30" x2="565.78" y2="815.30" stroke="#000" stroke-width="1.6"/>
<text x="553.20" y="831.70" font-size="10.30" textLength="24.74" lengthAdjust="spacingAndGlyphs" fill="#000">1500</text>
<line x1="608.29" y1="808.30" x2="608.29" y2="815.30" stroke="#000" stroke-width="1.6"/>
<text x="595.71" y="831.70" font-size="10.30" textLength="24.74" lengthAdjust="spacingAndGlyphs" fill="#000">1750</text>
<line x1="650.80" y1="808.30" x2="650.80" y2="815.30" stroke="#000" stroke-width="1.6"/>
<text x="638.37" y="831.70" font-size="10.30" textLength="24.74" lengthAdjust="spacingAndGlyphs" fill="#000">2000</text>
<text x="490.42" y="849.40" font-size="11.05" textLength="7.14" lengthAdjust="spacingAndGlyphs" fill="#000">X</text>
<text x="255.82" y="460.90" font-size="11.05" textLength="6.36" lengthAdjust="spacingAndGlyphs" fill="#000" transform="rotate(-90 259.00 460.90)">Y</text>
<defs><linearGradient id="cbg" x1="0" y1="0" x2="0" y2="1"><stop offset="0.00000" stop-color="#ffffff"/><stop offset="0.25397" stop-color="#ffff00"/><stop offset="0.63492" stop-color="#ff0000"/><stop offset="1.00000" stop-color="#0b0000"/></linearGradient></defs><rect x="711.6" y="112.6" width="35.60000000000002" height="696.1999999999999" fill="url(#cbg)"/>
<rect x="711.60" y="112.60" width="35.60" height="696.20" fill="none" stroke="#000" stroke-width="1.7"/>
<line x1="747.20" y1="754.87" x2="754.20" y2="754.87" stroke="#000" stroke-width="1.6"/>
<text x="761.65" y="759.07" font-size="10.30" textLength="24.74" lengthAdjust="spacingAndGlyphs" fill="#000">1000</text>
<line x1="747.20" y1="666.26" x2="754.20" y2="666.26" stroke="#000" stroke-width="1.6"/>
<text x="761.94" y="670.46" font-size="10.30" textLength="24.74" lengthAdjust="spacingAndGlyphs" fill="#000">2000</text>
<line x1="747.20" y1="577.65" x2="754.20" y2="577.65" stroke="#000" stroke-width="1.6"/>
<text x="762.08" y="581.85" font-size="10.30" textLength="24.74" lengthAdjust="spacingAndGlyphs" fill="#000">3000</text>
<line x1="747.20" y1="489.04" x2="754.20" y2="489.04" stroke="#000" stroke-width="1.6"/>
<text x="762.24" y="493.24" font-size="10.30" textLength="24.74" lengthAdjust="spacingAndGlyphs" fill="#000">4000</text>
<line x1="747.20" y1="400.43" x2="754.20" y2="400.43" stroke="#000" stroke-width="1.6"/>
<text x="762.05" y="404.63" font-size="10.30" textLength="24.74" lengthAdjust="spacingAndGlyphs" fill="#000">5000</text>
<line x1="747.20" y1="311.82" x2="754.20" y2="311.82" stroke="#000" stroke-width="1.6"/>
<text x="761.94" y="316.02" font-size="10.30" textLength="24.74" lengthAdjust="spacingAndGlyphs" fill="#000">6000</text>
<line x1="747.20" y1="223.21" x2="754.20" y2="223.21" stroke="#000" stroke-width="1.6"/>
<text x="761.93" y="227.41" font-size="10.30" textLength="24.74" lengthAdjust="spacingAndGlyphs" fill="#000">7000</text>
<line x1="747.20" y1="134.60" x2="754.20" y2="134.60" stroke="#000" stroke-width="1.6"/>
<text x="762.02" y="138.80" font-size="10.30" textLength="24.74" lengthAdjust="spacingAndGlyphs" fill="#000">8000</text>
<path d="M911.42,232.40 H1019.69V127.70 H1024.70V118.69 H1030.36V121.45 H1035.91V123.66 H1042.11V125.86 H1047.71V126.97 H1069.54V127.89 H1080.75V129.54 H1086.36V130.83 H1091.96V132.67 H1097.57V136.54 H1103.47V140.95 H1108.78V149.97 H1114.38V160.64 H1119.99V181.98 H1125.88V232.40 H1185.48V232.40" fill="none" stroke="#0000ff" stroke-width="1.4"/>
<rect x="911.20" y="112.70" width="274.10" height="119.70" fill="none" stroke="#000" stroke-width="1.7"/>
<line x1="904.20" y1="232.40" x2="911.20" y2="232.40" stroke="#000" stroke-width="1.6"/>
<text x="890.85" y="236.60" font-size="10.30" textLength="6.18" lengthAdjust="spacingAndGlyphs" fill="#000">0</text>
<line x1="904.20" y1="195.60" x2="911.20" y2="195.60" stroke="#000" stroke-width="1.6"/>
<text x="890.98" y="199.80" font-size="10.30" textLength="6.18" lengthAdjust="spacingAndGlyphs" fill="#000">2</text>
<line x1="904.20" y1="158.80" x2="911.20" y2="158.80" stroke="#000" stroke-width="1.6"/>
<text x="890.74" y="163.00" font-size="10.30" textLength="6.18" lengthAdjust="spacingAndGlyphs" fill="#000">4</text>
<line x1="904.20" y1="122.00" x2="911.20" y2="122.00" stroke="#000" stroke-width="1.6"/>
<text x="890.90" y="126.20" font-size="10.30" textLength="6.18" lengthAdjust="spacingAndGlyphs" fill="#000">6</text>
<line x1="965.70" y1="232.40" x2="965.70" y2="239.40" stroke="#000" stroke-width="1.6"/>
<text x="946.11" y="255.60" font-size="10.30" textLength="39.07" lengthAdjust="spacingAndGlyphs" fill="#000">−10000</text>
<line x1="1024.70" y1="232.40" x2="1024.70" y2="239.40" stroke="#000" stroke-width="1.6"/>
<text x="1021.61" y="255.60" font-size="10.30" textLength="6.18" lengthAdjust="spacingAndGlyphs" fill="#000">0</text>
<line x1="1083.70" y1="232.40" x2="1083.70" y2="239.40" stroke="#000" stroke-width="1.6"/>
<text x="1068.03" y="255.60" font-size="10.30" textLength="30.92" lengthAdjust="spacingAndGlyphs" fill="#000">10000</text>
<line x1="1142.70" y1="232.40" x2="1142.70" y2="239.40" stroke="#000" stroke-width="1.6"/>
<text x="1127.18" y="255.60" font-size="10.30" textLength="30.92" lengthAdjust="spacingAndGlyphs" fill="#000">20000</text>
<text x="1030.55" y="273.80" font-size="11.05" textLength="34.83" lengthAdjust="spacingAndGlyphs" fill="#000">counts</text>
<text x="841.87" y="173.80" font-size="11.05" textLength="71.69" lengthAdjust="spacingAndGlyphs" fill="#000" transform="rotate(-90 878.10 173.80)">log frequency</text>
<text x="1147.08" y="175.00" font-size="11.05" textLength="93.55" lengthAdjust="spacingAndGlyphs" fill="#000" transform="rotate(90 1193.90 175.00)">histogram (detail)</text>
<path d="M911.20,404.90 H924.61V290.82 H930.39V292.66 H935.99V293.58 H941.02V296.71 H957.06V297.26 H963.59V298.55 H969.18V302.04 H974.78V307.93 H980.37V318.97 H985.97V338.84 H992.12V404.90 H1185.30V404.90" fill="none" stroke="#0000ff" stroke-width="1.4"/>
<rect x="911.20" y="284.80" width="274.10" height="120.10" fill="none" stroke="#000" stroke-width="1.7"/>
<line x1="904.20" y1="404.90" x2="911.20" y2="404.90" stroke="#000" stroke-width="1.6"/>
<text x="890.85" y="409.10" font-size="10.30" textLength="6.18" lengthAdjust="spacingAndGlyphs" fill="#000">0</text>
<line x1="904.20" y1="368.10" x2="911.20" y2="368.10" stroke="#000" stroke-width="1.6"/>
<text x="890.98" y="372.30" font-size="10.30" textLength="6.18" lengthAdjust="spacingAndGlyphs" fill="#000">2</text>
<line x1="904.20" y1="331.30" x2="911.20" y2="331.30" stroke="#000" stroke-width="1.6"/>
<text x="890.74" y="335.50" font-size="10.30" textLength="6.18" lengthAdjust="spacingAndGlyphs" fill="#000">4</text>
<line x1="904.20" y1="294.50" x2="911.20" y2="294.50" stroke="#000" stroke-width="1.6"/>
<text x="890.90" y="298.70" font-size="10.30" textLength="6.18" lengthAdjust="spacingAndGlyphs" fill="#000">6</text>
<line x1="928.90" y1="404.90" x2="928.90" y2="411.90" stroke="#000" stroke-width="1.6"/>
<text x="925.81" y="427.80" font-size="10.30" textLength="6.18" lengthAdjust="spacingAndGlyphs" fill="#000">0</text>
<line x1="1003.50" y1="404.90" x2="1003.50" y2="411.90" stroke="#000" stroke-width="1.6"/>
<text x="987.98" y="427.80" font-size="10.30" textLength="30.92" lengthAdjust="spacingAndGlyphs" fill="#000">20000</text>
<line x1="1078.10" y1="404.90" x2="1078.10" y2="411.90" stroke="#000" stroke-width="1.6"/>
<text x="1062.73" y="427.80" font-size="10.30" textLength="30.92" lengthAdjust="spacingAndGlyphs" fill="#000">40000</text>
<line x1="1152.70" y1="404.90" x2="1152.70" y2="411.90" stroke="#000" stroke-width="1.6"/>
<text x="1137.17" y="427.80" font-size="10.30" textLength="30.92" lengthAdjust="spacingAndGlyphs" fill="#000">60000</text>
<line x1="966.20" y1="404.90" x2="966.20" y2="411.90" stroke="#000" stroke-width="1.6"/>
<line x1="1040.80" y1="404.90" x2="1040.80" y2="411.90" stroke="#000" stroke-width="1.6"/>
<line x1="1115.40" y1="404.90" x2="1115.40" y2="411.90" stroke="#000" stroke-width="1.6"/>
<text x="1030.55" y="446.00" font-size="11.05" textLength="34.83" lengthAdjust="spacingAndGlyphs" fill="#000">counts</text>
<text x="841.87" y="345.50" font-size="11.05" textLength="71.69" lengthAdjust="spacingAndGlyphs" fill="#000" transform="rotate(-90 878.10 345.50)">log frequency</text>
<text x="1153.69" y="349.40" font-size="11.05" textLength="80.33" lengthAdjust="spacingAndGlyphs" fill="#000" transform="rotate(90 1193.90 349.40)">histogram (full)</text>
<path d="M910.90,586.10 L920.70,585.00 L921.10,584.50 L921.30,565.34 L921.80,564.62 L922.30,566.05 L922.80,564.03 L923.30,565.35 L923.80,564.64 L924.30,564.19 L924.80,566.62 L925.30,566.12 L925.80,568.39 L926.30,566.80 L926.80,565.49 L927.30,565.18 L927.80,565.10 L928.30,562.15 L928.80,562.21 L929.30,563.26 L929.80,564.03 L930.30,562.60 L930.80,561.77 L931.30,563.40 L931.80,560.21 L932.30,562.59 L932.80,560.56 L933.30,559.88 L933.80,559.59 L934.30,559.98 L934.80,561.40 L935.30,559.53 L935.80,561.24 L936.30,561.85 L936.80,561.42 L937.30,563.05 L937.80,563.00 L938.20,584.00 L938.50,585.60 L939.90,584.50 L940.10,558.11 L940.60,558.66 L941.10,560.26 L941.60,559.53 L942.10,559.26 L942.60,560.21 L943.10,559.87 L943.60,559.48 L944.10,561.16 L944.60,560.96 L945.10,559.60 L945.60,560.76 L946.10,560.70 L946.60,561.92 L947.10,561.55 L947.60,560.24 L948.10,562.36 L948.60,558.73 L949.10,558.81 L949.60,559.02 L950.10,556.56 L950.60,558.51 L951.10,557.95 L951.60,560.84 L952.10,561.81 L952.60,561.03 L953.10,561.83 L953.60,559.87 L954.10,560.92 L954.60,560.44 L955.00,584.00 L955.30,585.60 L956.20,584.50 L956.40,563.26 L956.90,562.86 L957.40,563.82 L957.90,563.82 L958.40,561.98 L958.90,562.26 L959.40,559.99 L959.90,561.71 L960.40,561.60 L960.90,562.88 L961.40,562.50 L961.90,560.94 L962.40,561.43 L962.90,562.51 L963.40,560.27 L963.90,561.43 L964.40,560.24 L964.90,559.82 L965.40,559.39 L965.90,561.41 L966.40,559.11 L966.90,559.24 L967.40,559.45 L967.90,560.74 L968.40,557.96 L968.90,558.89 L969.40,558.96 L969.90,559.78 L970.40,559.62 L970.90,559.89 L971.40,558.14 L971.90,558.70 L972.20,584.00 L972.50,585.60 L973.00,584.50 L973.20,556.38 L973.70,557.65 L974.20,557.46 L974.70,554.47 L975.20,554.13 L975.70,553.89 L976.20,553.75 L976.70,554.80 L977.20,555.39 L977.70,554.59 L978.20,554.01 L978.70,555.59 L979.20,555.58 L979.70,556.21 L980.20,557.45 L980.70,556.61 L981.20,556.05 L981.70,556.38 L982.20,556.56 L982.70,554.57 L983.20,557.28 L983.70,556.90 L984.20,557.20 L984.70,556.95 L985.20,555.66 L985.70,555.68 L986.20,554.86 L986.70,556.90 L987.20,555.40 L987.70,555.75 L988.20,556.53 L988.70,556.72 L989.20,557.49 L989.30,584.00 L989.60,585.60 L991.00,584.50 L991.20,567.67 L991.70,567.75 L992.20,568.48 L992.70,568.57 L993.20,570.06 L993.70,570.23 L994.20,574.20 L994.70,574.62 L995.20,573.28 L995.70,572.11 L996.20,570.91 L996.70,569.47 L997.20,568.19 L997.70,571.52 L998.20,572.98 L998.70,572.29 L999.20,573.15 L999.70,572.37 L1000.20,572.93 L1000.70,574.20 L1001.20,573.98 L1001.70,575.12 L1002.20,572.32 L1002.70,571.21 L1003.20,573.51 L1003.70,571.49 L1004.20,569.67 L1004.70,570.44 L1005.20,568.29 L1005.70,569.39 L1006.20,570.53 L1006.70,570.16 L1006.80,584.00 L1007.10,585.60 L1007.90,584.50 L1008.10,556.65 L1008.60,555.39 L1009.10,555.85 L1009.60,555.33 L1010.10,557.40 L1010.60,556.75 L1011.10,557.67 L1011.60,556.35 L1012.10,556.06 L1012.60,557.70 L1013.10,558.00 L1013.60,557.33 L1014.10,556.93 L1014.60,556.72 L1015.10,556.22 L1015.60,554.33 L1016.10,555.03 L1016.60,554.39 L1017.10,553.22 L1017.60,553.09 L1018.10,553.77 L1018.60,553.58 L1019.10,554.84 L1019.60,555.56 L1020.10,553.81 L1020.60,555.30 L1021.10,555.38 L1021.60,555.19 L1022.10,553.22 L1022.60,552.67 L1023.10,552.63 L1023.60,584.00 L1023.90,585.60 L1025.30,584.50 L1025.50,558.03 L1026.00,558.05 L1026.50,559.40 L1027.00,560.28 L1027.50,560.09 L1028.00,558.93 L1028.50,559.49 L1029.00,559.96 L1029.50,557.67 L1030.00,559.51 L1030.50,560.44 L1031.00,560.15 L1031.50,560.18 L1032.00,559.43 L1032.50,558.60 L1033.00,560.68 L1033.50,559.34 L1034.00,560.96 L1034.50,561.45 L1035.00,559.54 L1035.50,559.50 L1036.00,561.18 L1036.50,560.41 L1037.00,558.57 L1037.50,558.37 L1038.00,558.38 L1038.50,560.88 L1039.00,560.65 L1039.50,558.62 L1040.00,560.88 L1040.50,561.45 L1041.00,560.50 L1041.50,559.52 L1042.00,560.16 L1042.20,584.00 L1042.50,585.60 L1043.30,584.50 L1043.50,552.32 L1044.00,551.45 L1044.50,554.01 L1045.00,552.48 L1045.50,551.59 L1046.00,552.39 L1046.50,550.85 L1047.00,552.31 L1047.50,552.23 L1048.00,550.33 L1048.50,550.52 L1049.00,550.71 L1049.50,550.61 L1050.00,551.78 L1050.50,550.79 L1051.00,551.37 L1051.50,550.51 L1052.00,553.06 L1052.50,551.34 L1053.00,551.74 L1053.50,552.20 L1054.00,553.29 L1054.50,551.91 L1055.00,553.67 L1055.50,552.51 L1056.00,552.77 L1056.50,552.91 L1057.00,551.46 L1057.50,553.56 L1058.00,553.49 L1058.50,553.66 L1059.00,584.00 L1059.30,585.60 L1060.10,584.50 L1060.30,555.96 L1060.80,553.95 L1061.30,554.72 L1061.80,555.19 L1062.30,554.31 L1062.80,553.24 L1063.30,553.53 L1063.80,553.31 L1064.30,553.98 L1064.80,551.94 L1065.30,553.52 L1065.80,552.65 L1066.30,552.86 L1066.80,554.57 L1067.30,553.85 L1067.80,554.15 L1068.30,554.87 L1068.80,555.42 L1069.30,553.98 L1069.80,554.59 L1070.30,554.31 L1070.80,554.39 L1071.30,555.03 L1071.80,554.32 L1072.30,554.68 L1072.80,554.63 L1073.30,556.24 L1073.80,555.59 L1074.30,556.20 L1074.70,584.00 L1075.00,585.60 L1076.70,584.50 L1076.90,566.41 L1077.40,563.83 L1077.90,564.29 L1078.40,565.02 L1078.90,564.19 L1079.40,561.44 L1079.90,560.89 L1080.40,561.41 L1080.90,559.73 L1081.40,559.77 L1081.90,558.73 L1082.40,560.14 L1082.90,560.01 L1083.40,559.87 L1083.90,556.99 L1084.40,558.89 L1084.90,558.96 L1085.40,557.56 L1085.90,560.18 L1086.40,560.70 L1086.90,558.55 L1087.40,561.15 L1087.90,559.62 L1088.40,559.83 L1088.90,561.27 L1089.40,560.60 L1089.90,558.28 L1090.40,558.98 L1090.90,559.08 L1091.40,559.69 L1091.90,560.73 L1092.40,561.42 L1092.80,584.00 L1093.10,585.60 L1094.80,584.50 L1095.00,555.71 L1095.50,553.52 L1096.00,555.30 L1096.50,555.00 L1097.00,553.71 L1097.50,554.77 L1098.00,555.77 L1098.50,555.48 L1099.00,554.11 L1099.50,556.80 L1100.00,555.92 L1100.50,556.26 L1101.00,553.24 L1101.50,553.50 L1102.00,552.53 L1102.50,555.14 L1103.00,553.77 L1103.50,553.56 L1104.00,554.75 L1104.50,556.57 L1105.00,556.52 L1105.50,554.98 L1106.00,554.88 L1106.50,557.51 L1107.00,556.56 L1107.50,557.14 L1108.00,555.35 L1108.50,555.42 L1109.00,557.60 L1109.50,556.76 L1109.60,584.00 L1109.90,585.60 L1111.40,584.50 L1111.60,556.48 L1112.10,559.13 L1112.60,558.03 L1113.10,558.44 L1113.60,556.02 L1114.10,558.36 L1114.60,555.71 L1115.10,558.19 L1115.60,557.00 L1116.10,556.76 L1116.60,557.57 L1117.10,558.89 L1117.60,556.91 L1118.10,556.59 L1118.60,557.99 L1119.10,557.15 L1119.60,556.68 L1120.10,556.78 L1120.60,556.36 L1121.10,556.78 L1121.60,557.07 L1122.10,556.99 L1122.60,558.38 L1123.10,556.81 L1123.60,557.40 L1124.10,556.29 L1124.60,556.74 L1125.10,555.61 L1125.60,556.27 L1126.10,555.45 L1126.50,584.00 L1126.80,585.60 L1128.90,584.50 L1129.10,553.23 L1129.60,552.59 L1130.10,551.37 L1130.60,552.22 L1131.10,553.63 L1131.60,550.92 L1132.10,553.13 L1132.60,551.83 L1133.10,552.01 L1133.60,553.22 L1134.10,551.93 L1134.60,552.42 L1135.10,553.13 L1135.60,554.19 L1136.10,552.27 L1136.60,553.96 L1137.10,553.66 L1137.60,553.44 L1138.10,552.70 L1138.60,552.51 L1139.10,551.57 L1139.60,551.82 L1140.10,551.63 L1140.60,553.77 L1141.10,552.25 L1141.60,552.12 L1142.10,552.04 L1142.60,554.63 L1143.10,554.89 L1143.60,554.41 L1144.10,553.30 L1144.60,584.00 L1144.90,585.60 L1146.30,584.50 L1146.50,553.84 L1147.00,553.67 L1147.50,553.87 L1148.00,552.57 L1148.50,553.16 L1149.00,552.24 L1149.50,554.23 L1150.00,554.01 L1150.50,552.40 L1151.00,551.18 L1151.50,553.24 L1152.00,550.89 L1152.50,550.79 L1153.00,549.40 L1153.50,551.00 L1154.00,551.67 L1154.50,552.13 L1155.00,551.54 L1155.50,552.89 L1156.00,551.67 L1156.50,552.87 L1157.00,552.69 L1157.50,554.05 L1158.00,553.28 L1158.50,553.60 L1159.00,554.87 L1159.50,555.02 L1160.00,556.52 L1160.50,556.72 L1161.00,557.80 L1161.50,584.00 L1161.80,585.60 L1163.20,584.50 L1163.40,558.45 L1163.90,558.58 L1164.40,559.04 L1164.90,557.41 L1165.40,557.14 L1165.90,559.19 L1166.40,556.45 L1166.90,558.23 L1167.40,557.91 L1167.90,555.93 L1168.40,558.40 L1168.90,558.52 L1169.40,557.61 L1169.90,557.89 L1170.40,558.07 L1170.90,555.86 L1171.40,557.34 L1171.90,557.61 L1172.40,559.01 L1172.90,559.24 L1173.40,559.64 L1173.90,559.20 L1174.40,560.86 L1174.90,560.94 L1175.40,561.72 L1175.90,560.99 L1176.40,562.72 L1176.90,565.83 L1177.40,569.33 L1177.80,584.00 L1178.10,585.60 L1178.50,586.00 L1185.00,586.00 L1185.00,586.6 L910.90,586.6 Z" fill="#0000ff" stroke="none"/><path d="M910.90,586.1 L920.7,585.0" fill="none" stroke="#0000ff" stroke-width="1.4"/><path d="M1178.50,586.0 L1185.00,586.0" fill="none" stroke="#0000ff" stroke-width="1.4"/>
<rect x="910.90" y="517.20" width="274.10" height="119.70" fill="none" stroke="#000" stroke-width="1.7"/>
<line x1="903.90" y1="612.77" x2="910.90" y2="612.77" stroke="#000" stroke-width="1.6"/>
<text x="857.69" y="616.97" font-size="10.30" textLength="39.07" lengthAdjust="spacingAndGlyphs" fill="#000">−10000</text>
<line x1="903.90" y1="586.80" x2="910.90" y2="586.80" stroke="#000" stroke-width="1.6"/>
<text x="890.55" y="591.00" font-size="10.30" textLength="6.18" lengthAdjust="spacingAndGlyphs" fill="#000">0</text>
<line x1="903.90" y1="560.83" x2="910.90" y2="560.83" stroke="#000" stroke-width="1.6"/>
<text x="865.81" y="565.03" font-size="10.30" textLength="30.92" lengthAdjust="spacingAndGlyphs" fill="#000">10000</text>
<line x1="903.90" y1="534.86" x2="910.90" y2="534.86" stroke="#000" stroke-width="1.6"/>
<text x="865.81" y="539.06" font-size="10.30" textLength="30.92" lengthAdjust="spacingAndGlyphs" fill="#000">20000</text>
<line x1="911.80" y1="636.90" x2="911.80" y2="643.90" stroke="#000" stroke-width="1.6"/>
<text x="908.71" y="660.00" font-size="10.30" textLength="6.18" lengthAdjust="spacingAndGlyphs" fill="#000">0</text>
<line x1="975.15" y1="636.90" x2="975.15" y2="643.90" stroke="#000" stroke-width="1.6"/>
<text x="965.87" y="660.00" font-size="10.30" textLength="18.55" lengthAdjust="spacingAndGlyphs" fill="#000">500</text>
<line x1="1038.50" y1="636.90" x2="1038.50" y2="643.90" stroke="#000" stroke-width="1.6"/>
<text x="1025.93" y="660.00" font-size="10.30" textLength="24.74" lengthAdjust="spacingAndGlyphs" fill="#000">1000</text>
<line x1="1101.85" y1="636.90" x2="1101.85" y2="643.90" stroke="#000" stroke-width="1.6"/>
<text x="1089.28" y="660.00" font-size="10.30" textLength="24.74" lengthAdjust="spacingAndGlyphs" fill="#000">1500</text>
<line x1="1165.20" y1="636.90" x2="1165.20" y2="643.90" stroke="#000" stroke-width="1.6"/>
<text x="1152.77" y="660.00" font-size="10.30" textLength="24.74" lengthAdjust="spacingAndGlyphs" fill="#000">2000</text>
<text x="1043.72" y="677.00" font-size="11.05" textLength="7.14" lengthAdjust="spacingAndGlyphs" fill="#000">X</text>
<text x="826.55" y="577.80" font-size="11.05" textLength="34.83" lengthAdjust="spacingAndGlyphs" fill="#000" transform="rotate(-90 844.00 577.80)">counts</text>
<text x="1174.15" y="575.20" font-size="11.05" textLength="38.71" lengthAdjust="spacingAndGlyphs" fill="#000" transform="rotate(90 1193.70 575.20)">cut in x</text>
<rect x="1108.40" y="520.30" width="73.2" height="15.6" rx="2" ry="2" fill="#ffffff" fill-opacity="0.8" stroke="#cccccc" stroke-width="1"/><line x1="1111.40" y1="528.10" x2="1133.40" y2="528.10" stroke="#0000ff" stroke-width="1.4"/><text x="1136.97" y="531.50" font-size="10.30" textLength="38.63" lengthAdjust="spacingAndGlyphs" fill="#000">y=2048</text>
<path d="M910.90,751.28 L911.40,751.79 L911.90,751.53 L912.40,751.92 L912.90,751.97 L913.40,751.09 L913.90,751.02 L914.40,752.36 L914.90,751.45 L915.40,751.43 L915.90,752.66 L916.40,751.84 L916.90,752.44 L917.40,751.88 L917.90,752.16 L918.40,751.39 L918.90,752.18 L919.40,752.57 L919.90,752.04 L920.40,752.41 L920.90,752.31 L921.40,751.36 L921.90,752.48 L922.40,752.23 L922.90,751.79 L923.40,751.37 L923.90,752.72 L924.40,752.11 L924.90,752.52 L925.40,752.79 L925.90,752.55 L926.40,752.89 L926.90,752.07 L927.40,752.74 L927.90,752.18 L928.40,752.98 L928.90,752.91 L929.40,751.68 L929.90,751.76 L930.40,751.90 L930.90,753.12 L931.40,752.29 L931.90,752.61 L932.40,752.10 L932.90,752.45 L933.40,752.27 L933.90,752.23 L934.40,752.63 L934.90,752.64 L935.40,753.17 L935.90,752.83 L936.40,753.24 L936.90,753.14 L937.40,753.38 L937.90,752.87 L938.40,752.04 L938.90,753.14 L939.40,753.30 L939.90,753.19 L940.40,752.64 L940.90,752.86 L941.40,752.04 L941.90,753.02 L942.40,752.59 L942.90,752.12 L943.40,751.75 L943.90,753.00 L944.40,753.20 L944.90,751.75 L945.40,752.87 L945.90,752.24 L946.40,751.81 L946.90,752.02 L947.40,752.77 L947.90,752.92 L948.40,751.58 L948.90,752.48 L949.40,751.56 L949.90,752.62 L950.40,751.99 L950.90,752.85 L951.40,753.00 L951.90,752.23 L952.40,753.00 L952.90,751.89 L953.40,751.50 L953.90,752.32 L954.40,751.40 L954.90,751.65 L955.40,751.98 L955.90,752.29 L956.40,751.55 L956.90,751.35 L957.40,752.66 L957.90,751.76 L958.40,752.78 L958.90,752.66 L959.40,751.82 L959.90,751.94 L960.40,752.04 L960.90,752.26 L961.40,752.19 L961.90,752.15 L962.40,752.26 L962.90,752.79 L963.40,752.11 L963.90,752.01 L964.40,752.48 L964.90,751.73 L965.40,751.84 L965.90,752.94 L966.40,752.22 L966.90,752.28 L967.40,751.44 L967.90,752.10 L968.40,752.38 L968.90,751.50 L969.40,752.46 L969.90,752.50 L970.40,751.60 L970.90,752.53 L971.40,752.28 L971.90,752.64 L972.40,752.13 L972.90,752.71 L973.40,752.78 L973.90,751.58 L974.40,751.58 L974.90,752.50 L975.40,752.90 L975.90,751.70 L976.40,751.96 L976.90,752.12 L977.40,751.62 L977.90,751.63 L978.40,751.48 L978.90,751.51 L979.40,751.81 L979.90,751.27 L980.40,751.33 L980.90,751.90 L981.40,750.64 L981.90,751.45 L982.40,751.65 L982.90,750.91 L983.40,750.70 L983.90,751.57 L984.40,750.60 L984.90,750.46 L985.40,750.79 L985.90,751.15 L986.40,750.13 L986.90,750.42 L987.40,750.37 L987.90,751.11 L988.40,750.41 L988.90,751.02 L989.40,749.86 L989.90,750.06 L990.40,750.50 L990.90,750.81 L991.40,750.05 L991.90,749.63 L992.40,749.40 L992.90,749.99 L993.40,749.39 L993.90,750.31 L994.40,750.29 L994.90,749.18 L995.40,749.27 L995.90,750.05 L996.40,749.73 L996.90,749.97 L997.40,749.22 L997.90,748.86 L998.40,749.11 L998.90,749.89 L999.40,749.04 L999.90,749.15 L1000.40,749.25 L1000.90,749.24 L1001.40,749.20 L1001.90,750.01 L1002.40,748.77 L1002.90,748.51 L1003.40,750.00 L1003.90,749.88 L1004.40,750.04 L1004.90,749.14 L1005.40,749.95 L1005.90,749.90 L1006.40,748.75 L1006.90,749.58 L1007.40,749.71 L1007.90,749.41 L1008.40,749.17 L1008.90,748.79 L1009.40,748.85 L1009.90,748.66 L1010.40,748.39 L1010.90,749.21 L1011.40,748.71 L1011.90,749.53 L1012.40,748.29 L1012.90,749.65 L1013.40,749.23 L1013.90,749.49 L1014.40,749.35 L1014.90,749.25 L1015.40,748.63 L1015.90,747.62 L1016.40,748.69 L1016.90,747.67 L1017.40,747.77 L1017.90,748.25 L1018.40,747.93 L1018.90,747.65 L1019.40,748.38 L1019.90,747.76 L1020.40,747.22 L1020.90,746.98 L1021.40,747.85 L1021.90,747.13 L1022.40,747.52 L1022.90,746.72 L1023.40,746.37 L1023.90,746.81 L1024.40,747.16 L1024.90,746.02 L1025.40,746.91 L1025.90,747.02 L1026.40,746.73 L1026.90,746.66 L1027.40,745.25 L1027.90,746.14 L1028.40,746.41 L1028.90,745.01 L1029.40,745.26 L1029.90,745.15 L1030.40,745.51 L1030.90,745.31 L1031.40,745.35 L1031.90,745.80 L1032.40,744.52 L1032.90,744.57 L1033.40,744.65 L1033.90,744.60 L1034.40,744.48 L1034.90,745.89 L1035.40,745.66 L1035.90,744.39 L1036.40,745.02 L1036.90,744.68 L1037.40,744.64 L1037.90,744.66 L1038.40,745.10 L1038.90,744.96 L1039.40,744.57 L1039.90,744.26 L1040.40,744.44 L1040.90,744.07 L1041.40,744.73 L1041.90,744.94 L1042.40,744.37 L1042.90,743.85 L1043.40,743.97 L1043.90,744.24 L1044.40,744.58 L1044.90,744.82 L1045.40,744.14 L1045.90,744.78 L1046.40,744.45 L1046.90,744.11 L1047.40,743.98 L1047.90,744.14 L1048.40,744.43 L1048.90,743.94 L1049.40,744.34 L1049.90,743.91 L1050.40,743.44 L1050.90,743.79 L1051.40,743.92 L1051.90,742.80 L1052.40,743.24 L1052.90,743.12 L1053.40,743.72 L1053.90,743.69 L1054.40,742.67 L1054.90,743.38 L1055.40,743.09 L1055.90,742.12 L1056.40,742.32 L1056.90,741.65 L1057.40,742.63 L1057.90,742.27 L1058.40,742.50 L1058.90,742.23 L1059.40,741.91 L1059.90,741.89 L1060.40,741.50 L1060.90,740.64 L1061.40,741.29 L1061.90,740.23 L1062.40,740.32 L1062.90,741.19 L1063.40,739.88 L1063.90,739.82 L1064.40,739.69 L1064.90,740.80 L1065.40,739.54 L1065.90,739.15 L1066.40,740.32 L1066.90,739.03 L1067.40,740.05 L1067.90,739.64 L1068.40,739.76 L1068.90,739.81 L1069.40,739.07 L1069.90,739.28 L1070.40,737.92 L1070.90,738.96 L1071.40,738.52 L1071.90,738.84 L1072.40,737.87 L1072.90,738.90 L1073.40,739.20 L1073.90,737.80 L1074.40,738.22 L1074.90,738.60 L1075.40,739.02 L1075.90,738.09 L1076.40,737.99 L1076.90,738.10 L1077.40,738.69 L1077.90,738.91 L1078.40,738.33 L1078.90,738.29 L1079.40,738.33 L1079.90,738.26 L1080.40,738.37 L1080.90,737.83 L1081.40,738.50 L1081.90,739.26 L1082.40,738.36 L1082.90,738.90 L1083.40,737.96 L1083.90,738.81 L1084.40,738.91 L1084.90,738.78 L1085.40,738.53 L1085.90,738.47 L1086.40,738.73 L1086.90,739.14 L1087.40,737.94 L1087.90,737.85 L1088.40,738.90 L1088.90,739.17 L1089.40,738.53 L1089.90,738.41 L1090.40,738.85 L1090.90,738.00 L1091.40,738.13 L1091.90,738.02 L1092.40,738.64 L1092.90,738.20 L1093.40,738.07 L1093.90,738.81 L1094.40,739.23 L1094.90,738.17 L1095.40,738.83 L1095.90,738.36 L1096.40,739.07 L1096.90,738.64 L1097.40,738.13 L1097.90,738.05 L1098.40,737.74 L1098.90,738.37 L1099.40,738.05 L1099.90,737.55 L1100.40,737.69 L1100.90,737.46 L1101.40,738.02 L1101.90,736.85 L1102.40,738.04 L1102.90,737.06 L1103.40,737.09 L1103.90,736.72 L1104.40,737.14 L1104.90,736.96 L1105.40,736.37 L1105.90,736.08 L1106.40,736.30 L1106.90,736.36 L1107.40,735.46 L1107.90,735.83 L1108.40,736.03 L1108.90,735.08 L1109.40,734.54 L1109.90,734.38 L1110.40,734.99 L1110.90,734.76 L1111.40,735.05 L1111.90,734.72 L1112.40,733.58 L1112.90,733.33 L1113.40,733.28 L1113.90,733.00 L1114.40,733.66 L1114.90,733.75 L1115.40,733.65 L1115.90,732.45 L1116.40,733.27 L1116.90,732.22 L1117.40,732.23 L1117.90,732.56 L1118.40,731.37 L1118.90,731.21 L1119.40,732.24 L1119.90,731.20 L1120.40,731.14 L1120.90,731.34 L1121.40,731.33 L1121.90,730.09 L1122.40,730.46 L1122.90,730.45 L1123.40,730.37 L1123.90,729.77 L1124.40,730.20 L1124.90,730.71 L1125.40,729.78 L1125.90,729.99 L1126.40,729.28 L1126.90,729.50 L1127.40,730.10 L1127.90,729.18 L1128.40,730.39 L1128.90,730.40 L1129.40,729.07 L1129.90,730.39 L1130.40,729.45 L1130.90,730.06 L1131.40,730.01 L1131.90,729.24 L1132.40,729.82 L1132.90,729.75 L1133.40,729.97 L1133.90,729.07 L1134.40,729.82 L1134.90,730.13 L1135.40,729.63 L1135.90,729.39 L1136.40,728.68 L1136.90,729.26 L1137.40,729.00 L1137.90,729.56 L1138.40,729.46 L1138.90,729.26 L1139.40,728.61 L1139.90,729.32 L1140.40,729.27 L1140.90,728.52 L1141.40,729.62 L1141.90,729.24 L1142.40,728.37 L1142.90,729.66 L1143.40,728.38 L1143.90,728.67 L1144.40,729.28 L1144.90,729.08 L1145.40,729.00 L1145.90,729.13 L1146.40,728.82 L1146.90,728.57 L1147.40,728.34 L1147.90,728.16 L1148.40,729.18 L1148.90,729.24 L1149.40,728.89 L1149.90,729.19 L1150.40,728.57 L1150.90,728.41 L1151.40,728.58 L1151.90,729.36 L1152.40,728.02 L1152.90,728.74 L1153.40,728.32 L1153.90,729.14 L1154.40,728.47 L1154.90,728.42 L1155.40,728.52 L1155.90,728.73 L1156.40,729.09 L1156.90,728.41 L1157.40,729.19 L1157.90,728.00 L1158.40,728.24 L1158.90,727.96 L1159.40,727.97 L1159.90,729.02 L1160.40,728.93 L1160.90,728.05 L1161.40,728.04 L1161.90,728.40 L1162.40,728.91 L1162.90,729.01 L1163.40,728.89 L1163.90,728.63 L1164.40,727.91 L1164.90,728.30 L1165.40,727.96 L1165.90,728.48 L1166.40,728.54 L1166.90,727.94 L1167.40,728.00 L1167.90,728.84 L1168.40,727.63 L1168.90,728.85 L1169.40,728.98 L1169.90,729.07 L1170.40,728.15 L1170.90,728.41 L1171.40,728.44 L1171.90,728.51 L1172.40,729.05 L1172.90,728.58 L1173.40,727.95 L1173.90,728.83 L1174.40,728.22 L1174.90,728.39 L1175.40,728.58 L1175.90,727.41 L1176.40,728.63 L1176.90,728.44 L1177.40,728.16 L1177.90,728.20 L1178.40,728.09 L1178.90,727.65 L1179.40,728.18 L1179.90,727.38 L1180.40,728.11 L1180.90,728.33 L1181.40,727.99 L1181.90,728.18 L1182.40,728.79 L1182.90,728.68 L1183.40,727.45 L1183.90,728.49 L1184.40,728.21 L1184.90,727.28" fill="none" stroke="#0000ff" stroke-width="1.6" stroke-linejoin="round"/>
<rect x="910.90" y="688.50" width="274.10" height="119.70" fill="none" stroke="#000" stroke-width="1.7"/>
<line x1="903.90" y1="784.77" x2="910.90" y2="784.77" stroke="#000" stroke-width="1.6"/>
<text x="857.69" y="788.97" font-size="10.30" textLength="39.07" lengthAdjust="spacingAndGlyphs" fill="#000">−10000</text>
<line x1="903.90" y1="758.80" x2="910.90" y2="758.80" stroke="#000" stroke-width="1.6"/>
<text x="890.55" y="763.00" font-size="10.30" textLength="6.18" lengthAdjust="spacingAndGlyphs" fill="#000">0</text>
<line x1="903.90" y1="732.83" x2="910.90" y2="732.83" stroke="#000" stroke-width="1.6"/>
<text x="865.81" y="737.03" font-size="10.30" textLength="30.92" lengthAdjust="spacingAndGlyphs" fill="#000">10000</text>
<line x1="903.90" y1="706.86" x2="910.90" y2="706.86" stroke="#000" stroke-width="1.6"/>
<text x="865.81" y="711.06" font-size="10.30" textLength="30.92" lengthAdjust="spacingAndGlyphs" fill="#000">20000</text>
<line x1="910.90" y1="808.20" x2="910.90" y2="815.20" stroke="#000" stroke-width="1.6"/>
<text x="907.81" y="831.60" font-size="10.30" textLength="6.18" lengthAdjust="spacingAndGlyphs" fill="#000">0</text>
<line x1="977.70" y1="808.20" x2="977.70" y2="815.20" stroke="#000" stroke-width="1.6"/>
<text x="965.13" y="831.60" font-size="10.30" textLength="24.74" lengthAdjust="spacingAndGlyphs" fill="#000">1000</text>
<line x1="1044.50" y1="808.20" x2="1044.50" y2="815.20" stroke="#000" stroke-width="1.6"/>
<text x="1032.07" y="831.60" font-size="10.30" textLength="24.74" lengthAdjust="spacingAndGlyphs" fill="#000">2000</text>
<line x1="1111.30" y1="808.20" x2="1111.30" y2="815.20" stroke="#000" stroke-width="1.6"/>
<text x="1098.94" y="831.60" font-size="10.30" textLength="24.74" lengthAdjust="spacingAndGlyphs" fill="#000">3000</text>
<line x1="1178.10" y1="808.20" x2="1178.10" y2="815.20" stroke="#000" stroke-width="1.6"/>
<text x="1165.82" y="831.60" font-size="10.30" textLength="24.74" lengthAdjust="spacingAndGlyphs" fill="#000">4000</text>
<text x="1045.82" y="849.00" font-size="11.05" textLength="6.36" lengthAdjust="spacingAndGlyphs" fill="#000">Y</text>
<text x="826.55" y="750.80" font-size="11.05" textLength="34.83" lengthAdjust="spacingAndGlyphs" fill="#000" transform="rotate(-90 844.00 750.80)">counts</text>
<text x="1174.30" y="749.40" font-size="11.05" textLength="38.71" lengthAdjust="spacingAndGlyphs" fill="#000" transform="rotate(90 1193.90 749.40)">cut in y</text>
<rect x="1108.90" y="692.00" width="73.2" height="15.6" rx="2" ry="2" fill="#ffffff" fill-opacity="0.8" stroke="#cccccc" stroke-width="1"/><line x1="1111.90" y1="699.80" x2="1133.90" y2="699.80" stroke="#0000ff" stroke-width="1.4"/><text x="1137.37" y="703.20" font-size="10.30" textLength="38.63" lengthAdjust="spacingAndGlyphs" fill="#000">x=1074</text>
</svg></body></html>
